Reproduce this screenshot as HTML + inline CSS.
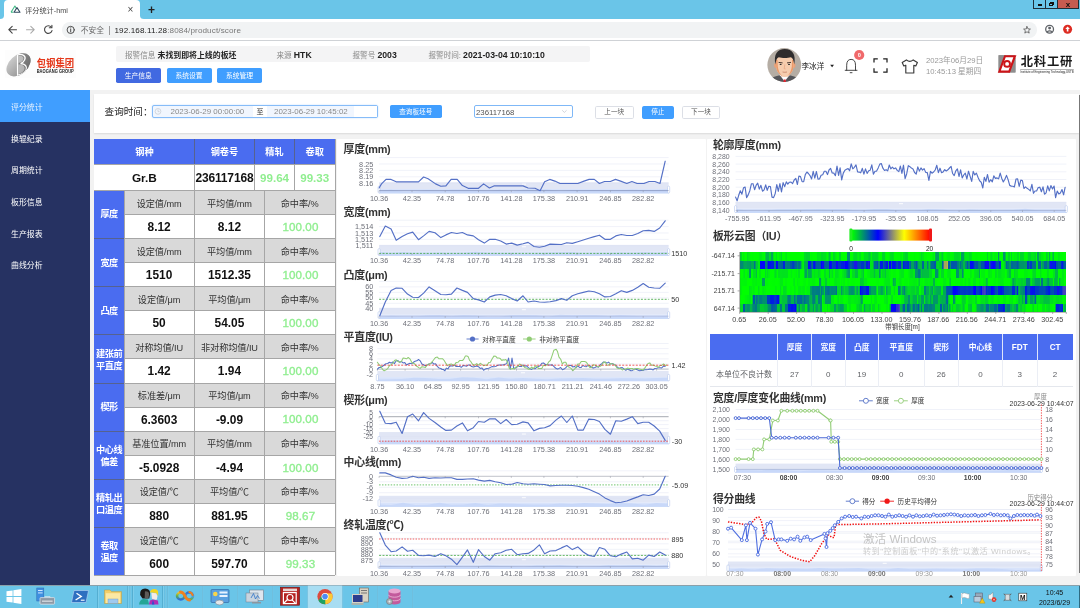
<!DOCTYPE html>
<html lang="zh-CN"><head><meta charset="utf-8"><title>评分统计-hmi</title><style>
*{box-sizing:border-box;margin:0;padding:0}
html,body{width:1080px;height:608px;overflow:hidden}
body{position:relative;background:#f2f2f2;font-family:"Liberation Sans","Noto Sans CJK SC",sans-serif;color:#333;font-size:9px;line-height:1}
.a{position:absolute}
.t{position:absolute;white-space:nowrap;line-height:1}
.c{text-align:center}
svg{position:absolute;left:0;top:0;overflow:visible}
svg text{font-family:"Liberation Sans","Noto Sans CJK SC",sans-serif}
.btn{position:absolute;color:#fff;font-size:7px;text-align:center;border-radius:1.7px;white-space:nowrap}
.cell{position:absolute;text-align:center;white-space:nowrap;overflow:hidden}
</style></head>
<body>
<div id="root" style="position:absolute;left:0;top:0;width:1080px;height:608px;will-change:transform">
<div class="a" style="left:0px;top:0px;width:1080px;height:19px;background:#6ac5e8"></div>
<div class="a" style="left:4px;top:0.4px;width:136px;height:19px;background:#fff;border-radius:4px 4px 0 0"></div>
<svg width="30" height="20" viewBox="0 0 30 20"><path d="M4 19 V19.5 H0 V19 Q4 19 4 15.5 Z M140 19 V19.5 H144 V19 Q140 19 140 15.5 Z" fill="#fff"/><path d="M11 12.2 L14.9 6 L16.6 8.7" fill="none" stroke="#3fb984" stroke-width="1.05" stroke-linejoin="round"/><path d="M11 12.2 H13.4" stroke="#3fb984" stroke-width="1.05"/><path d="M14 12.2 L17 7.6 L20 12.2 Z" fill="none" stroke="#2f495e" stroke-width="1.05" stroke-linejoin="round"/></svg>
<svg class="a" width="1" height="1"><text x="25.00" y="13" font-size="7.2" fill="#444">评分统计-hmi</text></svg>
<svg class="a" width="1" height="1"><text x="127.50" y="13" font-size="10" fill="#444">×</text></svg>
<svg class="a" width="1" height="1"><text x="148.00" y="14" font-size="12" fill="#222" font-weight="bold">+</text></svg>
<div class="a" style="left:1033.2px;top:0px;width:45.6px;height:8.7px;background:#1f2d36"></div>
<div class="a" style="left:1034px;top:0px;width:11.2px;height:8px;background:#6ac5e8"></div>
<div class="a" style="left:1037.6px;top:4.4px;width:4.6px;height:1.5px;background:#111"></div>
<div class="a" style="left:1046px;top:0px;width:11.4px;height:8px;background:#6ac5e8"></div>
<div class="a" style="left:1050.2px;top:2px;width:3.6px;height:3.4px;border:1.1px solid #111"></div>
<div class="a" style="left:1049.2px;top:3px;width:3.6px;height:3.4px;border:1.1px solid #111;background:#6ac5e8"></div>
<div class="a" style="left:1058px;top:0px;width:20.2px;height:8px;background:#c65b50"></div>
<svg class="a" width="1" height="1"><text x="1065.70" y="7" font-size="8" fill="#111" font-weight="bold">x</text></svg>
<div class="a" style="left:0px;top:19px;width:1080px;height:21.5px;background:#fff"></div>
<div class="a" style="left:0px;top:40.1px;width:1080px;height:0.8px;background:#cfd2d6"></div>
<div class="a" style="left:62px;top:22px;width:974.6px;height:15.6px;background:#f1f3f4;border-radius:7.8px"></div>
<svg width="1080" height="41" viewBox="0 0 1080 41">
<g fill="none" stroke="#444" stroke-width="1.1" stroke-linecap="round" stroke-linejoin="round">
<path d="M16.5 29.7 H9 M12.2 26.3 L8.8 29.7 L12.2 33.1"/>
<path d="M26.5 29.7 H34 M30.8 26.3 L34.2 29.7 L30.8 33.1" stroke="#aaa"/>
<path d="M51.3 27.2 A3.8 3.8 0 1 0 52 30.6"/>
<path d="M51.9 25.2 V27.8 H49.3" />
<circle cx="70.7" cy="29.9" r="3.6" stroke="#444" stroke-width="0.95"/>
<path d="M70.7 29.4 V32 M70.7 27.8 V28.1" stroke="#444" stroke-width="0.95"/>
<path d="M1027 26.6 L1028 28.9 L1030.4 29.1 L1028.6 30.7 L1029.2 33.1 L1027 31.8 L1024.8 33.1 L1025.4 30.7 L1023.6 29.1 L1026 28.9 Z" stroke="#555" stroke-width="0.8"/>
<circle cx="1049.6" cy="29.3" r="3.9" stroke="#5f6368" stroke-width="1.3"/>
<circle cx="1049.6" cy="28.1" r="1.45" fill="#5f6368" stroke="none"/>
<path d="M1046.9 31.9 Q1049.6 29.9 1052.3 31.9" stroke="#5f6368" stroke-width="1.1"/>
</g>
<circle cx="1067.6" cy="29.3" r="4.5" fill="#dd2c22"/>
<path d="M1067.6 26.6 L1069.9 29.1 H1068.4 V31.6 H1066.8 V29.1 H1065.3 Z" fill="#fff"/>
</svg>
<svg class="a" width="1" height="1"><text x="80.80" y="33" font-size="7.7" fill="#666">不安全</text></svg>
<div class="a" style="left:109.2px;top:25.5px;width:0.6px;height:9px;background:#999"></div>
<svg class="a" width="1" height="1"><text x="114.50" y="33" font-size="8.1" fill="#777" style="letter-spacing:0.12px"><tspan fill="#222">192.168.11.28</tspan>:8084/product/score</text></svg>
<div class="a" style="left:0px;top:40.8px;width:1080px;height:49.4px;background:#fff"></div>
<svg width="120" height="90" viewBox="0 0 120 90">
<defs>
<linearGradient id="lg1" x1="0" y1="0" x2="1" y2="1"><stop offset="0" stop-color="#e9e9e9"/><stop offset="0.45" stop-color="#b4b4b4"/><stop offset="1" stop-color="#707070"/></linearGradient>
<linearGradient id="lg2" x1="0" y1="0" x2="1" y2="1"><stop offset="0" stop-color="#9a9a9a"/><stop offset="1" stop-color="#555"/></linearGradient>
<clipPath id="lgc"><ellipse cx="18.5" cy="64.8" rx="13.9" ry="9.3" transform="rotate(-42 18.5 64.8)"/></clipPath>
</defs>
<rect x="5" y="50" width="71" height="28" fill="#fdfdfd"/>
<g clip-path="url(#lgc)">
<rect x="4" y="50" width="30" height="30" fill="url(#lg1)"/>
<rect x="17.6" y="50" width="16" height="30" fill="url(#lg2)"/>
<path d="M17.6 52 V78" stroke="#fff" stroke-width="1.3"/>
<path d="M17.6 54.6 C23 53.4 26.4 56.5 24.6 60 C23.6 62 22 63 20.6 63.6 C25 63.6 27.6 66.6 26 70 C24.4 73.2 21 74.6 17.6 75.2" fill="none" stroke="#fff" stroke-width="1.25"/>
<path d="M18.4 55.8 C22 55.2 24.4 57.2 23.2 59.8 C22.4 61.6 20.4 62.6 18.4 63 Z M18.4 64.6 C22.4 64.4 25.6 66.4 24.4 69.6 C23.4 72.2 20.8 73.6 18.4 74 Z" fill="#e8e8e8" fill-opacity="0.55"/>
</g>
<text x="36.7" y="67.3" font-size="10.3" font-weight="bold" fill="#e5391c" textLength="37.5" lengthAdjust="spacingAndGlyphs">包钢集团</text>
<text x="36.7" y="72.5" font-size="4.5" font-weight="bold" fill="#1a1a1a" textLength="37.1" lengthAdjust="spacingAndGlyphs">BAOGANG GROUP</text>
</svg>
<div class="a" style="left:116px;top:46px;width:474px;height:16.2px;background:#f4f4f5;border-radius:2px"></div>
<svg class="a" width="1" height="1"><text x="125.00" y="58" font-size="7.6" fill="#333"><tspan fill="#888">报警信息</tspan> <tspan fill="#222" font-weight="bold" font-size="8.7"><tspan font-size="7.9">未找到即将上线的板坯</tspan></tspan></text></svg>
<svg class="a" width="1" height="1"><text x="276.50" y="58" font-size="7.6" fill="#333"><tspan fill="#888">来源</tspan> <tspan fill="#222" font-weight="bold" font-size="8.7">HTK</tspan></text></svg>
<svg class="a" width="1" height="1"><text x="352.50" y="58" font-size="7.6" fill="#333"><tspan fill="#888">报警号</tspan> <tspan fill="#222" font-weight="bold" font-size="8.7">2003</tspan></text></svg>
<svg class="a" width="1" height="1"><text x="428.50" y="58" font-size="7.6" fill="#333"><tspan fill="#888">报警时间:</tspan> <tspan fill="#222" font-weight="bold" font-size="8.7">2021-03-04 10:10:10</tspan></text></svg>
<div class="a" style="left:116px;top:67.5px;width:44.5px;height:15.6px;background:#4169e1;border-radius:1.7px"></div>
<svg class="a" width="1" height="1"><text x="138.25" y="78" font-size="6.8" fill="#fff" text-anchor="middle">生产信息</text></svg>
<div class="a" style="left:166.5px;top:67.5px;width:45px;height:15.6px;background:#409eff;border-radius:1.7px"></div>
<svg class="a" width="1" height="1"><text x="189.00" y="78" font-size="6.8" fill="#fff" text-anchor="middle">系统设置</text></svg>
<div class="a" style="left:217px;top:67.5px;width:45px;height:15.6px;background:#409eff;border-radius:1.7px"></div>
<svg class="a" width="1" height="1"><text x="239.50" y="78" font-size="6.8" fill="#fff" text-anchor="middle">系统管理</text></svg>
<svg width="1080" height="92" viewBox="0 0 1080 92">
<defs><clipPath id="avc"><circle cx="784.3" cy="65" r="16.9"/></clipPath></defs>
<circle cx="784.3" cy="65" r="16.9" fill="#b5ada4"/>
<g clip-path="url(#avc)">
<path d="M765 86 Q768.5 77.2 778.6 75.4 L790.6 75.4 Q800.5 77.2 804 86 Z" fill="#55565a"/>
<path d="M779.4 74.6 L784.6 81.6 L790 74.6 Z" fill="#fff"/>
<path d="M783.8 79.4 L785.6 79.4 L786.1 83 L784.7 84 L783.3 83 Z" fill="#e8202c"/>
<rect x="781" y="70" width="7.4" height="6.4" fill="#e7a983"/>
<ellipse cx="775.6" cy="65.3" rx="1.5" ry="2.6" fill="#e9a27a"/>
<ellipse cx="794" cy="65.3" rx="1.5" ry="2.6" fill="#e9a27a"/>
<path d="M776 60 Q776 53.6 784.8 53.6 Q793.6 53.6 793.6 60 L793.4 67 Q793 72.8 787.4 76.2 Q784.8 77.6 782.2 76.2 Q776.6 72.8 776.2 67 Z" fill="#f6cdae"/>
<path d="M776 60 L776.2 67 Q776.6 72.8 782.2 76.2 Q778.4 72 777.8 66.5 L777.6 60 Z M793.6 60 L793.4 67 Q793 72.8 787.4 76.2 Q791.2 72 791.8 66.5 L792 60 Z" fill="#eb9a6a"/>
<path d="M775.4 64.6 C773.4 54 777.4 49.2 784.8 49 C792.4 49.2 796.2 54 794.2 64.6 C793.8 60.4 792.6 57.6 790.8 57.2 C787.6 58.2 782 58.2 778.8 57.2 C777 57.6 775.8 60.4 775.4 64.6 Z" fill="#2f2d2e"/>
<path d="M778.6 62.4 L782.6 62.9 M787 62.9 L791 62.4" stroke="#3a2c26" stroke-width="0.9"/>
<ellipse cx="780.6" cy="64.4" rx="1" ry="0.6" fill="#2b2b2b"/><ellipse cx="789" cy="64.4" rx="1" ry="0.6" fill="#2b2b2b"/>
<path d="M784.8 64.5 L784.2 68.8 L785.6 68.9" stroke="#e0926a" stroke-width="0.5" fill="none"/>
<path d="M782.6 72 Q784.8 72.6 787 72" stroke="#c07a5e" stroke-width="0.7" fill="none"/>
</g>
<path d="M830.2 64.8 L834 64.8 L832.1 67.2 Z" fill="#222"/>
<g fill="none" stroke="#333" stroke-width="0.9" stroke-linecap="round" stroke-linejoin="round">
<path d="M845.2 70.3 H857 M846.7 70.3 V65.2 Q846.7 59.4 851.1 59.4 Q855.5 59.4 855.5 65.2 V70.3 M850.2 72.7 H852"/>
</g>
<circle cx="859.2" cy="55" r="5.1" fill="#f0696b"/>
<g fill="none" stroke="#1f1f1f" stroke-width="1.25" stroke-linejoin="miter">
<path d="M874 62.6 V58.8 H877.8 M883.2 58.8 H887 V62.6 M887 68.2 V72 H883.2 M877.8 72 H874 V68.2"/>
</g>
<path d="M906.4 59.9 L902.2 62.6 L903.8 66 L905.8 65.2 V73 H913.8 V65.2 L915.8 66 L917.4 62.6 L913.2 59.9 Q909.8 62.8 906.4 59.9 Z" fill="none" stroke="#3a3a3a" stroke-width="1.15" stroke-linejoin="round"/>
<!-- USTB logo -->
<rect x="999.3" y="56" width="15" height="15.7" fill="#fff" stroke="#8e8e8e" stroke-width="1.5"/>
<path d="M998.6 55.3 H1006 L1000.6 70 L998.6 70 Z M1015.7 72.4 H1008.4 L1013.8 57.8 L1015.7 57.8 Z" fill="#8e8e8e"/>
<path d="M1005 56.2 H1014.9 L1009.2 71.6 H999.3 Z" fill="#fff" stroke="#cc1418" stroke-width="2.1" stroke-linejoin="miter"/>
<circle cx="1007.1" cy="63.9" r="2.9" fill="#fff" stroke="#cc1418" stroke-width="1.9"/>
<rect x="1020.2" y="69" width="53.6" height="0.45" fill="#555"/>
<text x="1020.4" y="72.6" font-size="3.4" fill="#222" textLength="53.2" lengthAdjust="spacingAndGlyphs">Institute of Engineering Technology,USTB</text>
</svg><svg class="a" width="1" height="1"><text x="801.50" y="69" font-size="7.6" fill="#222">李冰洋</text></svg><svg class="a" width="1" height="1"><text x="859.20" y="57" font-size="5.6" fill="#fff" font-weight="bold" text-anchor="middle">0</text></svg><svg class="a" width="1" height="1"><text x="926.00" y="63" font-size="7.7" fill="#999">2023年06月29日</text></svg><svg class="a" width="1" height="1"><text x="926.00" y="74" font-size="7.7" fill="#999">10:45:13 星期四</text></svg><svg class="a" width="1" height="1"><text x="1020.80" y="66" font-size="12.3" fill="#1a1a1a" font-weight="bold" style="letter-spacing:0.75px">北科工研</text></svg>
<div class="a" style="left:0px;top:90.2px;width:90px;height:495px;background:#263262"></div>
<div class="a" style="left:0px;top:90.2px;width:90px;height:31.6px;background:#409eff"></div>
<svg class="a" width="1" height="1"><text x="11.00" y="110" font-size="7.9" fill="#e8f3ff">评分统计</text></svg>
<svg class="a" width="1" height="1"><text x="11.00" y="142" font-size="7.9" fill="#fff">换辊纪录</text></svg>
<svg class="a" width="1" height="1"><text x="11.00" y="173" font-size="7.9" fill="#fff">周期统计</text></svg>
<svg class="a" width="1" height="1"><text x="11.00" y="205" font-size="7.9" fill="#fff">板形信息</text></svg>
<svg class="a" width="1" height="1"><text x="11.00" y="237" font-size="7.9" fill="#fff">生产报表</text></svg>
<svg class="a" width="1" height="1"><text x="11.00" y="268" font-size="7.9" fill="#fff">曲线分析</text></svg>
<div class="a" style="left:94px;top:94.3px;width:984.5px;height:38.8px;background:#fff;box-shadow:0 1px 1.5px rgba(0,0,0,.10)"></div>
<svg class="a" width="1" height="1"><text x="104.60" y="115" font-size="9.6" fill="#222">查询时间：</text></svg>
<div class="a" style="left:152px;top:104.6px;width:225.5px;height:13.6px;background:#f1f6fe;border:1px solid #86bcf8;border-radius:2px;box-shadow:0 0 1.5px #a9d1ff"></div>
<div class="a" style="left:252.7px;top:105.6px;width:14.6px;height:11.6px;background:#fff"></div>
<div class="a" style="left:354px;top:105.6px;width:22.5px;height:11.6px;background:#fff"></div>
<svg width="1080" height="130" viewBox="0 0 1080 130"><circle cx="158" cy="111.4" r="2.9" fill="none" stroke="#c3c7ce" stroke-width="0.65"/><path d="M158 109.6 V111.6 H159.6" fill="none" stroke="#c3c7ce" stroke-width="0.65"/></svg>
<svg class="a" width="1" height="1"><text x="170.50" y="114" font-size="7.95" fill="#8a8a8a">2023-06-29 00:00:00</text></svg>
<svg class="a" width="1" height="1"><text x="256.50" y="114" font-size="7" fill="#333">至</text></svg>
<svg class="a" width="1" height="1"><text x="274.00" y="114" font-size="7.95" fill="#8a8a8a">2023-06-29 10:45:02</text></svg>
<div class="a" style="left:390px;top:104.8px;width:51.5px;height:13.4px;background:#409eff;border-radius:1.7px"></div>
<svg class="a" width="1" height="1"><text x="415.75" y="114" font-size="6.6" fill="#fff" text-anchor="middle">查询板坯号</text></svg>
<div class="a" style="left:474px;top:104.6px;width:98.5px;height:13.6px;background:#fff;border:1px solid #7fb8f7;border-radius:2px"></div>
<svg class="a" width="1" height="1"><text x="476.00" y="115" font-size="7.8" fill="#555">236117168</text></svg>
<svg width="1080" height="130" viewBox="0 0 1080 130"><path d="M562.2 110.3 L564.4 112.4 L566.6 110.3" fill="none" stroke="#c0c4cc" stroke-width="0.7"/></svg>
<div class="a" style="left:595px;top:105.5px;width:38.5px;height:13px;background:#fff;border:0.8px solid #dcdfe6;border-radius:1.7px"></div>
<svg class="a" width="1" height="1"><text x="614.25" y="114" font-size="6.6" fill="#555" text-anchor="middle">上一块</text></svg>
<div class="a" style="left:642px;top:105.5px;width:31.5px;height:13px;background:#409eff;border:1px solid #409eff;border-radius:1.7px"></div>
<svg class="a" width="1" height="1"><text x="657.75" y="114" font-size="6.6" fill="#fff" text-anchor="middle">停止</text></svg>
<div class="a" style="left:682px;top:105.5px;width:38px;height:13px;background:#fff;border:0.8px solid #dcdfe6;border-radius:1.7px"></div>
<svg class="a" width="1" height="1"><text x="701.00" y="114" font-size="6.6" fill="#555" text-anchor="middle">下一块</text></svg>
<div class="a" style="left:94.4px;top:138.6px;width:240.4px;height:25.85px;background:#4a6cf0"></div>
<svg class="a" width="1" height="1"><text x="144.40" y="155" font-size="9.2" fill="#fff" font-weight="bold" text-anchor="middle">钢种</text></svg>
<svg class="a" width="1" height="1"><text x="224.45" y="155" font-size="9.2" fill="#fff" font-weight="bold" text-anchor="middle">钢卷号</text></svg>
<svg class="a" width="1" height="1"><text x="274.55" y="155" font-size="9.2" fill="#fff" font-weight="bold" text-anchor="middle">精轧</text></svg>
<svg class="a" width="1" height="1"><text x="314.70" y="155" font-size="9.2" fill="#fff" font-weight="bold" text-anchor="middle">卷取</text></svg>
<div class="a" style="left:94.4px;top:164.45px;width:240.4px;height:25.85px;background:#fff"></div>
<svg class="a" width="1" height="1"><text x="144.40" y="182" font-size="11.8" fill="#111" font-weight="bold" text-anchor="middle">Gr.B</text></svg>
<svg class="a" width="1" height="1"><text x="224.45" y="182" font-size="12.0" fill="#111" font-weight="bold" text-anchor="middle" style="letter-spacing:-0.15px">236117168</text></svg>
<svg class="a" width="1" height="1"><text x="274.55" y="182" font-size="11.6" fill="#90ee90" font-weight="bold" text-anchor="middle">99.64</text></svg>
<svg class="a" width="1" height="1"><text x="314.70" y="182" font-size="11.6" fill="#90ee90" font-weight="bold" text-anchor="middle">99.33</text></svg>
<div class="a" style="left:194.1px;top:138.6px;width:0.6px;height:25.85px;background:#56628f"></div>
<div class="a" style="left:194.1px;top:164.45px;width:0.6px;height:25.85px;background:#a6a6a6"></div>
<div class="a" style="left:254.2px;top:138.6px;width:0.6px;height:25.85px;background:#56628f"></div>
<div class="a" style="left:254.2px;top:164.45px;width:0.6px;height:25.85px;background:#a6a6a6"></div>
<div class="a" style="left:294.3px;top:138.6px;width:0.6px;height:25.85px;background:#56628f"></div>
<div class="a" style="left:294.3px;top:164.45px;width:0.6px;height:25.85px;background:#a6a6a6"></div>
<div class="a" style="left:94.4px;top:190.29999999999998px;width:29.39999999999999px;height:48.14px;background:#4a6cf0"></div>
<div class="a" style="left:123.8px;top:190.29999999999998px;width:211.0px;height:24.07px;background:#d9d9d9"></div>
<div class="a" style="left:123.8px;top:214.36999999999998px;width:211.0px;height:24.07px;background:#fff"></div>
<svg class="a" width="1" height="1"><text x="109.10" y="217" font-size="9.2" fill="#fff" font-weight="bold" text-anchor="middle" style="letter-spacing:-0.5px">厚度</text></svg>
<svg class="a" width="1" height="1"><text x="159.10" y="207" font-size="9.2" fill="#333" text-anchor="middle" style="letter-spacing:-0.1px">设定值/mm</text></svg>
<svg class="a" width="1" height="1"><text x="159.10" y="231" font-size="11.9" fill="#111" font-weight="bold" text-anchor="middle">8.12</text></svg>
<svg class="a" width="1" height="1"><text x="229.45" y="207" font-size="9.2" fill="#333" text-anchor="middle" style="letter-spacing:-0.1px">平均值/mm</text></svg>
<svg class="a" width="1" height="1"><text x="229.45" y="231" font-size="11.9" fill="#111" font-weight="bold" text-anchor="middle">8.12</text></svg>
<svg class="a" width="1" height="1"><text x="299.65" y="207" font-size="9.2" fill="#333" text-anchor="middle" style="letter-spacing:-0.1px">命中率/%</text></svg>
<svg class="a" width="1" height="1"><text x="300.45" y="231" font-size="11.6" fill="#90ee90" text-anchor="middle" style="letter-spacing:0.1px;stroke:#90ee90;stroke-width:0.35px">100.00</text></svg>
<div class="a" style="left:94.4px;top:189.99999999999997px;width:29.39999999999999px;height:0.6px;background:#a6a6a6"></div>
<div class="a" style="left:123.8px;top:189.99999999999997px;width:211.0px;height:0.6px;background:#a6a6a6"></div>
<div class="a" style="left:123.8px;top:214.06999999999996px;width:211.0px;height:0.6px;background:#a6a6a6"></div>
<div class="a" style="left:94.4px;top:238.44px;width:29.39999999999999px;height:48.14px;background:#4a6cf0"></div>
<div class="a" style="left:123.8px;top:238.44px;width:211.0px;height:24.07px;background:#d9d9d9"></div>
<div class="a" style="left:123.8px;top:262.51px;width:211.0px;height:24.07px;background:#fff"></div>
<svg class="a" width="1" height="1"><text x="109.10" y="266" font-size="9.2" fill="#fff" font-weight="bold" text-anchor="middle" style="letter-spacing:-0.5px">宽度</text></svg>
<svg class="a" width="1" height="1"><text x="159.10" y="255" font-size="9.2" fill="#333" text-anchor="middle" style="letter-spacing:-0.1px">设定值/mm</text></svg>
<svg class="a" width="1" height="1"><text x="159.10" y="279" font-size="11.9" fill="#111" font-weight="bold" text-anchor="middle">1510</text></svg>
<svg class="a" width="1" height="1"><text x="229.45" y="255" font-size="9.2" fill="#333" text-anchor="middle" style="letter-spacing:-0.1px">平均值/mm</text></svg>
<svg class="a" width="1" height="1"><text x="229.45" y="279" font-size="11.9" fill="#111" font-weight="bold" text-anchor="middle">1512.35</text></svg>
<svg class="a" width="1" height="1"><text x="299.65" y="255" font-size="9.2" fill="#333" text-anchor="middle" style="letter-spacing:-0.1px">命中率/%</text></svg>
<svg class="a" width="1" height="1"><text x="300.45" y="279" font-size="11.6" fill="#90ee90" text-anchor="middle" style="letter-spacing:0.1px;stroke:#90ee90;stroke-width:0.35px">100.00</text></svg>
<div class="a" style="left:94.4px;top:238.14px;width:29.39999999999999px;height:0.6px;background:#56628f"></div>
<div class="a" style="left:123.8px;top:238.14px;width:211.0px;height:0.6px;background:#a6a6a6"></div>
<div class="a" style="left:123.8px;top:262.21px;width:211.0px;height:0.6px;background:#a6a6a6"></div>
<div class="a" style="left:94.4px;top:286.58px;width:29.39999999999999px;height:48.14px;background:#4a6cf0"></div>
<div class="a" style="left:123.8px;top:286.58px;width:211.0px;height:24.07px;background:#d9d9d9"></div>
<div class="a" style="left:123.8px;top:310.65px;width:211.0px;height:24.07px;background:#fff"></div>
<svg class="a" width="1" height="1"><text x="109.10" y="314" font-size="9.2" fill="#fff" font-weight="bold" text-anchor="middle" style="letter-spacing:-0.5px">凸度</text></svg>
<svg class="a" width="1" height="1"><text x="159.10" y="303" font-size="9.2" fill="#333" text-anchor="middle" style="letter-spacing:-0.1px">设定值/μm</text></svg>
<svg class="a" width="1" height="1"><text x="159.10" y="327" font-size="11.9" fill="#111" font-weight="bold" text-anchor="middle">50</text></svg>
<svg class="a" width="1" height="1"><text x="229.45" y="303" font-size="9.2" fill="#333" text-anchor="middle" style="letter-spacing:-0.1px">平均值/μm</text></svg>
<svg class="a" width="1" height="1"><text x="229.45" y="327" font-size="11.9" fill="#111" font-weight="bold" text-anchor="middle">54.05</text></svg>
<svg class="a" width="1" height="1"><text x="299.65" y="303" font-size="9.2" fill="#333" text-anchor="middle" style="letter-spacing:-0.1px">命中率/%</text></svg>
<svg class="a" width="1" height="1"><text x="300.45" y="327" font-size="11.6" fill="#90ee90" text-anchor="middle" style="letter-spacing:0.1px;stroke:#90ee90;stroke-width:0.35px">100.00</text></svg>
<div class="a" style="left:94.4px;top:286.28px;width:29.39999999999999px;height:0.6px;background:#56628f"></div>
<div class="a" style="left:123.8px;top:286.28px;width:211.0px;height:0.6px;background:#a6a6a6"></div>
<div class="a" style="left:123.8px;top:310.34999999999997px;width:211.0px;height:0.6px;background:#a6a6a6"></div>
<div class="a" style="left:94.4px;top:334.72px;width:29.39999999999999px;height:48.14px;background:#4a6cf0"></div>
<div class="a" style="left:123.8px;top:334.72px;width:211.0px;height:24.07px;background:#d9d9d9"></div>
<div class="a" style="left:123.8px;top:358.79px;width:211.0px;height:24.07px;background:#fff"></div>
<svg class="a" width="1" height="1"><text x="109.10" y="357" font-size="9.2" fill="#fff" font-weight="bold" text-anchor="middle" style="letter-spacing:-0.5px">建张前</text></svg>
<svg class="a" width="1" height="1"><text x="109.10" y="369" font-size="9.2" fill="#fff" font-weight="bold" text-anchor="middle" style="letter-spacing:-0.5px">平直度</text></svg>
<svg class="a" width="1" height="1"><text x="159.10" y="351" font-size="9.2" fill="#333" text-anchor="middle" style="letter-spacing:-0.1px">对称均值/IU</text></svg>
<svg class="a" width="1" height="1"><text x="159.10" y="375" font-size="11.9" fill="#111" font-weight="bold" text-anchor="middle">1.42</text></svg>
<svg class="a" width="1" height="1"><text x="229.45" y="351" font-size="9.2" fill="#333" text-anchor="middle" style="letter-spacing:-0.1px">非对称均值/IU</text></svg>
<svg class="a" width="1" height="1"><text x="229.45" y="375" font-size="11.9" fill="#111" font-weight="bold" text-anchor="middle">1.94</text></svg>
<svg class="a" width="1" height="1"><text x="299.65" y="351" font-size="9.2" fill="#333" text-anchor="middle" style="letter-spacing:-0.1px">命中率/%</text></svg>
<svg class="a" width="1" height="1"><text x="300.45" y="375" font-size="11.6" fill="#90ee90" text-anchor="middle" style="letter-spacing:0.1px;stroke:#90ee90;stroke-width:0.35px">100.00</text></svg>
<div class="a" style="left:94.4px;top:334.42px;width:29.39999999999999px;height:0.6px;background:#56628f"></div>
<div class="a" style="left:123.8px;top:334.42px;width:211.0px;height:0.6px;background:#a6a6a6"></div>
<div class="a" style="left:123.8px;top:358.49px;width:211.0px;height:0.6px;background:#a6a6a6"></div>
<div class="a" style="left:94.4px;top:382.86px;width:29.39999999999999px;height:48.14px;background:#4a6cf0"></div>
<div class="a" style="left:123.8px;top:382.86px;width:211.0px;height:24.07px;background:#d9d9d9"></div>
<div class="a" style="left:123.8px;top:406.93px;width:211.0px;height:24.07px;background:#fff"></div>
<svg class="a" width="1" height="1"><text x="109.10" y="410" font-size="9.2" fill="#fff" font-weight="bold" text-anchor="middle" style="letter-spacing:-0.5px">楔形</text></svg>
<svg class="a" width="1" height="1"><text x="159.10" y="399" font-size="9.2" fill="#333" text-anchor="middle" style="letter-spacing:-0.1px">标准差/μm</text></svg>
<svg class="a" width="1" height="1"><text x="159.10" y="424" font-size="11.9" fill="#111" font-weight="bold" text-anchor="middle">6.3603</text></svg>
<svg class="a" width="1" height="1"><text x="229.45" y="399" font-size="9.2" fill="#333" text-anchor="middle" style="letter-spacing:-0.1px">平均值/μm</text></svg>
<svg class="a" width="1" height="1"><text x="229.45" y="424" font-size="11.9" fill="#111" font-weight="bold" text-anchor="middle">-9.09</text></svg>
<svg class="a" width="1" height="1"><text x="299.65" y="399" font-size="9.2" fill="#333" text-anchor="middle" style="letter-spacing:-0.1px">命中率/%</text></svg>
<svg class="a" width="1" height="1"><text x="300.45" y="423" font-size="11.6" fill="#90ee90" text-anchor="middle" style="letter-spacing:0.1px;stroke:#90ee90;stroke-width:0.35px">100.00</text></svg>
<div class="a" style="left:94.4px;top:382.56px;width:29.39999999999999px;height:0.6px;background:#56628f"></div>
<div class="a" style="left:123.8px;top:382.56px;width:211.0px;height:0.6px;background:#a6a6a6"></div>
<div class="a" style="left:123.8px;top:406.63px;width:211.0px;height:0.6px;background:#a6a6a6"></div>
<div class="a" style="left:94.4px;top:431.0px;width:29.39999999999999px;height:48.14px;background:#4a6cf0"></div>
<div class="a" style="left:123.8px;top:431.0px;width:211.0px;height:24.07px;background:#d9d9d9"></div>
<div class="a" style="left:123.8px;top:455.07px;width:211.0px;height:24.07px;background:#fff"></div>
<svg class="a" width="1" height="1"><text x="109.10" y="453" font-size="9.2" fill="#fff" font-weight="bold" text-anchor="middle" style="letter-spacing:-0.5px">中心线</text></svg>
<svg class="a" width="1" height="1"><text x="109.10" y="465" font-size="9.2" fill="#fff" font-weight="bold" text-anchor="middle" style="letter-spacing:-0.5px">偏差</text></svg>
<svg class="a" width="1" height="1"><text x="159.10" y="447" font-size="9.2" fill="#333" text-anchor="middle" style="letter-spacing:-0.1px">基准位置/mm</text></svg>
<svg class="a" width="1" height="1"><text x="159.10" y="472" font-size="11.9" fill="#111" font-weight="bold" text-anchor="middle">-5.0928</text></svg>
<svg class="a" width="1" height="1"><text x="229.45" y="447" font-size="9.2" fill="#333" text-anchor="middle" style="letter-spacing:-0.1px">平均值/mm</text></svg>
<svg class="a" width="1" height="1"><text x="229.45" y="472" font-size="11.9" fill="#111" font-weight="bold" text-anchor="middle">-4.94</text></svg>
<svg class="a" width="1" height="1"><text x="299.65" y="447" font-size="9.2" fill="#333" text-anchor="middle" style="letter-spacing:-0.1px">命中率/%</text></svg>
<svg class="a" width="1" height="1"><text x="300.45" y="472" font-size="11.6" fill="#90ee90" text-anchor="middle" style="letter-spacing:0.1px;stroke:#90ee90;stroke-width:0.35px">100.00</text></svg>
<div class="a" style="left:94.4px;top:430.7px;width:29.39999999999999px;height:0.6px;background:#56628f"></div>
<div class="a" style="left:123.8px;top:430.7px;width:211.0px;height:0.6px;background:#a6a6a6"></div>
<div class="a" style="left:123.8px;top:454.77px;width:211.0px;height:0.6px;background:#a6a6a6"></div>
<div class="a" style="left:94.4px;top:479.14px;width:29.39999999999999px;height:48.14px;background:#4a6cf0"></div>
<div class="a" style="left:123.8px;top:479.14px;width:211.0px;height:24.07px;background:#d9d9d9"></div>
<div class="a" style="left:123.8px;top:503.21px;width:211.0px;height:24.07px;background:#fff"></div>
<svg class="a" width="1" height="1"><text x="109.10" y="501" font-size="9.2" fill="#fff" font-weight="bold" text-anchor="middle" style="letter-spacing:-0.5px">精轧出</text></svg>
<svg class="a" width="1" height="1"><text x="109.10" y="513" font-size="9.2" fill="#fff" font-weight="bold" text-anchor="middle" style="letter-spacing:-0.5px">口温度</text></svg>
<svg class="a" width="1" height="1"><text x="159.10" y="495" font-size="9.2" fill="#333" text-anchor="middle" style="letter-spacing:-0.1px">设定值/℃</text></svg>
<svg class="a" width="1" height="1"><text x="159.10" y="520" font-size="11.9" fill="#111" font-weight="bold" text-anchor="middle">880</text></svg>
<svg class="a" width="1" height="1"><text x="229.45" y="495" font-size="9.2" fill="#333" text-anchor="middle" style="letter-spacing:-0.1px">平均值/℃</text></svg>
<svg class="a" width="1" height="1"><text x="229.45" y="520" font-size="11.9" fill="#111" font-weight="bold" text-anchor="middle">881.95</text></svg>
<svg class="a" width="1" height="1"><text x="299.65" y="495" font-size="9.2" fill="#333" text-anchor="middle" style="letter-spacing:-0.1px">命中率/%</text></svg>
<svg class="a" width="1" height="1"><text x="300.45" y="520" font-size="11.6" fill="#90ee90" text-anchor="middle" style="letter-spacing:0.1px;stroke:#90ee90;stroke-width:0.35px">98.67</text></svg>
<div class="a" style="left:94.4px;top:478.84px;width:29.39999999999999px;height:0.6px;background:#56628f"></div>
<div class="a" style="left:123.8px;top:478.84px;width:211.0px;height:0.6px;background:#a6a6a6"></div>
<div class="a" style="left:123.8px;top:502.90999999999997px;width:211.0px;height:0.6px;background:#a6a6a6"></div>
<div class="a" style="left:94.4px;top:527.28px;width:29.39999999999999px;height:48.14px;background:#4a6cf0"></div>
<div class="a" style="left:123.8px;top:527.28px;width:211.0px;height:24.07px;background:#d9d9d9"></div>
<div class="a" style="left:123.8px;top:551.35px;width:211.0px;height:24.07px;background:#fff"></div>
<svg class="a" width="1" height="1"><text x="109.10" y="549" font-size="9.2" fill="#fff" font-weight="bold" text-anchor="middle" style="letter-spacing:-0.5px">卷取</text></svg>
<svg class="a" width="1" height="1"><text x="109.10" y="561" font-size="9.2" fill="#fff" font-weight="bold" text-anchor="middle" style="letter-spacing:-0.5px">温度</text></svg>
<svg class="a" width="1" height="1"><text x="159.10" y="544" font-size="9.2" fill="#333" text-anchor="middle" style="letter-spacing:-0.1px">设定值/℃</text></svg>
<svg class="a" width="1" height="1"><text x="159.10" y="568" font-size="11.9" fill="#111" font-weight="bold" text-anchor="middle">600</text></svg>
<svg class="a" width="1" height="1"><text x="229.45" y="544" font-size="9.2" fill="#333" text-anchor="middle" style="letter-spacing:-0.1px">平均值/℃</text></svg>
<svg class="a" width="1" height="1"><text x="229.45" y="568" font-size="11.9" fill="#111" font-weight="bold" text-anchor="middle">597.70</text></svg>
<svg class="a" width="1" height="1"><text x="299.65" y="544" font-size="9.2" fill="#333" text-anchor="middle" style="letter-spacing:-0.1px">命中率/%</text></svg>
<svg class="a" width="1" height="1"><text x="300.45" y="568" font-size="11.6" fill="#90ee90" text-anchor="middle" style="letter-spacing:0.1px;stroke:#90ee90;stroke-width:0.35px">99.33</text></svg>
<div class="a" style="left:94.4px;top:526.98px;width:29.39999999999999px;height:0.6px;background:#56628f"></div>
<div class="a" style="left:123.8px;top:526.98px;width:211.0px;height:0.6px;background:#a6a6a6"></div>
<div class="a" style="left:123.8px;top:551.0500000000001px;width:211.0px;height:0.6px;background:#a6a6a6"></div>
<div class="a" style="left:123.5px;top:190.29999999999998px;width:0.6px;height:385.12px;background:#a6a6a6"></div>
<div class="a" style="left:194.1px;top:190.29999999999998px;width:0.6px;height:385.12px;background:#a6a6a6"></div>
<div class="a" style="left:264.2px;top:190.29999999999998px;width:0.6px;height:385.12px;background:#a6a6a6"></div>
<div class="a" style="left:334.5px;top:138.6px;width:0.6px;height:436.82px;background:#a6a6a6"></div>
<div class="a" style="left:94.4px;top:575.1200000000001px;width:240.4px;height:0.6px;background:#a6a6a6"></div>
<div class="a" style="left:94.4px;top:164.14999999999998px;width:240.4px;height:0.6px;background:#a6a6a6"></div>
<div class="a" style="left:337.2px;top:138.6px;width:368.5px;height:437.4px;background:#fff;border-radius:1px"></div>
<svg width="1080" height="608" viewBox="0 0 1080 608"><text x="343.6" y="153.40" font-size="10.9" font-weight="bold" fill="#333" letter-spacing="-0.25">厚度(mm)</text><path d="M379.1 157.6 H668.6" stroke="#e6eaf5" stroke-width="0.6"/><path d="M379.1 164.0 H668.6" stroke="#e6eaf5" stroke-width="0.6"/><path d="M379.1 170.4 H668.6" stroke="#e6eaf5" stroke-width="0.6"/><path d="M379.1 176.8 H668.6" stroke="#e6eaf5" stroke-width="0.6"/><path d="M379.1 183.2 H668.6" stroke="#e6eaf5" stroke-width="0.6"/><text x="373.30" y="167" font-size="7.3" fill="#6e7079" text-anchor="end" font-weight="normal" >8.25</text><text x="373.30" y="173" font-size="7.3" fill="#6e7079" text-anchor="end" font-weight="normal" >8.22</text><text x="373.30" y="179" font-size="7.3" fill="#6e7079" text-anchor="end" font-weight="normal" >8.19</text><text x="373.30" y="186" font-size="7.3" fill="#6e7079" text-anchor="end" font-weight="normal" >8.16</text><rect x="379.1" y="182.3" width="289.5" height="6.7" fill="#d9e0f3" fill-opacity="0.8"/><rect x="379.1" y="189.0" width="289.5" height="4.4" fill="#d4e0fb" fill-opacity="0.9"/><polygon points="379.1,193.4 379.1,190.6 391.2,189.7 403.2,191.5 415.3,191.4 427.4,190.3 439.4,190.8 451.5,189.7 463.5,189.7 475.6,189.9 487.7,190.9 499.7,189.7 511.8,191.6 523.9,189.4 535.9,189.7 548.0,189.4 560.0,191.1 572.1,190.1 584.2,190.3 596.2,190.0 608.3,190.7 620.4,190.2 632.4,189.7 644.5,190.2 656.5,189.9 668.6,189.5 668.6,193.4" fill="#bccff8" fill-opacity="0.55"/><rect x="378.0" y="186.1" width="2.2" height="6.9" rx="1.1" fill="#fff" stroke="#a9bce8" stroke-width="0.5"/><rect x="667.5" y="186.1" width="2.2" height="6.9" rx="1.1" fill="#fff" stroke="#a9bce8" stroke-width="0.5"/><rect x="521.9" y="183.6" width="4" height="1.1" fill="#fff" fill-opacity="0.8"/><path d="M379.1 190.6 H668.6" stroke="#7d8bb5" stroke-width="0.7"/><polyline points="379.1,188.0 381.5,183.9 386.0,179.4 391.1,179.4 396.2,181.8 418.5,181.8 423.6,177.0 428.1,178.7 435.6,183.9 440.8,186.2 445.9,185.9 451.1,179.4 457.2,179.4 462.4,185.6 468.2,188.3 478.5,188.3 483.6,183.9 489.4,188.0 493.9,185.9 523.0,185.9 528.1,188.0 535.0,188.3 540.1,190.7 544.6,181.8 549.7,179.4 554.9,181.1 560.0,183.5 577.8,183.5 584.0,181.1 589.1,179.4 594.3,179.4 599.4,183.5 604.5,181.5 610.4,181.5 615.5,179.4 620.6,181.1 626.8,183.5 631.9,181.5 637.1,183.5 643.9,183.5 649.1,181.5 654.9,181.5 660.0,183.5 665.2,161.2" fill="none" stroke="#5470c6" stroke-width="1.15" stroke-linejoin="round" stroke-linecap="round" /><text x="379.10" y="201" font-size="7.3" fill="#6e7079" text-anchor="middle" font-weight="normal" >10.36</text><path d="M379.1 190.6 v1.6" stroke="#8a8f9c" stroke-width="0.5"/><text x="412.00" y="201" font-size="7.3" fill="#6e7079" text-anchor="middle" font-weight="normal" >42.35</text><path d="M412.0 190.6 v1.6" stroke="#8a8f9c" stroke-width="0.5"/><text x="445.20" y="201" font-size="7.3" fill="#6e7079" text-anchor="middle" font-weight="normal" >74.78</text><path d="M445.2 190.6 v1.6" stroke="#8a8f9c" stroke-width="0.5"/><text x="478.50" y="201" font-size="7.3" fill="#6e7079" text-anchor="middle" font-weight="normal" >107.76</text><path d="M478.5 190.6 v1.6" stroke="#8a8f9c" stroke-width="0.5"/><text x="511.30" y="201" font-size="7.3" fill="#6e7079" text-anchor="middle" font-weight="normal" >141.28</text><path d="M511.3 190.6 v1.6" stroke="#8a8f9c" stroke-width="0.5"/><text x="543.90" y="201" font-size="7.3" fill="#6e7079" text-anchor="middle" font-weight="normal" >175.38</text><path d="M543.9 190.6 v1.6" stroke="#8a8f9c" stroke-width="0.5"/><text x="577.10" y="201" font-size="7.3" fill="#6e7079" text-anchor="middle" font-weight="normal" >210.91</text><path d="M577.1 190.6 v1.6" stroke="#8a8f9c" stroke-width="0.5"/><text x="610.40" y="201" font-size="7.3" fill="#6e7079" text-anchor="middle" font-weight="normal" >246.85</text><path d="M610.4 190.6 v1.6" stroke="#8a8f9c" stroke-width="0.5"/><text x="643.20" y="201" font-size="7.3" fill="#6e7079" text-anchor="middle" font-weight="normal" >282.82</text><path d="M643.2 190.6 v1.6" stroke="#8a8f9c" stroke-width="0.5"/><text x="343.6" y="215.95" font-size="10.9" font-weight="bold" fill="#333" letter-spacing="-0.25">宽度(mm)</text><path d="M379.1 220.2 H668.6" stroke="#e6eaf5" stroke-width="0.6"/><path d="M379.1 226.6 H668.6" stroke="#e6eaf5" stroke-width="0.6"/><path d="M379.1 233.0 H668.6" stroke="#e6eaf5" stroke-width="0.6"/><path d="M379.1 239.4 H668.6" stroke="#e6eaf5" stroke-width="0.6"/><path d="M379.1 245.8 H668.6" stroke="#e6eaf5" stroke-width="0.6"/><text x="373.30" y="229" font-size="7.3" fill="#6e7079" text-anchor="end" font-weight="normal" >1,514</text><text x="373.30" y="236" font-size="7.3" fill="#6e7079" text-anchor="end" font-weight="normal" >1,513</text><text x="373.30" y="242" font-size="7.3" fill="#6e7079" text-anchor="end" font-weight="normal" >1,512</text><text x="373.30" y="248" font-size="7.3" fill="#6e7079" text-anchor="end" font-weight="normal" >1,511</text><rect x="379.1" y="244.9" width="289.5" height="6.7" fill="#d9e0f3" fill-opacity="0.8"/><rect x="379.1" y="251.5" width="289.5" height="4.4" fill="#d4e0fb" fill-opacity="0.9"/><polygon points="379.1,256.0 379.1,252.1 391.2,253.2 403.2,252.1 415.3,253.5 427.4,253.2 439.4,252.7 451.5,253.2 463.5,253.1 475.6,251.8 487.7,253.0 499.7,253.2 511.8,253.0 523.9,253.9 535.9,253.5 548.0,252.7 560.0,252.3 572.1,252.0 584.2,253.7 596.2,253.4 608.3,253.2 620.4,252.8 632.4,253.0 644.5,252.3 656.5,253.0 668.6,252.1 668.6,256.0" fill="#bccff8" fill-opacity="0.55"/><rect x="378.0" y="248.6" width="2.2" height="6.9" rx="1.1" fill="#fff" stroke="#a9bce8" stroke-width="0.5"/><rect x="667.5" y="248.6" width="2.2" height="6.9" rx="1.1" fill="#fff" stroke="#a9bce8" stroke-width="0.5"/><rect x="521.9" y="246.2" width="4" height="1.1" fill="#fff" fill-opacity="0.8"/><polyline points="379.8,236.6 385.3,226.0 391.1,229.0 396.2,240.3 402.1,236.6 407.5,233.8 412.7,232.1 418.5,239.7 423.6,235.9 429.1,231.4 435.0,232.8 440.8,237.6 445.9,234.9 451.4,232.5 456.9,233.5 462.4,232.5 467.5,234.9 473.3,235.9 478.5,239.7 484.3,243.1 489.8,239.3 495.2,239.3 500.7,241.0 506.2,244.1 511.7,243.1 517.2,245.1 523.0,243.8 528.1,242.4 534.0,246.5 539.4,247.2 544.6,246.2 550.1,244.1 561.4,244.5 566.8,242.7 572.3,243.4 577.8,241.7 583.3,240.0 588.8,238.3 594.3,236.6 599.4,235.2 604.9,239.3 610.4,239.3 615.8,235.9 621.3,234.5 626.8,235.5 632.3,235.5 637.8,233.5 643.2,230.7 648.7,230.4 654.2,231.4 659.7,228.0 665.2,220.8" fill="none" stroke="#5470c6" stroke-width="1.15" stroke-linejoin="round" stroke-linecap="round" /><path d="M379.1 253.4 H668.6" stroke="#3aa53a" stroke-width="0.8" stroke-dasharray="2 1.4"/><text x="671.30" y="256" font-size="7.2" fill="#333" text-anchor="start" font-weight="normal" >1510</text><text x="379.10" y="263" font-size="7.3" fill="#6e7079" text-anchor="middle" font-weight="normal" >10.36</text><path d="M379.1 253.4 v1.6" stroke="#8a8f9c" stroke-width="0.5"/><text x="412.00" y="263" font-size="7.3" fill="#6e7079" text-anchor="middle" font-weight="normal" >42.35</text><path d="M412.0 253.4 v1.6" stroke="#8a8f9c" stroke-width="0.5"/><text x="445.20" y="263" font-size="7.3" fill="#6e7079" text-anchor="middle" font-weight="normal" >74.78</text><path d="M445.2 253.4 v1.6" stroke="#8a8f9c" stroke-width="0.5"/><text x="478.50" y="263" font-size="7.3" fill="#6e7079" text-anchor="middle" font-weight="normal" >107.76</text><path d="M478.5 253.4 v1.6" stroke="#8a8f9c" stroke-width="0.5"/><text x="511.30" y="263" font-size="7.3" fill="#6e7079" text-anchor="middle" font-weight="normal" >141.28</text><path d="M511.3 253.4 v1.6" stroke="#8a8f9c" stroke-width="0.5"/><text x="543.90" y="263" font-size="7.3" fill="#6e7079" text-anchor="middle" font-weight="normal" >175.38</text><path d="M543.9 253.4 v1.6" stroke="#8a8f9c" stroke-width="0.5"/><text x="577.10" y="263" font-size="7.3" fill="#6e7079" text-anchor="middle" font-weight="normal" >210.91</text><path d="M577.1 253.4 v1.6" stroke="#8a8f9c" stroke-width="0.5"/><text x="610.40" y="263" font-size="7.3" fill="#6e7079" text-anchor="middle" font-weight="normal" >246.85</text><path d="M610.4 253.4 v1.6" stroke="#8a8f9c" stroke-width="0.5"/><text x="643.20" y="263" font-size="7.3" fill="#6e7079" text-anchor="middle" font-weight="normal" >282.82</text><path d="M643.2 253.4 v1.6" stroke="#8a8f9c" stroke-width="0.5"/><text x="343.6" y="278.50" font-size="10.9" font-weight="bold" fill="#333" letter-spacing="-0.25">凸度(μm)</text><path d="M379.1 281.4 H668.6" stroke="#e6eaf5" stroke-width="0.6"/><path d="M379.1 286.9 H668.6" stroke="#e6eaf5" stroke-width="0.6"/><path d="M379.1 292.4 H668.6" stroke="#e6eaf5" stroke-width="0.6"/><path d="M379.1 297.8 H668.6" stroke="#e6eaf5" stroke-width="0.6"/><path d="M379.1 303.3 H668.6" stroke="#e6eaf5" stroke-width="0.6"/><path d="M379.1 308.8 H668.6" stroke="#e6eaf5" stroke-width="0.6"/><text x="373.30" y="289" font-size="7.3" fill="#6e7079" text-anchor="end" font-weight="normal" >60</text><text x="373.30" y="295" font-size="7.3" fill="#6e7079" text-anchor="end" font-weight="normal" >55</text><text x="373.30" y="300" font-size="7.3" fill="#6e7079" text-anchor="end" font-weight="normal" >50</text><text x="373.30" y="306" font-size="7.3" fill="#6e7079" text-anchor="end" font-weight="normal" >45</text><text x="373.30" y="311" font-size="7.3" fill="#6e7079" text-anchor="end" font-weight="normal" >40</text><rect x="379.1" y="307.8" width="289.5" height="6.7" fill="#d9e0f3" fill-opacity="0.8"/><rect x="379.1" y="314.5" width="289.5" height="4.4" fill="#d4e0fb" fill-opacity="0.9"/><polygon points="379.1,318.9 379.1,317.1 391.2,315.8 403.2,316.4 415.3,316.5 427.4,315.2 439.4,314.9 451.5,316.2 463.5,315.0 475.6,315.6 487.7,316.9 499.7,316.8 511.8,315.0 523.9,314.9 535.9,315.2 548.0,316.7 560.0,314.7 572.1,315.2 584.2,314.9 596.2,315.0 608.3,316.0 620.4,315.1 632.4,315.7 644.5,316.5 656.5,316.4 668.6,315.7 668.6,318.9" fill="#bccff8" fill-opacity="0.55"/><rect x="378.0" y="311.6" width="2.2" height="6.9" rx="1.1" fill="#fff" stroke="#a9bce8" stroke-width="0.5"/><rect x="667.5" y="311.6" width="2.2" height="6.9" rx="1.1" fill="#fff" stroke="#a9bce8" stroke-width="0.5"/><rect x="521.9" y="309.1" width="4" height="1.1" fill="#fff" fill-opacity="0.8"/><path d="M379.1 316.2 H668.6" stroke="#a8b3d6" stroke-width="0.6"/><path d="M379.1 299.3 H668.6" stroke="#3aa53a" stroke-width="0.8" stroke-dasharray="2 1.4"/><text x="671.30" y="302" font-size="7.2" fill="#333" text-anchor="start" font-weight="normal" >50</text><polyline points="379.8,315.7 385.3,302.0 391.1,290.4 396.2,288.0 402.1,288.3 407.5,294.1 412.7,297.2 418.5,297.5 423.6,293.1 429.1,286.9 435.0,290.7 440.8,294.5 445.9,294.8 451.4,294.1 456.9,288.0 462.4,290.4 467.5,292.4 473.3,298.6 478.5,299.9 484.3,302.0 489.8,296.9 495.2,295.1 500.7,294.5 506.2,295.8 511.7,298.6 517.2,301.0 523.0,295.8 528.1,302.0 534.0,301.0 539.4,302.0 544.6,302.3 550.1,301.7 555.9,300.6 561.4,298.6 566.8,300.3 572.3,295.8 577.8,293.8 583.3,292.4 588.8,291.0 594.3,291.7 599.4,293.8 604.9,296.9 610.4,296.5 615.8,293.8 621.3,290.7 626.8,292.4 632.3,290.4 637.8,287.3 643.2,283.5 648.7,287.3 654.2,288.0 659.7,288.3 665.2,283.2" fill="none" stroke="#5470c6" stroke-width="1.15" stroke-linejoin="round" stroke-linecap="round" /><text x="379.10" y="326" font-size="7.3" fill="#6e7079" text-anchor="middle" font-weight="normal" >10.36</text><path d="M379.1 316.2 v1.6" stroke="#8a8f9c" stroke-width="0.5"/><text x="412.00" y="326" font-size="7.3" fill="#6e7079" text-anchor="middle" font-weight="normal" >42.35</text><path d="M412.0 316.2 v1.6" stroke="#8a8f9c" stroke-width="0.5"/><text x="445.20" y="326" font-size="7.3" fill="#6e7079" text-anchor="middle" font-weight="normal" >74.78</text><path d="M445.2 316.2 v1.6" stroke="#8a8f9c" stroke-width="0.5"/><text x="478.50" y="326" font-size="7.3" fill="#6e7079" text-anchor="middle" font-weight="normal" >107.76</text><path d="M478.5 316.2 v1.6" stroke="#8a8f9c" stroke-width="0.5"/><text x="511.30" y="326" font-size="7.3" fill="#6e7079" text-anchor="middle" font-weight="normal" >141.28</text><path d="M511.3 316.2 v1.6" stroke="#8a8f9c" stroke-width="0.5"/><text x="543.90" y="326" font-size="7.3" fill="#6e7079" text-anchor="middle" font-weight="normal" >175.38</text><path d="M543.9 316.2 v1.6" stroke="#8a8f9c" stroke-width="0.5"/><text x="577.10" y="326" font-size="7.3" fill="#6e7079" text-anchor="middle" font-weight="normal" >210.91</text><path d="M577.1 316.2 v1.6" stroke="#8a8f9c" stroke-width="0.5"/><text x="610.40" y="326" font-size="7.3" fill="#6e7079" text-anchor="middle" font-weight="normal" >246.85</text><path d="M610.4 316.2 v1.6" stroke="#8a8f9c" stroke-width="0.5"/><text x="643.20" y="326" font-size="7.3" fill="#6e7079" text-anchor="middle" font-weight="normal" >282.82</text><path d="M643.2 316.2 v1.6" stroke="#8a8f9c" stroke-width="0.5"/><text x="343.6" y="341.05" font-size="10.9" font-weight="bold" fill="#333" letter-spacing="-0.25">平直度(IU)</text><path d="M377.4 343.5 H668.6" stroke="#e6eaf5" stroke-width="0.6"/><path d="M377.4 348.6 H668.6" stroke="#e6eaf5" stroke-width="0.6"/><path d="M377.4 353.8 H668.6" stroke="#e6eaf5" stroke-width="0.6"/><path d="M377.4 358.9 H668.6" stroke="#e6eaf5" stroke-width="0.6"/><path d="M377.4 364.0 H668.6" stroke="#e6eaf5" stroke-width="0.6"/><text x="373.00" y="351" font-size="7.3" fill="#6e7079" text-anchor="end" font-weight="normal" >8</text><text x="373.00" y="356" font-size="7.3" fill="#6e7079" text-anchor="end" font-weight="normal" >6</text><text x="373.00" y="361" font-size="7.3" fill="#6e7079" text-anchor="end" font-weight="normal" >4</text><text x="373.00" y="367" font-size="7.3" fill="#6e7079" text-anchor="end" font-weight="normal" >2</text><text x="373.00" y="372" font-size="7.3" fill="#6e7079" text-anchor="end" font-weight="normal" >0</text><text x="373.00" y="377" font-size="7.3" fill="#6e7079" text-anchor="end" font-weight="normal" >-2</text><path d="M377.4 369.1 H668.6" stroke="#9aa0ad" stroke-width="0.7"/><rect x="377.4" y="370.9" width="291.2" height="6.2" fill="#d9e0f3" fill-opacity="0.8"/><rect x="377.4" y="377.1" width="291.2" height="4.1" fill="#d4e0fb" fill-opacity="0.9"/><polygon points="377.4,381.2 377.4,379.5 389.5,379.3 401.7,378.9 413.8,377.8 425.9,378.0 438.1,378.9 450.2,379.1 462.3,377.3 474.5,377.7 486.6,379.3 498.7,377.6 510.9,378.8 523.0,378.0 535.1,378.7 547.3,379.2 559.4,378.6 571.5,378.2 583.7,378.0 595.8,378.7 607.9,378.7 620.1,378.2 632.2,378.3 644.3,378.5 656.5,377.9 668.6,377.7 668.6,381.2" fill="#bccff8" fill-opacity="0.55"/><rect x="376.3" y="374.4" width="2.2" height="6.4" rx="1.1" fill="#fff" stroke="#a9bce8" stroke-width="0.5"/><rect x="667.5" y="374.4" width="2.2" height="6.4" rx="1.1" fill="#fff" stroke="#a9bce8" stroke-width="0.5"/><rect x="521.0" y="372.2" width="4" height="1.1" fill="#fff" fill-opacity="0.8"/><polyline points="377.4,369.1 379.1,367.5 380.8,367.4 382.5,366.3 384.2,365.0 386.0,363.7 387.7,363.5 389.4,362.3 391.1,363.1 392.8,362.0 394.5,363.6 396.2,360.8 398.0,360.5 399.7,362.3 401.4,361.5 403.1,362.9 404.8,362.6 406.5,365.0 408.2,364.0 409.9,363.3 411.7,363.8 413.4,362.3 415.1,361.3 416.8,360.8 418.5,359.5 420.2,360.8 421.9,364.0 423.6,364.7 425.4,365.7 427.1,365.0 428.8,364.1 430.5,363.8 432.2,362.3 433.9,364.1 435.6,363.8 437.3,366.4 439.1,368.1 440.8,368.4 442.1,369.5 443.5,369.5 444.9,370.8 446.4,368.1 447.9,368.9 449.3,366.4 451.1,365.8 452.8,366.1 454.5,365.0 456.2,366.5 457.9,366.5 459.6,366.4 461.3,367.3 463.0,365.6 464.8,365.7 466.5,366.3 468.2,365.1 469.9,365.0 471.6,366.6 473.3,367.0 475.0,366.4 476.7,366.0 478.5,366.7 480.2,368.4 481.9,367.9 483.6,370.2 485.3,369.1 487.0,368.4 488.7,368.3 490.4,367.4 492.2,366.5 493.9,366.7 495.6,366.4 497.3,365.6 499.0,365.0 500.7,365.0 502.4,364.9 504.2,364.5 505.9,364.0 507.2,362.2 508.6,358.1 510.3,369.1 512.0,358.1 513.7,368.4 515.1,368.0 516.5,367.8 517.9,365.7 519.6,366.4 521.3,366.6 523.0,365.0 524.7,366.3 526.4,365.7 528.1,367.4 529.8,368.7 531.6,369.4 533.3,368.4 535.0,368.8 536.7,367.2 538.4,366.4 540.1,365.8 541.8,363.3 543.5,362.9 545.3,364.5 547.0,364.5 548.7,365.0 550.4,364.9 552.1,364.7 553.8,366.4 555.5,368.0 557.3,369.1 559.0,368.4 560.7,367.5 562.4,369.7 564.1,369.1 565.8,367.7 567.5,365.9 569.2,365.7 571.0,365.3 572.7,366.9 574.4,366.4 576.1,367.7 577.8,365.8 579.5,367.4 581.2,367.4 582.9,365.5 584.7,366.4 586.4,366.7 588.1,365.4 589.8,365.7 591.5,367.3 593.2,368.1 594.9,367.4 596.7,366.6 598.4,367.2 600.1,365.0 601.8,363.6 603.5,362.0 605.2,362.3 606.9,363.1 608.6,362.1 610.4,364.0 612.1,363.5 613.8,364.4 615.5,365.0 617.2,367.0 618.9,368.4 620.6,367.7 622.3,367.6 624.1,369.1 625.8,370.3 627.5,369.1 629.2,369.8 630.9,370.8 632.6,370.4 634.3,369.1 636.0,369.3 637.8,370.1 639.5,370.8 641.2,370.5 642.9,370.5 644.6,369.8 646.3,369.8 648.0,369.5 649.8,369.1 651.5,369.2 653.2,369.9 654.9,368.4 656.6,368.2 658.3,367.8 660.0,367.7 661.7,367.9 663.5,366.1 665.2,366.4" fill="none" stroke="#5470c6" stroke-width="1.05" stroke-linejoin="round" stroke-linecap="round" /><polyline points="377.4,362.3 379.1,364.7 380.8,366.4 382.5,369.3 384.2,370.8 386.0,369.9 387.7,368.6 389.4,365.7 391.1,364.6 392.8,363.4 394.5,360.5 396.2,359.8 398.0,361.6 399.7,362.3 401.4,361.4 403.1,358.1 404.8,358.3 406.5,358.8 408.2,357.5 409.9,358.8 411.7,362.3 413.1,363.3 414.6,363.8 416.1,365.7 417.5,366.7 418.8,367.7 420.2,368.4 421.9,366.7 423.6,367.0 425.4,367.4 427.1,365.1 428.8,364.0 430.5,363.6 432.2,361.7 433.9,359.5 435.6,357.4 437.3,357.1 439.1,358.8 440.8,358.8 442.5,358.7 444.2,360.5 445.9,363.4 447.6,365.7 449.3,364.4 451.1,363.9 452.8,365.0 454.5,365.1 456.2,362.4 457.9,362.3 459.6,360.6 461.3,360.5 462.7,360.4 464.1,358.6 465.4,356.1 466.8,355.9 468.2,356.8 469.6,360.4 470.9,361.7 472.3,364.0 473.7,365.0 475.0,365.0 476.7,363.6 478.5,365.1 480.2,363.3 481.9,364.4 483.6,365.7 485.3,365.0 487.0,365.2 488.7,362.6 490.4,362.3 492.2,358.8 493.9,356.1 495.6,356.2 497.3,358.1 498.8,358.0 500.3,358.6 501.8,360.5 503.1,359.7 504.5,360.1 505.9,359.5 507.6,362.6 509.3,368.4 511.0,369.1 512.7,368.4 514.4,369.1 516.1,366.9 517.9,366.6 519.6,364.0 521.3,365.1 523.0,365.8 524.7,367.4 526.4,367.9 528.1,369.1 529.8,369.1 531.6,367.0 533.3,368.6 535.0,366.4 536.7,365.7 538.4,368.4 540.1,368.4 541.8,368.5 543.5,365.3 545.3,365.7 547.0,364.8 548.7,361.9 550.4,360.5 552.1,355.6 553.8,350.3 556.2,349.2 557.6,351.8 559.0,357.1 560.7,359.3 562.4,364.0 564.1,362.2 565.8,362.3 567.5,366.1 569.2,367.4 571.0,368.3 572.7,370.8 574.4,369.2 576.1,367.4 577.8,364.0 579.5,364.0 581.2,361.6 582.9,361.4 584.7,361.6 586.4,362.3 588.1,364.9 589.8,367.4 591.5,367.4 593.2,364.7 594.9,365.0 596.7,366.1 598.4,366.7 600.1,366.4 601.8,365.3 603.5,362.3 605.2,361.9 606.9,365.3 608.6,365.0 610.4,363.5 612.1,363.9 613.8,364.0 615.5,365.8 617.2,368.1 618.9,368.4 620.6,368.2 622.3,370.0 624.1,369.1 625.8,369.0 627.5,368.1 629.2,368.4 630.9,368.4 632.6,368.5 634.3,369.8 636.0,368.4 637.8,368.4 639.5,369.1 641.2,369.4 642.9,370.0 644.6,368.4 646.3,365.7 648.0,363.5 649.8,362.9 651.5,365.3 653.2,365.0 654.9,365.9 656.6,366.3 658.3,367.4 660.0,365.5 661.7,365.4 663.5,364.0 665.2,365.4 666.9,365.0" fill="none" stroke="#91cc75" stroke-width="1.05" stroke-linejoin="round" stroke-linecap="round" /><path d="M377.4 365.2 H668.6" stroke="#e33" stroke-width="0.8" stroke-dasharray="2 1.4"/><text x="671.60" y="368" font-size="7.2" fill="#333" text-anchor="start" font-weight="normal" >1.42</text><text x="377.40" y="389" font-size="7.3" fill="#6e7079" text-anchor="middle" font-weight="normal" >8.75</text><path d="M377.4 369.1 v1.6" stroke="#8a8f9c" stroke-width="0.5"/><text x="405.10" y="389" font-size="7.3" fill="#6e7079" text-anchor="middle" font-weight="normal" >36.10</text><path d="M405.1 369.1 v1.6" stroke="#8a8f9c" stroke-width="0.5"/><text x="432.90" y="389" font-size="7.3" fill="#6e7079" text-anchor="middle" font-weight="normal" >64.85</text><path d="M432.9 369.1 v1.6" stroke="#8a8f9c" stroke-width="0.5"/><text x="460.60" y="389" font-size="7.3" fill="#6e7079" text-anchor="middle" font-weight="normal" >92.95</text><path d="M460.6 369.1 v1.6" stroke="#8a8f9c" stroke-width="0.5"/><text x="488.40" y="389" font-size="7.3" fill="#6e7079" text-anchor="middle" font-weight="normal" >121.95</text><path d="M488.4 369.1 v1.6" stroke="#8a8f9c" stroke-width="0.5"/><text x="516.50" y="389" font-size="7.3" fill="#6e7079" text-anchor="middle" font-weight="normal" >150.80</text><path d="M516.5 369.1 v1.6" stroke="#8a8f9c" stroke-width="0.5"/><text x="544.60" y="389" font-size="7.3" fill="#6e7079" text-anchor="middle" font-weight="normal" >180.71</text><path d="M544.6 369.1 v1.6" stroke="#8a8f9c" stroke-width="0.5"/><text x="572.70" y="389" font-size="7.3" fill="#6e7079" text-anchor="middle" font-weight="normal" >211.21</text><path d="M572.7 369.1 v1.6" stroke="#8a8f9c" stroke-width="0.5"/><text x="600.80" y="389" font-size="7.3" fill="#6e7079" text-anchor="middle" font-weight="normal" >241.46</text><path d="M600.8 369.1 v1.6" stroke="#8a8f9c" stroke-width="0.5"/><text x="628.90" y="389" font-size="7.3" fill="#6e7079" text-anchor="middle" font-weight="normal" >272.26</text><path d="M628.9 369.1 v1.6" stroke="#8a8f9c" stroke-width="0.5"/><text x="656.60" y="389" font-size="7.3" fill="#6e7079" text-anchor="middle" font-weight="normal" >303.05</text><path d="M656.6 369.1 v1.6" stroke="#8a8f9c" stroke-width="0.5"/><path d="M466.5 339 H478.6" stroke="#5470c6" stroke-width="0.9"/><circle cx="472.5" cy="339" r="2.6" fill="#5470c6"/><text x="482.30" y="342" font-size="6.7" fill="#333" text-anchor="start" font-weight="normal" >对称平直度</text><path d="M523 339 H535.6" stroke="#91cc75" stroke-width="0.9"/><circle cx="529.3" cy="339" r="2.6" fill="#91cc75"/><text x="539.20" y="342" font-size="6.7" fill="#333" text-anchor="start" font-weight="normal" >非对称平直度</text><text x="343.6" y="403.60" font-size="10.9" font-weight="bold" fill="#333" letter-spacing="-0.25">楔形(μm)</text><path d="M379.1 408.8 H668.6" stroke="#e6eaf5" stroke-width="0.6"/><path d="M379.1 412.7 H668.6" stroke="#e6eaf5" stroke-width="0.6"/><path d="M379.1 420.7 H668.6" stroke="#e6eaf5" stroke-width="0.6"/><path d="M379.1 424.6 H668.6" stroke="#e6eaf5" stroke-width="0.6"/><path d="M379.1 428.6 H668.6" stroke="#e6eaf5" stroke-width="0.6"/><path d="M379.1 432.6 H668.6" stroke="#e6eaf5" stroke-width="0.6"/><path d="M379.1 436.6 H668.6" stroke="#e6eaf5" stroke-width="0.6"/><text x="373.00" y="415" font-size="6.6" fill="#6e7079" text-anchor="end" font-weight="normal" >5</text><text x="373.00" y="419" font-size="6.6" fill="#6e7079" text-anchor="end" font-weight="normal" >0</text><text x="373.00" y="423" font-size="6.6" fill="#6e7079" text-anchor="end" font-weight="normal" >-5</text><text x="373.00" y="427" font-size="6.6" fill="#6e7079" text-anchor="end" font-weight="normal" >-10</text><text x="373.00" y="431" font-size="6.6" fill="#6e7079" text-anchor="end" font-weight="normal" >-15</text><text x="373.00" y="435" font-size="6.6" fill="#6e7079" text-anchor="end" font-weight="normal" >-20</text><text x="373.00" y="439" font-size="6.6" fill="#6e7079" text-anchor="end" font-weight="normal" >-25</text><path d="M379.1 416.7 H668.6" stroke="#80858f" stroke-width="0.7"/><rect x="379.1" y="432.2" width="289.5" height="7.3" fill="#d9e0f3" fill-opacity="0.8"/><rect x="379.1" y="439.5" width="289.5" height="4.8" fill="#d4e0fb" fill-opacity="0.9"/><polygon points="379.1,444.3 379.1,442.0 391.2,440.6 403.2,441.8 415.3,442.2 427.4,440.5 439.4,441.7 451.5,440.6 463.5,440.1 475.6,440.6 487.7,441.7 499.7,440.1 511.8,441.5 523.9,440.6 535.9,440.2 548.0,440.8 560.0,440.7 572.1,440.9 584.2,442.0 596.2,442.2 608.3,440.3 620.4,442.3 632.4,441.3 644.5,442.3 656.5,441.9 668.6,441.1 668.6,444.3" fill="#bccff8" fill-opacity="0.55"/><rect x="378.0" y="436.3" width="2.2" height="7.5" rx="1.1" fill="#fff" stroke="#a9bce8" stroke-width="0.5"/><rect x="667.5" y="436.3" width="2.2" height="7.5" rx="1.1" fill="#fff" stroke="#a9bce8" stroke-width="0.5"/><rect x="521.9" y="433.5" width="4" height="1.1" fill="#fff" fill-opacity="0.8"/><polyline points="379.8,411.2 385.3,423.2 391.1,423.6 396.2,422.2 402.1,433.5 407.5,416.7 412.7,414.0 418.5,420.8 423.6,412.6 429.1,418.4 435.0,422.5 440.8,427.0 445.9,430.4 451.4,430.1 456.9,426.0 462.4,422.9 467.5,430.8 473.3,427.7 478.5,421.5 484.3,422.2 489.8,418.8 495.2,418.8 500.7,423.6 506.2,419.5 511.7,424.6 517.2,424.3 523.0,421.9 528.1,422.9 534.0,430.8 539.4,428.4 544.6,427.7 550.1,425.6 555.9,420.1 561.4,416.0 566.8,422.5 572.3,416.0 577.8,430.1 583.3,430.1 588.8,419.1 594.3,419.5 599.4,421.5 604.9,429.4 610.4,434.2 615.8,420.8 621.3,421.2 626.8,419.1 632.3,416.7 637.8,423.6 643.2,422.2 648.7,422.2 654.2,426.0 659.7,431.1 665.2,440.4" fill="none" stroke="#5470c6" stroke-width="1.15" stroke-linejoin="round" stroke-linecap="round" /><path d="M379.1 441.2 H668.6" stroke="#ee4444" stroke-width="0.9" stroke-dasharray="1.6 1.3"/><text x="671.80" y="444" font-size="7.2" fill="#333" text-anchor="start" font-weight="normal" >-30</text><text x="379.10" y="452" font-size="7.3" fill="#6e7079" text-anchor="middle" font-weight="normal" >10.36</text><path d="M379.1 416.7 v1.6" stroke="#8a8f9c" stroke-width="0.5"/><text x="412.00" y="452" font-size="7.3" fill="#6e7079" text-anchor="middle" font-weight="normal" >42.35</text><path d="M412.0 416.7 v1.6" stroke="#8a8f9c" stroke-width="0.5"/><text x="445.20" y="452" font-size="7.3" fill="#6e7079" text-anchor="middle" font-weight="normal" >74.78</text><path d="M445.2 416.7 v1.6" stroke="#8a8f9c" stroke-width="0.5"/><text x="478.50" y="452" font-size="7.3" fill="#6e7079" text-anchor="middle" font-weight="normal" >107.76</text><path d="M478.5 416.7 v1.6" stroke="#8a8f9c" stroke-width="0.5"/><text x="511.30" y="452" font-size="7.3" fill="#6e7079" text-anchor="middle" font-weight="normal" >141.28</text><path d="M511.3 416.7 v1.6" stroke="#8a8f9c" stroke-width="0.5"/><text x="543.90" y="452" font-size="7.3" fill="#6e7079" text-anchor="middle" font-weight="normal" >175.38</text><path d="M543.9 416.7 v1.6" stroke="#8a8f9c" stroke-width="0.5"/><text x="577.10" y="452" font-size="7.3" fill="#6e7079" text-anchor="middle" font-weight="normal" >210.91</text><path d="M577.1 416.7 v1.6" stroke="#8a8f9c" stroke-width="0.5"/><text x="610.40" y="452" font-size="7.3" fill="#6e7079" text-anchor="middle" font-weight="normal" >246.85</text><path d="M610.4 416.7 v1.6" stroke="#8a8f9c" stroke-width="0.5"/><text x="643.20" y="452" font-size="7.3" fill="#6e7079" text-anchor="middle" font-weight="normal" >282.82</text><path d="M643.2 416.7 v1.6" stroke="#8a8f9c" stroke-width="0.5"/><text x="343.6" y="466.15" font-size="10.9" font-weight="bold" fill="#333" letter-spacing="-0.25">中心线(mm)</text><path d="M379.1 470.8 H668.6" stroke="#e6eaf5" stroke-width="0.6"/><path d="M379.1 481.8 H668.6" stroke="#e6eaf5" stroke-width="0.6"/><path d="M379.1 487.3 H668.6" stroke="#e6eaf5" stroke-width="0.6"/><path d="M379.1 492.7 H668.6" stroke="#e6eaf5" stroke-width="0.6"/><path d="M379.1 498.2 H668.6" stroke="#e6eaf5" stroke-width="0.6"/><text x="373.00" y="479" font-size="7.3" fill="#6e7079" text-anchor="end" font-weight="normal" >0</text><text x="373.00" y="484" font-size="7.3" fill="#6e7079" text-anchor="end" font-weight="normal" >-3</text><text x="373.00" y="490" font-size="7.3" fill="#6e7079" text-anchor="end" font-weight="normal" >-6</text><text x="373.00" y="495" font-size="7.3" fill="#6e7079" text-anchor="end" font-weight="normal" >-9</text><text x="373.00" y="501" font-size="7.3" fill="#6e7079" text-anchor="end" font-weight="normal" >-12</text><path d="M379.1 476.3 H668.6" stroke="#a5a9b3" stroke-width="0.7"/><rect x="379.1" y="495.8" width="289.5" height="6.7" fill="#d9e0f3" fill-opacity="0.8"/><rect x="379.1" y="502.5" width="289.5" height="4.4" fill="#d4e0fb" fill-opacity="0.9"/><polygon points="379.1,506.9 379.1,504.4 391.2,504.9 403.2,502.7 415.3,505.0 427.4,504.7 439.4,502.8 451.5,504.7 463.5,504.6 475.6,503.1 487.7,505.1 499.7,503.6 511.8,503.8 523.9,504.3 535.9,504.4 548.0,504.5 560.0,503.4 572.1,503.9 584.2,503.0 596.2,503.4 608.3,503.9 620.4,502.9 632.4,503.5 644.5,504.7 656.5,503.1 668.6,503.7 668.6,506.9" fill="#bccff8" fill-opacity="0.55"/><rect x="378.0" y="499.6" width="2.2" height="6.9" rx="1.1" fill="#fff" stroke="#a9bce8" stroke-width="0.5"/><rect x="667.5" y="499.6" width="2.2" height="6.9" rx="1.1" fill="#fff" stroke="#a9bce8" stroke-width="0.5"/><rect x="521.9" y="497.1" width="4" height="1.1" fill="#fff" fill-opacity="0.8"/><path d="M379.1 484.9 H668.6" stroke="#6fc46f" stroke-width="1" stroke-dasharray="1.5 1.4"/><text x="671.80" y="488" font-size="7.2" fill="#333" text-anchor="start" font-weight="normal" >-5.09</text><polyline points="379.8,472.9 385.3,472.9 391.1,474.9 396.2,477.3 402.1,478.4 407.5,478.0 412.7,476.3 418.5,477.7 423.6,477.3 429.1,478.4 435.0,477.7 440.8,478.0 445.9,477.7 451.4,477.7 456.9,479.4 462.4,479.4 467.5,479.0 473.3,478.7 478.5,480.1 484.3,481.1 489.8,480.4 495.2,481.8 500.7,482.8 506.2,484.5 511.7,484.2 517.2,482.5 523.0,483.8 528.1,484.2 534.0,483.8 539.4,484.2 544.6,484.5 550.1,485.9 555.9,485.5 561.4,485.2 566.8,485.2 572.3,485.5 577.8,486.2 583.3,487.6 588.8,489.3 594.3,491.7 599.4,494.1 604.9,497.9 610.4,500.6 615.8,502.7 621.3,502.3 626.8,501.0 632.3,498.9 637.8,496.9 643.2,494.8 648.7,495.5 654.2,494.1 659.7,489.0 665.2,476.3" fill="none" stroke="#5470c6" stroke-width="1.15" stroke-linejoin="round" stroke-linecap="round" /><text x="379.10" y="514" font-size="7.3" fill="#6e7079" text-anchor="middle" font-weight="normal" >10.36</text><path d="M379.1 476.3 v1.6" stroke="#8a8f9c" stroke-width="0.5"/><text x="412.00" y="514" font-size="7.3" fill="#6e7079" text-anchor="middle" font-weight="normal" >42.35</text><path d="M412.0 476.3 v1.6" stroke="#8a8f9c" stroke-width="0.5"/><text x="445.20" y="514" font-size="7.3" fill="#6e7079" text-anchor="middle" font-weight="normal" >74.78</text><path d="M445.2 476.3 v1.6" stroke="#8a8f9c" stroke-width="0.5"/><text x="478.50" y="514" font-size="7.3" fill="#6e7079" text-anchor="middle" font-weight="normal" >107.76</text><path d="M478.5 476.3 v1.6" stroke="#8a8f9c" stroke-width="0.5"/><text x="511.30" y="514" font-size="7.3" fill="#6e7079" text-anchor="middle" font-weight="normal" >141.28</text><path d="M511.3 476.3 v1.6" stroke="#8a8f9c" stroke-width="0.5"/><text x="543.90" y="514" font-size="7.3" fill="#6e7079" text-anchor="middle" font-weight="normal" >175.38</text><path d="M543.9 476.3 v1.6" stroke="#8a8f9c" stroke-width="0.5"/><text x="577.10" y="514" font-size="7.3" fill="#6e7079" text-anchor="middle" font-weight="normal" >210.91</text><path d="M577.1 476.3 v1.6" stroke="#8a8f9c" stroke-width="0.5"/><text x="610.40" y="514" font-size="7.3" fill="#6e7079" text-anchor="middle" font-weight="normal" >246.85</text><path d="M610.4 476.3 v1.6" stroke="#8a8f9c" stroke-width="0.5"/><text x="643.20" y="514" font-size="7.3" fill="#6e7079" text-anchor="middle" font-weight="normal" >282.82</text><path d="M643.2 476.3 v1.6" stroke="#8a8f9c" stroke-width="0.5"/><text x="343.6" y="528.70" font-size="10.9" font-weight="bold" fill="#333" letter-spacing="-0.25">终轧温度(℃)</text><path d="M379.1 532.8 H668.6" stroke="#e6eaf5" stroke-width="0.6"/><path d="M379.1 538.3 H668.6" stroke="#e6eaf5" stroke-width="0.6"/><path d="M379.1 543.8 H668.6" stroke="#e6eaf5" stroke-width="0.6"/><path d="M379.1 549.3 H668.6" stroke="#e6eaf5" stroke-width="0.6"/><path d="M379.1 554.7 H668.6" stroke="#e6eaf5" stroke-width="0.6"/><path d="M379.1 560.2 H668.6" stroke="#e6eaf5" stroke-width="0.6"/><text x="373.00" y="541" font-size="7.3" fill="#6e7079" text-anchor="end" font-weight="normal" >895</text><text x="373.00" y="546" font-size="7.3" fill="#6e7079" text-anchor="end" font-weight="normal" >890</text><text x="373.00" y="552" font-size="7.3" fill="#6e7079" text-anchor="end" font-weight="normal" >885</text><text x="373.00" y="557" font-size="7.3" fill="#6e7079" text-anchor="end" font-weight="normal" >880</text><text x="373.00" y="563" font-size="7.3" fill="#6e7079" text-anchor="end" font-weight="normal" >875</text><rect x="379.1" y="557.8" width="289.5" height="6.7" fill="#d9e0f3" fill-opacity="0.8"/><rect x="379.1" y="564.5" width="289.5" height="4.4" fill="#d4e0fb" fill-opacity="0.9"/><polygon points="379.1,568.9 379.1,565.3 391.2,566.1 403.2,567.1 415.3,566.3 427.4,565.9 439.4,565.4 451.5,565.0 463.5,567.1 475.6,566.5 487.7,565.3 499.7,566.1 511.8,566.4 523.9,566.9 535.9,565.4 548.0,565.4 560.0,565.1 572.1,566.1 584.2,566.9 596.2,566.5 608.3,565.0 620.4,565.6 632.4,564.9 644.5,565.1 656.5,565.9 668.6,565.1 668.6,568.9" fill="#bccff8" fill-opacity="0.55"/><rect x="378.0" y="561.6" width="2.2" height="6.9" rx="1.1" fill="#fff" stroke="#a9bce8" stroke-width="0.5"/><rect x="667.5" y="561.6" width="2.2" height="6.9" rx="1.1" fill="#fff" stroke="#a9bce8" stroke-width="0.5"/><rect x="521.9" y="559.1" width="4" height="1.1" fill="#fff" fill-opacity="0.8"/><path d="M379.1 566.4 H668.6" stroke="#8f9cc4" stroke-width="0.6"/><path d="M379.1 539 H668.6" stroke="#f06060" stroke-width="1" stroke-dasharray="1.5 1.3"/><text x="671.60" y="542" font-size="7.2" fill="#333" text-anchor="start" font-weight="normal" >895</text><path d="M379.1 555.4 H668.6" stroke="#3aa53a" stroke-width="0.8" stroke-dasharray="2 1.4"/><text x="671.30" y="558" font-size="7.2" fill="#333" text-anchor="start" font-weight="normal" >880</text><polyline points="379.8,532.8 385.3,545.1 391.1,551.7 396.2,551.0 402.1,546.9 407.5,551.3 412.7,550.3 418.5,555.4 423.6,555.8 429.1,555.1 435.0,556.5 440.8,553.7 445.9,555.8 451.4,559.2 456.9,564.7 462.4,557.1 467.5,549.9 473.3,562.3 478.5,549.6 484.3,556.5 489.8,560.2 495.2,553.7 500.7,552.7 506.2,550.3 511.7,549.3 517.2,554.7 523.0,553.7 528.1,553.4 534.0,549.9 539.4,544.8 544.6,553.7 550.1,551.0 555.9,550.6 561.4,547.9 566.8,545.5 572.3,549.6 577.8,546.9 583.3,552.0 588.8,555.4 594.3,556.5 599.4,547.5 604.9,549.3 610.4,555.8 615.8,556.8 621.3,554.1 626.8,552.0 632.3,558.9 637.8,558.2 643.2,560.2 648.7,555.1 654.2,556.5 659.7,552.0 665.2,555.1" fill="none" stroke="#5470c6" stroke-width="1.15" stroke-linejoin="round" stroke-linecap="round" /><text x="379.10" y="576" font-size="7.3" fill="#6e7079" text-anchor="middle" font-weight="normal" >10.36</text><path d="M379.1 566.4 v1.6" stroke="#8a8f9c" stroke-width="0.5"/><text x="412.00" y="576" font-size="7.3" fill="#6e7079" text-anchor="middle" font-weight="normal" >42.35</text><path d="M412.0 566.4 v1.6" stroke="#8a8f9c" stroke-width="0.5"/><text x="445.20" y="576" font-size="7.3" fill="#6e7079" text-anchor="middle" font-weight="normal" >74.78</text><path d="M445.2 566.4 v1.6" stroke="#8a8f9c" stroke-width="0.5"/><text x="478.50" y="576" font-size="7.3" fill="#6e7079" text-anchor="middle" font-weight="normal" >107.76</text><path d="M478.5 566.4 v1.6" stroke="#8a8f9c" stroke-width="0.5"/><text x="511.30" y="576" font-size="7.3" fill="#6e7079" text-anchor="middle" font-weight="normal" >141.28</text><path d="M511.3 566.4 v1.6" stroke="#8a8f9c" stroke-width="0.5"/><text x="543.90" y="576" font-size="7.3" fill="#6e7079" text-anchor="middle" font-weight="normal" >175.38</text><path d="M543.9 566.4 v1.6" stroke="#8a8f9c" stroke-width="0.5"/><text x="577.10" y="576" font-size="7.3" fill="#6e7079" text-anchor="middle" font-weight="normal" >210.91</text><path d="M577.1 566.4 v1.6" stroke="#8a8f9c" stroke-width="0.5"/><text x="610.40" y="576" font-size="7.3" fill="#6e7079" text-anchor="middle" font-weight="normal" >246.85</text><path d="M610.4 566.4 v1.6" stroke="#8a8f9c" stroke-width="0.5"/><text x="643.20" y="576" font-size="7.3" fill="#6e7079" text-anchor="middle" font-weight="normal" >282.82</text><path d="M643.2 566.4 v1.6" stroke="#8a8f9c" stroke-width="0.5"/></svg>
<div class="a" style="left:707.2px;top:138.6px;width:369px;height:437.4px;background:#fff;border-radius:1px"></div>
<div class="a" style="left:739.7px;top:252.00px;width:326.6px;height:8.66px;background:linear-gradient(90deg,#00d728 0.2px 1.5px,#00ff00 2.0px 2.5px,#00f00f 3.0px 4.2px,#00ff00 4.7px 5.6px,#00ff00 6.1px 6.6px,#00df20 7.1px 7.7px,#00ec13 8.2px 9.1px,#00f00f 9.6px 10.1px,#00ff00 10.6px 11.5px,#00fb04 12.0px 13.2px,#00ff00 13.7px 15.9px,#00ff00 16.4px 17.3px,#00fe01 17.8px 18.7px,#00f10e 19.2px 19.7px,#00e916 20.2px 21.8px,#00f807 22.3px 23.5px,#00ff00 24.0px 25.2px,#00b54a 25.7px 28.7px,#00dc23 29.2px 30.8px,#00a857 31.3px 32.5px,#00e41b 33.0px 33.9px,#00fb04 34.4px 35.9px,#00e31c 36.4px 37.0px,#00ff00 37.5px 38.7px,#00f00f 39.2px 40.7px,#00d728 41.2px 41.8px,#00ff00 42.3px 45.2px,#00eb14 45.7px 46.9px,#00ff00 47.4px 49.0px,#00ff00 49.5px 52.5px,#00ff00 53.0px 54.2px,#00ff00 54.7px 55.2px,#00ff00 55.7px 58.7px,#00ff00 59.2px 60.7px,#00ff00 61.2px 63.5px,#00dc23 64.0px 65.5px,#00d42b 66.0px 67.6px,#00d629 68.1px 69.7px,#00ff00 70.2px 71.1px,#00f609 71.6px 72.1px,#00ff00 72.6px 73.8px,#00fe01 74.3px 76.6px,#00e817 77.1px 77.9px,#00eb14 78.4px 80.7px,#00da25 81.2px 82.8px,#00e11e 83.3px 86.2px,#00fd02 86.7px 88.3px,#00bb44 88.8px 90.3px,#00ff00 90.8px 91.7px,#00ff00 92.2px 92.8px,#00d728 93.3px 93.8px,#00dc23 94.3px 94.8px,#00ec13 95.3px 96.2px,#00ff00 96.7px 99.0px,#00d32c 99.5px 101.0px,#00ff00 101.5px 103.1px,#00ff00 103.6px 106.5px,#008d72 107.0px 110.0px,#00ff00 110.5px 112.7px,#00e41b 113.2px 113.8px,#00dc23 114.3px 117.2px,#00f40b 117.7px 118.9px,#00e31c 119.4px 120.7px,#00ff00 121.2px 123.4px,#00e01f 123.9px 124.8px,#00e11e 125.3px 128.2px,#00c639 128.7px 130.3px,#00f708 130.8px 132.0px,#00d629 132.5px 134.8px,#00d42b 135.3px 138.2px,#00ff00 138.7px 139.9px,#00ff00 140.4px 142.0px,#00d42b 142.5px 144.8px,#00f708 145.3px 145.8px,#00ff00 146.3px 149.3px,#00e21d 149.8px 151.3px,#00db24 151.8px 153.4px,#00ff00 153.9px 156.8px,#00fd02 157.3px 160.3px,#00e619 160.8px 161.3px,#00ff00 161.8px 162.7px,#00e01f 163.2px 164.8px,#00d42b 165.3px 167.5px,#00ff00 168.0px 169.2px,#00ff00 169.7px 170.3px,#00ff00 170.8px 173.7px,#00fa05 174.2px 175.1px,#00ff00 175.6px 176.5px,#00ff00 177.0px 179.2px,#00f20d 179.7px 180.9px,#00d926 181.4px 182.0px,#00ea15 182.5px 184.0px,#00fb04 184.5px 186.8px,#00ff00 187.3px 189.6px,#00ff00 190.1px 192.3px,#00ee11 192.8px 193.7px,#00ff00 194.2px 195.1px,#009e61 195.6px 198.5px,#00f20d 199.0px 201.3px,#00bc43 201.8px 202.3px,#00e31c 202.8px 203.3px,#00ff00 203.8px 206.1px,#00f906 206.6px 207.1px,#00ee11 207.6px 209.9px,#00f906 210.4px 211.6px,#00f50a 212.1px 213.7px,#00dc23 214.2px 216.4px,#00d827 216.9px 218.1px,#00de21 218.6px 219.5px,#00fd02 220.0px 220.6px,#009f60 221.1px 224.0px,#00da25 224.5px 225.0px,#00ec13 225.5px 228.5px,#00db24 229.0px 230.2px,#00e41b 230.7px 231.6px,#00ff00 232.1px 233.6px,#00ff00 234.1px 235.0px,#00fc03 235.5px 237.8px,#00ff00 238.3px 239.5px,#00ff00 240.0px 240.5px,#00ff00 241.0px 244.0px,#00ff00 244.5px 246.7px,#00d42b 247.2px 247.8px,#00ff00 248.3px 248.8px,#00ff00 249.3px 250.2px,#00dd22 250.7px 252.2px,#00fc03 252.7px 254.0px,#00f10e 254.5px 256.7px,#00ff00 257.2px 257.8px,#008e71 258.3px 259.1px,#00ff00 259.6px 262.6px,#00936c 263.1px 265.3px,#00ff00 265.8px 267.4px,#00d827 267.9px 269.5px,#00ff00 270.0px 270.8px,#00d52a 271.3px 271.9px,#00ff00 272.4px 273.3px,#00f30c 273.8px 275.0px,#00f50a 275.5px 277.0px,#00e11e 277.5px 278.8px,#00ff00 279.3px 279.8px,#00d52a 280.3px 282.6px,#00d827 283.1px 283.9px,#00fa05 284.4px 287.4px,#00d52a 287.9px 289.5px,#00d42b 290.0px 290.8px,#00e619 291.3px 294.3px,#00d42b 294.8px 296.0px,#00ff00 296.5px 297.0px,#009f60 297.5px 298.8px,#00dc23 299.3px 300.8px,#00ef10 301.3px 302.5px,#00f807 303.0px 303.6px,#00ff00 304.1px 305.6px,#00d52a 306.1px 307.4px,#00ff00 307.9px 308.7px,#00b04f 309.2px 310.1px,#00ff00 310.6px 312.2px,#00b748 312.7px 313.6px,#00ff00 314.1px 314.6px,#00ff00 315.1px 316.7px,#00ff00 317.2px 318.0px,#00eb14 318.5px 319.4px,#00fd02 319.9px 322.2px,#00ff00 322.7px 324.2px,#00ff00 324.7px 326.3px)"></div><div class="a" style="left:739.7px;top:260.61px;width:326.6px;height:8.66px;background:linear-gradient(90deg,#008a75 0.2px 3.2px,#00a758 3.7px 6.6px,#009f60 7.1px 9.4px,#00946b 9.9px 10.4px,#00aa55 10.9px 13.9px,#00718e 14.4px 15.3px,#00d926 15.8px 16.3px,#00b24d 16.8px 17.3px,#00ed12 17.8px 19.7px,#000bf4 20.2px 21.8px,#0505fa 22.3px 24.6px,#007a85 25.1px 27.3px,#0009f6 27.8px 29.0px,#0015ea 29.5px 30.4px,#0021de 30.9px 33.9px,#007986 34.4px 35.9px,#000ff0 36.4px 37.6px,#006699 38.1px 41.1px,#005ea1 41.6px 42.8px,#0026d9 43.3px 44.5px,#007b84 45.0px 46.6px,#00758a 47.1px 50.0px,#0058a7 50.5px 52.1px,#003dc2 52.6px 54.2px,#006699 54.7px 56.9px,#00827d 57.4px 57.6px,#006b94 58.1px 60.4px,#00c43b 60.9px 62.1px,#00f40b 62.6px 63.5px,#00af50 64.0px 66.9px,#00a35c 67.4px 68.0px,#0c0cf3 68.5px 69.7px,#0029d6 70.2px 71.1px,#006a95 71.6px 73.1px,#0010ef 73.6px 75.2px,#005aa5 75.7px 78.6px,#005da2 79.1px 80.4px,#0006f9 80.9px 82.1px,#1414eb 82.6px 83.1px,#0e0ef1 83.6px 84.1px,#00659a 84.6px 85.9px,#00639c 86.4px 88.6px,#0808f7 89.1px 90.3px,#0505fa 90.8px 91.4px,#004bb4 91.9px 92.8px,#0042bd 93.3px 95.5px,#0c0cf3 96.0px 97.6px,#0037c8 98.1px 101.0px,#0022dd 101.5px 103.8px,#1313ec 104.3px 104.8px,#0006f9 105.3px 107.6px,#002bd4 108.1px 109.3px,#005ca3 109.8px 112.0px,#0047b8 112.5px 113.8px,#1919e6 114.3px 117.2px,#004db2 117.7px 120.7px,#0037c8 121.2px 124.1px,#00639c 124.6px 125.5px,#0022dd 126.0px 127.5px,#1c1ce3 128.0px 129.3px,#0022dd 129.8px 130.0px,#00e51a 130.5px 131.3px,#00e31c 131.8px 132.7px,#00bb44 133.2px 133.4px,#00639c 133.9px 135.5px,#00649b 136.0px 136.8px,#004fb0 137.3px 137.9px,#008e71 138.4px 139.6px,#001ee1 140.1px 143.1px,#007689 143.6px 144.1px,#0037c8 144.6px 146.2px,#0014eb 146.7px 147.9px,#008e71 148.4px 148.9px,#0000ff 149.4px 151.0px,#00619e 151.5px 152.0px,#0013ec 152.5px 154.8px,#001fe0 155.3px 156.1px,#004bb4 156.6px 157.5px,#002dd2 158.0px 161.0px,#00956a 161.5px 163.0px,#0020df 163.5px 164.1px,#0037c8 164.6px 165.1px,#003ac5 165.6px 166.5px,#002ed1 167.0px 168.5px,#00718e 169.0px 169.6px,#00629d 170.1px 171.0px,#00a35c 171.5px 173.7px,#00748b 174.2px 175.8px,#0053ac 176.3px 177.2px,#009e61 177.7px 178.2px,#00bd42 178.7px 181.6px,#00649b 182.1px 183.7px,#00c53a 184.2px 184.7px,#00c936 185.2px 186.5px,#007e81 187.0px 188.2px,#00ce31 188.7px 190.2px,#006b94 190.7px 193.7px,#0057a8 194.2px 195.8px,#00c936 196.3px 197.1px,#00db24 197.6px 198.9px,#00cf30 199.4px 201.6px,#00619e 202.1px 202.3px,#005ba4 202.8px 203.3px,#a7a758 203.8px 204.7px,#a8a857 205.2px 206.8px,#baba45 207.3px 207.8px,#0056a9 208.3px 209.5px,#00936c 210.0px 210.9px,#0053ac 211.4px 213.7px,#0057a8 214.2px 217.1px,#00827d 217.6px 218.8px,#009b64 219.3px 219.9px,#00708f 220.4px 220.9px,#008f70 221.4px 223.0px,#00b847 223.5px 225.0px,#008d72 225.5px 226.4px,#0053ac 226.9px 227.8px,#00807f 228.3px 229.9px,#000ff0 230.4px 233.3px,#003ec1 233.8px 234.3px,#005da2 234.8px 235.4px,#0051ae 235.9px 238.1px,#007e81 238.6px 240.9px,#0054ab 241.4px 244.3px,#0016e9 244.8px 245.4px,#0c0cf3 245.9px 248.8px,#00748b 249.3px 250.2px,#0d0df2 250.7px 252.2px,#0707f8 252.7px 254.0px,#0909f6 254.5px 255.3px,#0056a9 255.8px 258.8px,#0028d7 259.3px 260.2px,#003ec1 260.7px 260.9px,#00f30c 261.4px 263.6px,#00d926 264.1px 265.0px,#00b54a 265.5px 266.0px,#006996 266.5px 267.4px,#00d629 267.9px 267.7px,#007f80 268.2px 268.8px,#009d62 269.3px 270.8px,#006798 271.3px 272.9px,#00718e 273.4px 276.4px,#0053ac 276.9px 277.4px,#006d92 277.9px 279.1px,#00936c 279.6px 282.6px,#00946b 283.1px 283.9px,#009b64 284.4px 286.7px,#0039c6 287.2px 288.4px,#00639c 288.9px 289.8px,#0039c6 290.3px 291.9px,#00708f 292.4px 293.9px,#006b94 294.4px 296.0px,#00d42b 296.5px 297.7px,#00629d 298.2px 300.5px,#00be41 301.0px 301.5px,#009b64 302.0px 303.6px,#006798 304.1px 307.0px,#008b74 307.5px 309.1px,#0041be 309.6px 310.1px,#0d0df2 310.6px 311.5px,#001ee1 312.0px 314.9px,#0009f6 315.4px 316.0px,#0057a8 316.5px 317.7px,#006a95 318.2px 319.1px,#006699 319.6px 321.1px,#001ce3 321.6px 323.2px,#00629d 323.7px 326.0px,#004cb3 326.5px 326.3px)"></div><div class="a" style="left:739.7px;top:269.22px;width:326.6px;height:8.66px;background:linear-gradient(90deg,#00ff00 0.2px 3.2px,#00e817 3.7px 4.9px,#00fc03 5.4px 7.0px,#00ef10 7.5px 8.7px,#00926d 9.2px 10.8px,#00ff00 11.3px 12.8px,#00e01f 13.3px 15.6px,#00c13e 16.1px 17.0px,#00ff00 17.5px 19.0px,#00e916 19.5px 20.8px,#00ff00 21.3px 22.5px,#00ff00 23.0px 23.5px,#00ff00 24.0px 24.9px,#00da25 25.4px 25.9px,#00f10e 26.4px 27.0px,#00df20 27.5px 28.0px,#00ef10 28.5px 29.4px,#00fd02 29.9px 32.1px,#00ff00 32.6px 34.2px,#00dd22 34.7px 36.3px,#00ff00 36.8px 38.0px,#00e41b 38.5px 41.4px,#00e21d 41.9px 44.2px,#00e31c 44.7px 47.6px,#00fa05 48.1px 50.4px,#00ee11 50.9px 52.1px,#00fc03 52.6px 53.5px,#00f708 54.0px 55.6px,#00f00f 56.1px 56.6px,#00fb04 57.1px 58.0px,#00e31c 58.5px 60.0px,#00ff00 60.5px 62.1px,#00ff00 62.6px 64.2px,#00a35c 64.7px 66.9px,#00de21 67.4px 68.0px,#00ab54 68.5px 71.4px,#00ee11 71.9px 73.5px,#00e11e 74.0px 74.5px,#00ec13 75.0px 77.9px,#00da25 78.4px 79.3px,#00ec13 79.8px 80.7px,#00ff00 81.2px 82.1px,#00ff00 82.6px 83.8px,#00df20 84.3px 85.5px,#00f708 86.0px 87.2px,#00f20d 87.7px 88.6px,#00be41 89.1px 90.0px,#00ef10 90.5px 91.4px,#00df20 91.9px 93.1px,#00ff00 93.6px 94.8px,#00e11e 95.3px 98.3px,#00f40b 98.8px 100.3px,#00ff00 100.8px 101.4px,#00e916 101.9px 103.4px,#00d926 103.9px 105.5px,#00bb44 106.0px 107.2px,#009768 107.7px 110.0px,#00ff00 110.5px 111.7px,#00dd22 112.2px 114.5px,#00c03f 115.0px 117.9px,#00f00f 118.4px 120.7px,#00df20 121.2px 122.4px,#00c639 122.9px 123.8px,#00ff00 124.3px 126.5px,#00f50a 127.0px 128.2px,#00f20d 128.7px 130.0px,#00e31c 130.5px 132.7px,#00dd22 133.2px 133.7px,#00c13e 134.2px 135.1px,#00e619 135.6px 138.6px,#009768 139.1px 140.3px,#00f20d 140.8px 142.0px,#00dd22 142.5px 144.8px,#00c639 145.3px 146.2px,#00fd02 146.7px 147.2px,#00de21 147.7px 148.2px,#00f40b 148.7px 151.0px,#00fd02 151.5px 152.4px,#00f708 152.9px 155.8px,#00ff00 156.3px 158.6px,#00f00f 159.1px 160.3px,#00e619 160.8px 163.7px,#00ff00 164.2px 164.8px,#00ff00 165.3px 166.8px,#00ff00 167.3px 168.2px,#00ef10 168.7px 169.6px,#00dd22 170.1px 173.0px,#00ea15 173.5px 174.7px,#00936c 175.2px 177.5px,#007887 178.0px 180.3px,#00c936 180.8px 181.6px,#00b946 182.1px 183.0px,#00be41 183.5px 186.5px,#00bf40 187.0px 188.2px,#00bb44 188.7px 188.5px,#00d827 189.0px 192.0px,#00f807 192.5px 194.7px,#008d72 195.2px 198.2px,#00f10e 198.7px 199.5px,#00fd02 200.0px 200.9px,#00d926 201.4px 203.7px,#00ff00 204.2px 204.7px,#00ff00 205.2px 206.1px,#00ff00 206.6px 207.1px,#00ec13 207.6px 210.6px,#00ff00 211.1px 214.0px,#00ff00 214.5px 215.7px,#00926d 216.2px 218.5px,#00d728 219.0px 221.9px,#008d72 222.4px 223.3px,#00ff00 223.8px 226.8px,#00ff00 227.3px 230.2px,#00e11e 230.7px 231.2px,#00ff00 231.7px 233.0px,#00ff00 233.5px 234.0px,#00e718 234.5px 235.0px,#00e31c 235.5px 236.7px,#00dd22 237.2px 238.8px,#00a857 239.3px 239.8px,#00ff00 240.3px 240.9px,#00f10e 241.4px 243.6px,#00f00f 244.1px 244.7px,#00ff00 245.2px 246.7px,#00ff00 247.2px 247.8px,#00e817 248.3px 249.8px,#00ef10 250.3px 251.9px,#00ff00 252.4px 254.7px,#00e01f 255.2px 256.4px,#00f609 256.9px 257.8px,#00e31c 258.3px 261.2px,#00f10e 261.7px 264.6px,#00ff00 265.1px 266.4px,#00da25 266.9px 268.4px,#00bb44 268.9px 270.5px,#00fa05 271.0px 272.2px,#00fe01 272.7px 273.6px,#00d728 274.1px 275.0px,#00e41b 275.5px 277.7px,#00ff00 278.2px 281.2px,#00ff00 281.7px 283.9px,#00f20d 284.4px 287.4px,#00fa05 287.9px 289.5px,#00ff00 290.0px 292.2px,#00db24 292.7px 295.7px,#00ff00 296.2px 297.0px,#00ff00 297.5px 299.8px,#00e619 300.3px 301.2px,#00ff00 301.7px 302.9px,#00ff00 303.4px 304.3px,#00ff00 304.8px 305.3px,#00fd02 305.8px 306.7px,#00e51a 307.2px 308.4px,#00ff00 308.9px 309.8px,#00ff00 310.3px 311.5px,#00ff00 312.0px 312.5px,#00e817 313.0px 314.6px,#00b847 315.1px 318.0px,#00fc03 318.5px 321.5px,#00e817 322.0px 323.6px,#00fb04 324.1px 326.3px)"></div><div class="a" style="left:739.7px;top:277.83px;width:326.6px;height:8.66px;background:linear-gradient(90deg,#00f708 0.2px 3.2px,#00f50a 3.7px 6.6px,#00ff00 7.1px 10.1px,#00ff00 10.6px 12.2px,#00ee11 12.7px 13.2px,#00f50a 13.7px 15.3px,#00f00f 15.8px 17.0px,#00f807 17.5px 18.0px,#00f708 18.5px 21.5px,#009c63 22.0px 24.9px,#00ff00 25.4px 25.9px,#00f50a 26.4px 27.3px,#00fc03 27.8px 28.7px,#00ff00 29.2px 31.4px,#00fd02 31.9px 33.5px,#00fc03 34.0px 35.2px,#00ff00 35.7px 37.3px,#00fd02 37.8px 39.4px,#00eb14 39.9px 42.8px,#00ff00 43.3px 43.8px,#00ff00 44.3px 44.9px,#00f807 45.4px 46.9px,#00ff00 47.4px 49.7px,#00ff00 50.2px 53.1px,#00ea15 53.6px 54.5px,#00ff00 55.0px 56.6px,#00f10e 57.1px 57.6px,#00f807 58.1px 59.7px,#00ff00 60.2px 61.1px,#00fe01 61.6px 63.1px,#00f708 63.6px 65.9px,#00ff00 66.4px 68.0px,#00f50a 68.5px 69.7px,#00f609 70.2px 71.7px,#00f20d 72.2px 75.2px,#00ff00 75.7px 78.6px,#009867 79.1px 80.7px,#00ed12 81.2px 82.1px,#00ff00 82.6px 83.1px,#00f20d 83.6px 84.8px,#00ce31 85.3px 86.6px,#00f708 87.1px 87.6px,#00fa05 88.1px 88.6px,#00f30c 89.1px 90.0px,#00ff00 90.5px 91.4px,#00ff00 91.9px 94.1px,#00eb14 94.6px 96.9px,#00f20d 97.4px 99.6px,#00fd02 100.1px 101.0px,#00f40b 101.5px 102.1px,#00fb04 102.6px 103.1px,#00f10e 103.6px 104.5px,#00ff00 105.0px 107.2px,#00f50a 107.7px 108.6px,#00fc03 109.1px 110.0px,#00ff00 110.5px 111.0px,#00fb04 111.5px 114.5px,#00ff00 115.0px 116.5px,#00ff00 117.0px 120.0px,#00cc33 120.5px 123.4px,#00ed12 123.9px 126.9px,#00fd02 127.4px 127.9px,#00ff00 128.4px 129.3px,#00ff00 129.8px 132.7px,#00ff00 133.2px 136.2px,#00fb04 136.7px 138.9px,#00ff00 139.4px 140.6px,#00ff00 141.1px 143.4px,#00f10e 143.9px 145.1px,#00eb14 145.6px 147.9px,#00eb14 148.4px 149.6px,#00ff00 150.1px 150.6px,#00ff00 151.1px 152.4px,#00a35c 152.9px 153.4px,#00bd42 153.9px 155.5px,#00ff00 156.0px 156.5px,#00f906 157.0px 158.6px,#00ed12 159.1px 161.3px,#00ff00 161.8px 164.1px,#00f906 164.6px 167.5px,#00ff00 168.0px 168.9px,#00f30c 169.4px 172.3px,#00ef10 172.8px 173.7px,#00ed12 174.2px 174.7px,#00ef10 175.2px 176.5px,#00fb04 177.0px 178.2px,#00ce31 178.7px 179.9px,#00f807 180.4px 182.7px,#00fd02 183.2px 183.7px,#00f30c 184.2px 184.7px,#00ed12 185.2px 188.2px,#00f609 188.7px 189.2px,#00eb14 189.7px 192.7px,#00b24d 193.2px 194.7px,#00f807 195.2px 196.1px,#00f609 196.6px 197.1px,#00ff00 197.6px 198.2px,#00ff00 198.7px 200.2px,#00ff00 200.7px 201.6px,#00ff00 202.1px 202.6px,#00ef10 203.1px 206.1px,#00ff00 206.6px 207.1px,#00ff00 207.6px 209.2px,#00cd32 209.7px 210.9px,#00ff00 211.4px 211.9px,#00ff00 212.4px 214.7px,#00f906 215.2px 218.1px,#00f906 218.6px 220.2px,#00f40b 220.7px 223.0px,#00ff00 223.5px 224.3px,#00ec13 224.8px 226.1px,#00fe01 226.6px 228.1px,#00ec13 228.6px 230.2px,#00ff00 230.7px 233.0px,#00eb14 233.5px 235.7px,#00ff00 236.2px 238.5px,#00f00f 239.0px 239.5px,#00fa05 240.0px 241.2px,#00ff00 241.7px 242.6px,#00f30c 243.1px 245.4px,#00bf40 245.9px 247.4px,#00ff00 247.9px 249.5px,#00ff00 250.0px 250.5px,#00ff00 251.0px 253.3px,#00f609 253.8px 256.0px,#00fc03 256.5px 257.8px,#00f20d 258.3px 259.8px,#00ed12 260.3px 263.3px,#00ff00 263.8px 266.0px,#00ff00 266.5px 269.5px,#00f20d 270.0px 270.5px,#00fc03 271.0px 271.2px,#00de21 271.7px 272.2px,#00a25d 272.7px 273.9px,#00c53a 274.4px 276.0px,#00e21d 276.5px 277.4px,#00d926 277.9px 280.8px,#00cf30 281.3px 282.6px,#00dd22 283.1px 283.9px,#00d12e 284.4px 286.0px,#00847b 286.5px 289.5px,#00d42b 290.0px 290.5px,#00eb14 291.0px 291.5px,#00c738 292.0px 294.3px,#009f60 294.8px 296.0px,#009d62 296.5px 297.0px,#009b64 297.5px 299.8px,#00d42b 300.3px 300.8px,#007689 301.3px 302.9px,#00c936 303.4px 306.3px,#00a45b 306.8px 307.4px,#00847b 307.9px 308.4px,#00b946 308.9px 309.8px,#00c53a 310.3px 312.5px,#00fd02 313.0px 313.9px,#00ba45 314.4px 317.4px,#00ff00 317.9px 319.1px,#009966 319.6px 320.1px,#00ec13 320.6px 323.6px,#00ff00 324.1px 325.6px,#00e31c 326.1px 326.3px)"></div><div class="a" style="left:739.7px;top:286.44px;width:326.6px;height:8.66px;background:linear-gradient(90deg,#00f40b 0.2px 1.5px,#00ff00 2.0px 4.9px,#00ff00 5.4px 6.6px,#00ff00 7.1px 8.7px,#00e31c 9.2px 10.1px,#00ee11 10.6px 12.2px,#00ff00 12.7px 13.2px,#00e21d 13.7px 14.2px,#00ff00 14.7px 17.7px,#00e21d 18.2px 18.7px,#00f20d 19.2px 19.7px,#00ff00 20.2px 21.5px,#00f20d 22.0px 22.5px,#00ed12 23.0px 23.9px,#00f609 24.4px 25.9px,#00ff00 26.4px 27.3px,#00ff00 27.8px 28.7px,#00ff00 29.2px 30.4px,#00ff00 30.9px 32.5px,#00ff00 33.0px 34.5px,#00f20d 35.0px 35.6px,#00f609 36.1px 37.0px,#00ff00 37.5px 38.0px,#00fd02 38.5px 39.7px,#00e21d 40.2px 41.1px,#00fe01 41.6px 42.8px,#00e01f 43.3px 46.3px,#00ff00 46.8px 49.7px,#00f906 50.2px 51.4px,#00ff00 51.9px 54.2px,#00e31c 54.7px 55.2px,#00ff00 55.7px 58.0px,#00eb14 58.5px 60.7px,#00f40b 61.2px 62.1px,#00ed12 62.6px 64.9px,#00ff00 65.4px 66.2px,#00f20d 66.7px 69.7px,#009f60 70.2px 71.4px,#007c83 71.9px 73.5px,#00807f 74.0px 76.2px,#007986 76.7px 79.7px,#00ae51 80.2px 80.7px,#007986 81.2px 82.1px,#009c63 82.6px 83.5px,#00ca35 84.0px 84.5px,#007a85 85.0px 87.2px,#006d92 87.7px 89.3px,#008b74 89.8px 91.0px,#00837c 91.5px 92.8px,#008679 93.3px 95.5px,#006f90 96.0px 96.5px,#00da25 97.0px 99.3px,#00da25 99.8px 100.7px,#009669 101.2px 102.1px,#00c03f 102.6px 103.8px,#00da25 104.3px 104.8px,#00c639 105.3px 108.3px,#00936c 108.8px 111.0px,#008c73 111.5px 112.4px,#008a75 112.9px 113.4px,#00a758 113.9px 114.5px,#00d02f 115.0px 116.2px,#009e61 116.7px 117.6px,#00cc33 118.1px 118.9px,#00af50 119.4px 119.6px,#0007f8 120.1px 120.7px,#0021de 121.2px 122.7px,#0031ce 123.2px 123.8px,#0035ca 124.3px 125.5px,#0018e7 126.0px 127.2px,#0012ed 127.7px 128.6px,#00847b 129.1px 130.6px,#00a35c 131.1px 134.1px,#009d62 134.6px 136.2px,#00ff00 136.7px 137.5px,#00bf40 138.0px 140.3px,#009f60 140.8px 142.4px,#00c33c 142.9px 144.4px,#00ff00 144.9px 145.5px,#00a45b 146.0px 147.2px,#00cd32 147.7px 150.6px,#00fc03 151.1px 153.4px,#00d827 153.9px 154.4px,#00fb04 154.9px 156.1px,#00fa05 156.6px 157.5px,#007f80 158.0px 160.3px,#00d827 160.8px 161.7px,#00a55a 162.2px 163.4px,#00827d 163.9px 165.1px,#00c53a 165.6px 167.2px,#00dd22 167.7px 170.6px,#00d52a 171.1px 172.3px,#00d32c 172.8px 175.1px,#00ed12 175.6px 176.1px,#00cc33 176.6px 178.9px,#00ff00 179.4px 180.9px,#00e41b 181.4px 182.3px,#00e817 182.8px 184.0px,#00817e 184.5px 185.8px,#00a956 186.3px 188.5px,#00cf30 189.0px 189.6px,#00b847 190.1px 191.3px,#009d62 191.8px 192.7px,#00da25 193.2px 194.0px,#00be41 194.5px 195.4px,#00af50 195.9px 197.1px,#00ab54 197.6px 200.6px,#00ea15 201.1px 202.6px,#00a55a 203.1px 205.7px,#005ea1 206.2px 206.8px,#0052ad 207.3px 209.5px,#004eb1 210.0px 212.3px,#0001fe 212.8px 214.0px,#0003fc 214.5px 216.1px,#0011ee 216.6px 217.8px,#0026d9 218.3px 219.9px,#003cc3 220.4px 223.3px,#0036c9 223.8px 225.4px,#003ec1 225.9px 228.1px,#0036c9 228.6px 230.9px,#003cc3 231.4px 232.6px,#0808f7 233.1px 234.0px,#0101fe 234.5px 236.1px,#0059a6 236.6px 237.1px,#003ec1 237.6px 239.2px,#0025da 239.7px 240.9px,#0006f9 241.4px 241.9px,#3636c9 242.4px 244.0px,#4343bc 244.5px 245.4px,#0022dd 245.9px 246.4px,#0043bc 246.9px 247.4px,#0031ce 247.9px 250.9px,#0101fe 251.4px 252.2px,#0017e8 252.7px 254.3px,#004bb4 254.8px 257.1px,#00609f 257.6px 258.1px,#0010ef 258.6px 259.1px,#0025da 259.6px 260.2px,#0011ee 260.7px 261.9px,#0028d7 262.4px 264.0px,#005ca3 264.5px 266.7px,#005fa0 267.2px 268.8px,#006897 269.3px 271.5px,#0027d8 272.0px 275.0px,#00748b 275.5px 277.0px,#0021de 277.5px 278.1px,#00be41 278.6px 279.8px,#009f60 280.3px 280.8px,#00946b 281.3px 282.9px,#00857a 283.4px 285.0px,#001ae5 285.5px 286.4px,#0044bb 286.9px 287.4px,#0048b7 287.9px 290.1px,#0b0bf4 290.6px 291.5px,#0016e9 292.0px 293.6px,#0012ed 294.1px 294.6px,#0033cc 295.1px 297.4px,#0037c8 297.9px 299.1px,#0049b6 299.6px 302.5px,#004db2 303.0px 305.3px,#002dd2 305.8px 308.1px,#0019e6 308.6px 310.1px,#004db2 310.6px 312.2px,#004fb0 312.7px 313.6px,#0034cb 314.1px 314.9px,#0035ca 315.4px 317.0px,#0f0ff0 317.5px 319.1px,#002cd3 319.6px 322.2px,#4242bd 322.7px 323.6px,#4545ba 324.1px 326.3px)"></div><div class="a" style="left:739.7px;top:295.05px;width:326.6px;height:8.66px;background:linear-gradient(90deg,#00ff00 0.2px 1.1px,#00ff00 1.6px 3.2px,#00fc03 3.7px 4.9px,#00f609 5.4px 6.6px,#00f00f 7.1px 8.7px,#00e817 9.2px 10.8px,#00fd02 11.3px 12.2px,#00a15e 12.7px 12.8px,#0059a6 13.3px 14.6px,#009b64 15.1px 15.9px,#00708f 16.4px 17.3px,#00956a 17.8px 18.7px,#007e81 19.2px 22.1px,#00906f 22.6px 24.9px,#00906f 25.4px 26.6px,#003dc2 27.1px 30.1px,#001ae5 30.6px 31.8px,#001ee1 32.3px 33.5px,#0037c8 34.0px 36.3px,#0014eb 36.8px 37.3px,#000ff0 37.8px 38.7px,#008877 39.2px 39.7px,#00d728 40.2px 41.4px,#00c33c 41.9px 44.9px,#00c23d 45.4px 46.6px,#00946b 47.1px 47.6px,#007c83 48.1px 50.4px,#00b34c 50.9px 53.8px,#00758a 54.3px 55.2px,#00a758 55.7px 56.9px,#006d92 57.4px 60.4px,#006699 60.9px 61.8px,#008679 62.3px 63.5px,#006b94 64.0px 65.2px,#00837c 65.7px 68.6px,#00ae51 69.1px 70.7px,#00b54a 71.2px 72.1px,#007f80 72.6px 74.8px,#00a758 75.3px 75.9px,#00c13e 76.4px 77.9px,#007e81 78.4px 80.0px,#008b74 80.5px 81.7px,#00f30c 82.2px 83.1px,#00dd22 83.6px 84.8px,#009669 85.3px 87.6px,#00956a 88.1px 91.0px,#00eb14 91.5px 93.8px,#00ff00 94.3px 97.2px,#00e619 97.7px 98.6px,#00fc03 99.1px 99.6px,#00f00f 100.1px 103.1px,#00ff00 103.6px 105.8px,#00fb04 106.3px 107.9px,#00e916 108.4px 110.7px,#00f00f 111.2px 114.1px,#00eb14 114.6px 117.6px,#00e21d 118.1px 120.3px,#009e61 120.8px 122.4px,#00ff00 122.9px 125.1px,#00ff00 125.6px 128.6px,#00ff00 129.1px 129.6px,#00ff00 130.1px 130.6px,#00ec13 131.1px 132.0px,#00ff00 132.5px 134.1px,#00ec13 134.6px 136.8px,#00ff00 137.3px 140.3px,#00ff00 140.8px 143.7px,#00ef10 144.2px 145.5px,#00e718 146.0px 147.5px,#00ff00 148.0px 151.0px,#00e31c 151.5px 153.0px,#00ff00 153.5px 154.8px,#00ff00 155.3px 155.8px,#00ff00 156.3px 157.2px,#00ff00 157.7px 158.2px,#00ff00 158.7px 161.0px,#00f20d 161.5px 162.0px,#00ee11 162.5px 164.1px,#00bb44 164.6px 167.5px,#00916e 168.0px 169.6px,#00d52a 170.1px 172.3px,#00b24d 172.8px 173.4px,#00b14e 173.9px 176.8px,#00ef10 177.3px 178.2px,#00a45b 178.7px 179.2px,#00d02f 179.7px 180.9px,#009d62 181.4px 183.7px,#00ec13 184.2px 185.1px,#00a857 185.6px 186.8px,#00b24d 187.3px 188.2px,#00d02f 188.7px 189.6px,#009e61 190.1px 191.3px,#00f30c 191.8px 192.3px,#00956a 192.8px 195.8px,#009669 196.3px 197.8px,#00ca35 198.3px 199.9px,#00b748 200.4px 201.6px,#00ae51 202.1px 203.0px,#00b34c 203.5px 205.1px,#009c63 205.6px 206.1px,#00609f 206.6px 207.5px,#00ca35 208.0px 209.2px,#00ff00 209.7px 212.6px,#008b74 213.1px 214.4px,#00d827 214.9px 215.7px,#00ff00 216.2px 217.5px,#00fe01 218.0px 220.9px,#00f10e 221.4px 221.9px,#00d32c 222.4px 224.0px,#00d32c 224.5px 225.4px,#00ff00 225.9px 228.1px,#00e718 228.6px 231.6px,#00ef10 232.1px 233.3px,#00f50a 233.8px 235.0px,#00da25 235.5px 236.7px,#00ff00 237.2px 240.2px,#00e31c 240.7px 243.6px,#00e817 244.1px 245.0px,#00d52a 245.5px 247.8px,#00ef10 248.3px 249.1px,#00ff00 249.6px 250.2px,#00f00f 250.7px 251.6px,#00e916 252.1px 253.3px,#00ff00 253.8px 256.7px,#00f609 257.2px 259.5px,#00ff00 260.0px 262.9px,#00ef10 263.4px 265.7px,#00ff00 266.2px 269.1px,#00f00f 269.6px 271.9px,#00eb14 272.4px 272.9px,#00ff00 273.4px 275.7px,#00f00f 276.2px 277.7px,#00ef10 278.2px 278.1px,#00c738 278.6px 279.5px,#00d42b 280.0px 281.5px,#00a659 282.0px 282.6px,#00ce31 283.1px 284.6px,#0050af 285.1px 286.7px,#00b44b 287.2px 288.1px,#00db24 288.6px 289.8px,#009c63 290.3px 291.5px,#009a65 292.0px 292.6px,#00b946 293.1px 294.3px,#006798 294.8px 296.0px,#00c837 296.5px 297.0px,#00e11e 297.5px 299.8px,#00d42b 300.3px 303.2px,#00bf40 303.7px 306.7px,#00c03f 307.2px 309.4px,#00e11e 309.9px 311.5px,#00dd22 312.0px 312.5px,#00e916 313.0px 316.0px,#00dd22 316.5px 318.7px,#00e41b 319.2px 322.2px,#00ff00 322.7px 324.2px,#00f40b 324.7px 325.6px,#00ba45 326.1px 326.3px)"></div><div class="a" style="left:739.7px;top:303.66px;width:326.6px;height:8.66px;background:linear-gradient(90deg,#00de21 0.2px 2.5px,#005ba4 3.0px 4.6px,#00a15e 5.1px 6.6px,#00926d 7.1px 9.4px,#00b748 9.9px 12.2px,#00857a 12.7px 14.9px,#007887 15.4px 16.6px,#00a25d 17.1px 18.7px,#00a857 19.2px 19.7px,#00cf30 20.2px 21.1px,#00cc33 21.6px 23.9px,#00c03f 24.4px 27.3px,#00946b 27.8px 28.3px,#008b74 28.8px 31.1px,#0058a7 31.6px 32.5px,#00639c 33.0px 35.2px,#00728d 35.7px 36.6px,#00c53a 37.1px 40.1px,#006699 40.6px 41.4px,#00c837 41.9px 44.9px,#007788 45.4px 46.6px,#00b34c 47.1px 47.3px,#001fe0 47.8px 50.7px,#000ff0 51.2px 52.5px,#0019e6 53.0px 54.5px,#0505fa 55.0px 55.9px,#0038c7 56.4px 56.2px,#00c53a 56.7px 58.3px,#008976 58.8px 60.0px,#00d12e 60.5px 61.4px,#00b24d 61.9px 64.9px,#00eb14 65.4px 66.6px,#00b04f 67.1px 67.6px,#00827d 68.1px 69.3px,#00c23d 69.8px 72.8px,#00936c 73.3px 73.8px,#00d42b 74.3px 75.2px,#009c63 75.7px 76.2px,#00a35c 76.7px 77.6px,#00c03f 78.1px 79.7px,#00906f 80.2px 81.4px,#00847b 81.9px 81.7px,#00ff00 82.2px 82.8px,#00fc03 83.3px 85.5px,#00ff00 86.0px 86.9px,#00e51a 87.4px 87.9px,#00fd02 88.4px 89.3px,#00e41b 89.8px 90.3px,#00d926 90.8px 93.8px,#009c63 94.3px 95.9px,#00ca35 96.4px 97.9px,#00ae51 98.4px 100.0px,#009c63 100.5px 103.4px,#00d629 103.9px 106.9px,#00ff00 107.4px 107.9px,#00fb04 108.4px 108.9px,#00ed12 109.4px 110.7px,#00ff00 111.2px 113.4px,#00fd02 113.9px 116.2px,#00d827 116.7px 117.9px,#00db24 118.4px 118.9px,#00cb34 119.4px 121.7px,#00fa05 122.2px 123.4px,#00a55a 123.9px 125.1px,#00d827 125.6px 128.6px,#00ca35 129.1px 130.0px,#00ce31 130.5px 131.0px,#00ff00 131.5px 132.0px,#00da25 132.5px 134.8px,#00fa05 135.3px 137.5px,#00d32c 138.0px 138.9px,#00ee11 139.4px 140.3px,#00ff00 140.8px 143.7px,#00ff00 144.2px 145.8px,#00f30c 146.3px 147.9px,#00ff00 148.4px 148.9px,#00d827 149.4px 149.9px,#009f60 150.4px 150.6px,#0707f8 151.1px 152.7px,#000af5 153.2px 155.8px,#2c2cd3 156.3px 157.5px,#3636c9 158.0px 158.9px,#4949b6 159.4px 159.6px,#00b748 160.1px 161.7px,#009768 162.2px 163.0px,#005ca3 163.5px 164.8px,#00af50 165.3px 166.5px,#006699 167.0px 168.5px,#007e81 169.0px 170.3px,#00b748 170.8px 172.3px,#006996 172.8px 173.7px,#00728d 174.2px 174.7px,#009c63 175.2px 176.1px,#007d82 176.6px 177.8px,#005aa5 178.3px 179.2px,#00bf40 179.7px 180.9px,#00758a 181.4px 182.0px,#00c639 182.5px 184.0px,#007986 184.5px 187.5px,#008976 188.0px 188.5px,#007d82 189.0px 192.0px,#008877 192.5px 194.7px,#00c43b 195.2px 198.2px,#00c936 198.7px 199.9px,#005aa5 200.4px 202.0px,#00bb44 202.5px 203.0px,#00847b 203.5px 204.4px,#00906f 204.9px 205.4px,#00a659 205.9px 206.4px,#007887 206.9px 207.8px,#00cf30 208.3px 209.2px,#00827d 209.7px 210.2px,#00f609 210.7px 211.9px,#00d22d 212.4px 213.0px,#00f00f 213.5px 215.7px,#00cc33 216.2px 219.2px,#00dd22 219.7px 220.9px,#00eb14 221.4px 222.3px,#00c53a 222.8px 224.3px,#00ff00 224.8px 227.8px,#00cf30 228.3px 229.5px,#00c33c 230.0px 230.9px,#00c13e 231.4px 231.9px,#00ff00 232.4px 235.4px,#00cf30 235.9px 236.7px,#00a857 237.2px 240.2px,#009768 240.7px 241.2px,#00936c 241.7px 243.3px,#00b04f 243.8px 245.4px,#006c93 245.9px 248.8px,#009f60 249.3px 249.8px,#00837c 250.3px 252.6px,#008679 253.1px 253.6px,#006699 254.1px 255.0px,#006897 255.5px 256.7px,#00a45b 257.2px 257.4px,#003ac5 257.9px 260.2px,#0031ce 260.7px 262.9px,#0016e9 263.4px 264.3px,#003ec1 264.8px 265.0px,#00956a 265.5px 266.4px,#007f80 266.9px 269.8px,#00b14e 270.3px 271.9px,#00c936 272.4px 273.9px,#00b04f 274.4px 275.7px,#00857a 276.2px 278.1px,#00e31c 278.6px 280.1px,#00ca35 280.6px 281.9px,#00e51a 282.4px 283.9px,#00dc23 284.4px 285.3px,#00ff00 285.8px 288.8px,#00ff00 289.3px 292.2px,#00d926 292.7px 293.9px,#00ff00 294.4px 296.7px,#00e916 297.2px 297.7px,#00ff00 298.2px 300.5px,#00ff00 301.0px 301.9px,#00e51a 302.4px 304.6px,#00ff00 305.1px 306.0px,#00e718 306.5px 307.7px,#00df20 308.2px 308.7px,#00df20 309.2px 309.8px,#00f50a 310.3px 311.8px,#00fb04 312.3px 313.6px,#00ff00 314.1px 315.3px,#0024db 315.8px 318.7px,#0033cc 319.2px 320.1px,#0030cf 320.6px 322.2px,#000ef1 322.7px 322.9px,#00e41b 323.4px 323.9px,#00b649 324.4px 326.0px,#007f80 326.5px 326.3px)"></div><svg width="1080" height="608" viewBox="0 0 1080 608"><text x="713" y="149.4" font-size="10.8" font-weight="bold" fill="#333" letter-spacing="-0.2">轮廓厚度(mm)</text><text x="712.30" y="159" font-size="6.9" fill="#6e7079" text-anchor="start" font-weight="normal" >8,280</text><path d="M735.6 156.4 H1066.3" stroke="#e6eaf5" stroke-width="0.6"/><text x="712.30" y="167" font-size="6.9" fill="#6e7079" text-anchor="start" font-weight="normal" >8,260</text><path d="M735.6 164.1 H1066.3" stroke="#e6eaf5" stroke-width="0.6"/><text x="712.30" y="174" font-size="6.9" fill="#6e7079" text-anchor="start" font-weight="normal" >8,240</text><path d="M735.6 171.8 H1066.3" stroke="#e6eaf5" stroke-width="0.6"/><text x="712.30" y="182" font-size="6.9" fill="#6e7079" text-anchor="start" font-weight="normal" >8,220</text><path d="M735.6 179.5 H1066.3" stroke="#e6eaf5" stroke-width="0.6"/><text x="712.30" y="190" font-size="6.9" fill="#6e7079" text-anchor="start" font-weight="normal" >8,200</text><path d="M735.6 187.2 H1066.3" stroke="#e6eaf5" stroke-width="0.6"/><text x="712.30" y="197" font-size="6.9" fill="#6e7079" text-anchor="start" font-weight="normal" >8,180</text><path d="M735.6 194.9 H1066.3" stroke="#e6eaf5" stroke-width="0.6"/><text x="712.30" y="205" font-size="6.9" fill="#6e7079" text-anchor="start" font-weight="normal" >8,160</text><path d="M735.6 202.7 H1066.3" stroke="#e6eaf5" stroke-width="0.6"/><text x="712.30" y="213" font-size="6.9" fill="#6e7079" text-anchor="start" font-weight="normal" >8,140</text><path d="M735.6 210.4 H1066.3" stroke="#e6eaf5" stroke-width="0.6"/><rect x="735.6" y="201.8" width="330.7" height="6.7" fill="#d9e0f3" fill-opacity="0.8"/><rect x="735.6" y="208.5" width="330.7" height="4.4" fill="#d4e0fb" fill-opacity="0.9"/><polygon points="735.6,212.9 735.6,209.0 749.4,210.7 763.2,210.8 776.9,209.6 790.7,209.4 804.5,209.2 818.3,208.9 832.1,209.2 845.8,209.2 859.6,210.8 873.4,209.1 887.2,209.1 901.0,210.9 914.7,210.9 928.5,208.9 942.3,209.5 956.1,211.1 969.8,209.6 983.6,210.2 997.4,210.4 1011.2,210.3 1025.0,208.8 1038.7,210.4 1052.5,210.7 1066.3,209.8 1066.3,212.9" fill="#bccff8" fill-opacity="0.55"/><rect x="734.5" y="205.6" width="2.2" height="6.9" rx="1.1" fill="#fff" stroke="#a9bce8" stroke-width="0.5"/><rect x="1065.2" y="205.6" width="2.2" height="6.9" rx="1.1" fill="#fff" stroke="#a9bce8" stroke-width="0.5"/><rect x="899.0" y="203.1" width="4" height="1.1" fill="#fff" fill-opacity="0.8"/><path d="M735.6 210.4 H1066.3" stroke="#8f9cc4" stroke-width="0.6"/><polyline points="735.6,197.1 737.1,200.8 738.7,195.3 740.3,190.8 741.9,194.2 743.5,187.8 745.1,187.1 746.6,197.6 748.2,194.9 749.8,190.7 751.4,183.8 753.0,183.7 754.6,189.7 756.2,185.1 757.7,183.2 759.3,189.1 760.9,185.3 762.5,191.2 764.1,189.9 765.7,184.8 767.2,190.4 768.8,186.3 770.4,186.5 772.0,197.1 773.6,197.6 775.2,193.6 776.8,184.5 778.3,191.3 779.9,183.5 781.5,191.9 783.1,182.6 784.7,186.6 786.3,181.9 787.8,184.1 789.4,182.2 791.0,182.1 792.6,183.6 794.2,180.0 795.8,178.4 797.4,184.5 798.9,176.0 800.5,176.6 802.1,181.7 803.7,181.7 805.3,174.6 806.9,172.0 808.4,173.5 810.0,175.6 811.6,179.0 813.2,171.4 814.8,178.1 816.4,171.5 818.0,179.1 819.5,179.0 821.1,175.3 822.7,174.8 824.3,171.2 825.9,171.2 827.5,174.6 829.0,170.0 830.6,168.4 832.2,173.0 833.8,173.1 835.4,175.7 837.0,166.0 838.6,175.4 840.1,167.8 841.7,179.9 843.3,173.1 844.9,170.2 846.5,169.3 848.1,168.6 849.6,170.8 851.2,163.9 852.8,168.8 854.4,167.3 856.0,164.9 857.6,171.9 859.2,172.1 860.7,172.8 862.3,168.4 863.9,174.1 865.5,168.9 867.1,173.4 868.7,170.8 870.2,170.2 871.8,164.8 873.4,174.1 875.0,171.2 876.6,171.1 878.2,167.9 879.8,164.1 881.3,163.5 882.9,168.2 884.5,170.5 886.1,169.7 887.7,170.9 889.3,165.0 890.8,168.9 892.4,167.2 894.0,168.8 895.6,167.9 897.2,170.4 898.8,171.6 900.4,166.0 901.9,173.4 903.5,165.2 905.1,178.6 906.7,173.7 908.3,165.6 909.9,166.7 911.4,168.1 913.0,168.9 914.6,172.5 916.2,174.1 917.8,166.9 919.4,171.1 921.0,167.9 922.5,170.1 924.1,168.6 925.7,172.4 927.3,172.6 928.9,180.4 930.5,171.3 932.0,173.2 933.6,172.0 935.2,170.0 936.8,165.3 938.4,172.6 940.0,168.2 941.6,172.7 943.1,171.9 944.7,169.7 946.3,171.0 947.9,169.8 949.5,168.0 951.1,166.4 952.6,173.5 954.2,175.6 955.8,170.9 957.4,168.9 959.0,176.5 960.6,169.9 962.2,177.9 963.7,175.0 965.3,173.1 966.9,179.0 968.5,171.2 970.1,176.3 971.7,181.4 973.2,171.4 974.8,174.9 976.4,173.1 978.0,177.2 979.6,180.8 981.2,182.2 982.8,188.0 984.3,177.3 985.9,181.4 987.5,174.5 989.1,182.2 990.7,179.7 992.3,181.8 993.8,175.9 995.4,178.4 997.0,177.9 998.6,178.8 1000.2,173.1 1001.8,178.5 1003.3,181.9 1004.9,179.3 1006.5,175.4 1008.1,179.6 1009.7,185.4 1011.3,186.1 1012.9,186.2 1014.4,186.9 1016.0,179.1 1017.6,178.8 1019.2,186.4 1020.8,180.1 1022.4,180.5 1023.9,188.5 1025.5,186.8 1027.1,188.3 1028.7,189.4 1030.3,190.8 1031.9,184.4 1033.5,193.3 1035.0,191.0 1036.6,191.0 1038.2,187.6 1039.8,187.2 1041.4,191.7 1043.0,186.9 1044.5,194.2 1046.1,192.9 1047.7,185.8 1049.3,190.9 1050.9,185.6 1052.5,188.9 1054.1,186.0 1055.6,197.6 1057.2,191.1 1058.8,193.9 1060.4,193.0 1062.0,189.5 1063.6,194.8 1065.1,187.3" fill="none" stroke="#5470c6" stroke-width="1.15" stroke-linejoin="round" stroke-linecap="round" /><text x="737.30" y="221" font-size="7.2" fill="#6e7079" text-anchor="middle" font-weight="normal" >-755.95</text><path d="M737.3 210.4 v1.6" stroke="#8a8f9c" stroke-width="0.5"/><text x="768.99" y="221" font-size="7.2" fill="#6e7079" text-anchor="middle" font-weight="normal" >-611.95</text><path d="M769.0 210.4 v1.6" stroke="#8a8f9c" stroke-width="0.5"/><text x="800.68" y="221" font-size="7.2" fill="#6e7079" text-anchor="middle" font-weight="normal" >-467.95</text><path d="M800.7 210.4 v1.6" stroke="#8a8f9c" stroke-width="0.5"/><text x="832.37" y="221" font-size="7.2" fill="#6e7079" text-anchor="middle" font-weight="normal" >-323.95</text><path d="M832.4 210.4 v1.6" stroke="#8a8f9c" stroke-width="0.5"/><text x="864.06" y="221" font-size="7.2" fill="#6e7079" text-anchor="middle" font-weight="normal" >-179.95</text><path d="M864.1 210.4 v1.6" stroke="#8a8f9c" stroke-width="0.5"/><text x="895.75" y="221" font-size="7.2" fill="#6e7079" text-anchor="middle" font-weight="normal" >-35.95</text><path d="M895.8 210.4 v1.6" stroke="#8a8f9c" stroke-width="0.5"/><text x="927.44" y="221" font-size="7.2" fill="#6e7079" text-anchor="middle" font-weight="normal" >108.05</text><path d="M927.4 210.4 v1.6" stroke="#8a8f9c" stroke-width="0.5"/><text x="959.13" y="221" font-size="7.2" fill="#6e7079" text-anchor="middle" font-weight="normal" >252.05</text><path d="M959.1 210.4 v1.6" stroke="#8a8f9c" stroke-width="0.5"/><text x="990.82" y="221" font-size="7.2" fill="#6e7079" text-anchor="middle" font-weight="normal" >396.05</text><path d="M990.8 210.4 v1.6" stroke="#8a8f9c" stroke-width="0.5"/><text x="1022.51" y="221" font-size="7.2" fill="#6e7079" text-anchor="middle" font-weight="normal" >540.05</text><path d="M1022.5 210.4 v1.6" stroke="#8a8f9c" stroke-width="0.5"/><text x="1054.20" y="221" font-size="7.2" fill="#6e7079" text-anchor="middle" font-weight="normal" >684.05</text><path d="M1054.2 210.4 v1.6" stroke="#8a8f9c" stroke-width="0.5"/><text x="713" y="240.4" font-size="10.8" font-weight="bold" fill="#333" letter-spacing="-0.2">板形云图（IU）</text><defs><linearGradient id="vm" x1="0" x2="1" y1="0" y2="0"><stop offset="0" stop-color="#00ff00"/><stop offset="0.333" stop-color="#0000ff"/><stop offset="0.667" stop-color="#ffff00"/><stop offset="1" stop-color="#ff0000"/></linearGradient></defs><rect x="852" y="229.6" width="78.2" height="11" fill="url(#vm)"/><rect x="849.4" y="228.6" width="3" height="13" rx="1" fill="#22ee22"/><rect x="929" y="228.6" width="3" height="13" rx="1" fill="#f01818"/><text x="851.00" y="251" font-size="6.6" fill="#222" text-anchor="middle" font-weight="normal" >0</text><text x="929.60" y="251" font-size="6.6" fill="#222" text-anchor="middle" font-weight="normal" >20</text><text x="734.80" y="258" font-size="6.9" fill="#444" text-anchor="end" font-weight="normal" >-647.14</text><path d="M737.6 255.8 h2" stroke="#555" stroke-width="0.5"/><text x="734.80" y="276" font-size="6.9" fill="#444" text-anchor="end" font-weight="normal" >-215.71</text><path d="M737.6 273.6 h2" stroke="#555" stroke-width="0.5"/><text x="734.80" y="293" font-size="6.9" fill="#444" text-anchor="end" font-weight="normal" >215.71</text><path d="M737.6 290.9 h2" stroke="#555" stroke-width="0.5"/><text x="734.80" y="311" font-size="6.9" fill="#444" text-anchor="end" font-weight="normal" >647.14</text><path d="M737.6 308.1 h2" stroke="#555" stroke-width="0.5"/><path d="M739.7 252.0 V312.3 H1066.3 v1.6" stroke="#555" stroke-width="0.5" fill="none"/><text x="739.20" y="322" font-size="7.2" fill="#444" text-anchor="middle" font-weight="normal" >0.65</text><path d="M739.7 312.3 v1.6" stroke="#555" stroke-width="0.5"/><text x="767.65" y="322" font-size="7.2" fill="#444" text-anchor="middle" font-weight="normal" >26.05</text><path d="M768.2 312.3 v1.6" stroke="#555" stroke-width="0.5"/><text x="796.10" y="322" font-size="7.2" fill="#444" text-anchor="middle" font-weight="normal" >52.00</text><path d="M796.6 312.3 v1.6" stroke="#555" stroke-width="0.5"/><text x="824.55" y="322" font-size="7.2" fill="#444" text-anchor="middle" font-weight="normal" >78.30</text><path d="M825.1 312.3 v1.6" stroke="#555" stroke-width="0.5"/><text x="853.00" y="322" font-size="7.2" fill="#444" text-anchor="middle" font-weight="normal" >106.05</text><path d="M853.5 312.3 v1.6" stroke="#555" stroke-width="0.5"/><text x="881.45" y="322" font-size="7.2" fill="#444" text-anchor="middle" font-weight="normal" >133.00</text><path d="M882.0 312.3 v1.6" stroke="#555" stroke-width="0.5"/><text x="909.90" y="322" font-size="7.2" fill="#444" text-anchor="middle" font-weight="normal" >159.76</text><path d="M910.4 312.3 v1.6" stroke="#555" stroke-width="0.5"/><text x="938.35" y="322" font-size="7.2" fill="#444" text-anchor="middle" font-weight="normal" >187.66</text><path d="M938.9 312.3 v1.6" stroke="#555" stroke-width="0.5"/><text x="966.80" y="322" font-size="7.2" fill="#444" text-anchor="middle" font-weight="normal" >216.56</text><path d="M967.3 312.3 v1.6" stroke="#555" stroke-width="0.5"/><text x="995.25" y="322" font-size="7.2" fill="#444" text-anchor="middle" font-weight="normal" >244.71</text><path d="M995.8 312.3 v1.6" stroke="#555" stroke-width="0.5"/><text x="1023.70" y="322" font-size="7.2" fill="#444" text-anchor="middle" font-weight="normal" >273.46</text><path d="M1024.2 312.3 v1.6" stroke="#555" stroke-width="0.5"/><text x="1052.15" y="322" font-size="7.2" fill="#444" text-anchor="middle" font-weight="normal" >302.45</text><path d="M1052.7 312.3 v1.6" stroke="#555" stroke-width="0.5"/><text x="902.50" y="329" font-size="6.4" fill="#333" text-anchor="middle" font-weight="normal" >带钢长度[m]</text></svg><div class="a" style="left:710.4px;top:334.3px;width:362.8px;height:25.8px;background:#4a6cf0"></div><div class="a" style="left:710.4px;top:360.1px;width:362.8px;height:26.7px;background:#fff;border-bottom:0.6px solid #e4e7ed"></div><svg class="a" width="1" height="1"><text x="744.00" y="377" font-size="8" fill="#606266" text-anchor="middle">本单位不良计数</text></svg><svg class="a" width="1" height="1"><text x="794.45" y="350" font-size="7.8" fill="#fff" font-weight="bold" text-anchor="middle">厚度</text></svg><svg class="a" width="1" height="1"><text x="794.45" y="377" font-size="8" fill="#606266" text-anchor="middle">27</text></svg><div class="a" style="left:777.3px;top:334.3px;width:0.6px;height:25.8px;background:#dfe5fb"></div><div class="a" style="left:777.3px;top:360.1px;width:0.6px;height:26.7px;background:#ebeef5"></div><svg class="a" width="1" height="1"><text x="828.20" y="350" font-size="7.8" fill="#fff" font-weight="bold" text-anchor="middle">宽度</text></svg><svg class="a" width="1" height="1"><text x="828.20" y="377" font-size="8" fill="#606266" text-anchor="middle">0</text></svg><div class="a" style="left:811.0px;top:334.3px;width:0.6px;height:25.8px;background:#dfe5fb"></div><div class="a" style="left:811.0px;top:360.1px;width:0.6px;height:26.7px;background:#ebeef5"></div><svg class="a" width="1" height="1"><text x="861.80" y="350" font-size="7.8" fill="#fff" font-weight="bold" text-anchor="middle">凸度</text></svg><svg class="a" width="1" height="1"><text x="861.80" y="377" font-size="8" fill="#606266" text-anchor="middle">19</text></svg><div class="a" style="left:844.8px;top:334.3px;width:0.6px;height:25.8px;background:#dfe5fb"></div><div class="a" style="left:844.8px;top:360.1px;width:0.6px;height:26.7px;background:#ebeef5"></div><svg class="a" width="1" height="1"><text x="901.25" y="350" font-size="7.8" fill="#fff" font-weight="bold" text-anchor="middle">平直度</text></svg><svg class="a" width="1" height="1"><text x="901.25" y="377" font-size="8" fill="#606266" text-anchor="middle">0</text></svg><div class="a" style="left:878.2px;top:334.3px;width:0.6px;height:25.8px;background:#dfe5fb"></div><div class="a" style="left:878.2px;top:360.1px;width:0.6px;height:26.7px;background:#ebeef5"></div><svg class="a" width="1" height="1"><text x="941.20" y="350" font-size="7.8" fill="#fff" font-weight="bold" text-anchor="middle">楔形</text></svg><svg class="a" width="1" height="1"><text x="941.20" y="377" font-size="8" fill="#606266" text-anchor="middle">26</text></svg><div class="a" style="left:923.7px;top:334.3px;width:0.6px;height:25.8px;background:#dfe5fb"></div><div class="a" style="left:923.7px;top:360.1px;width:0.6px;height:26.7px;background:#ebeef5"></div><svg class="a" width="1" height="1"><text x="980.45" y="350" font-size="7.8" fill="#fff" font-weight="bold" text-anchor="middle">中心线</text></svg><svg class="a" width="1" height="1"><text x="980.45" y="377" font-size="8" fill="#606266" text-anchor="middle">0</text></svg><div class="a" style="left:958.1px;top:334.3px;width:0.6px;height:25.8px;background:#dfe5fb"></div><div class="a" style="left:958.1px;top:360.1px;width:0.6px;height:26.7px;background:#ebeef5"></div><svg class="a" width="1" height="1"><text x="1019.75" y="350" font-size="8.2" fill="#fff" font-weight="bold" text-anchor="middle">FDT</text></svg><svg class="a" width="1" height="1"><text x="1019.75" y="377" font-size="8" fill="#606266" text-anchor="middle">3</text></svg><div class="a" style="left:1002.2px;top:334.3px;width:0.6px;height:25.8px;background:#dfe5fb"></div><div class="a" style="left:1002.2px;top:360.1px;width:0.6px;height:26.7px;background:#ebeef5"></div><svg class="a" width="1" height="1"><text x="1055.10" y="350" font-size="8.2" fill="#fff" font-weight="bold" text-anchor="middle">CT</text></svg><svg class="a" width="1" height="1"><text x="1055.10" y="377" font-size="8" fill="#606266" text-anchor="middle">2</text></svg><div class="a" style="left:1036.7px;top:334.3px;width:0.6px;height:25.8px;background:#dfe5fb"></div><div class="a" style="left:1036.7px;top:360.1px;width:0.6px;height:26.7px;background:#ebeef5"></div><svg width="1080" height="608" viewBox="0 0 1080 608"><text x="713" y="402" font-size="10.8" font-weight="bold" fill="#333" letter-spacing="-0.2">宽度/厚度变化曲线(mm)</text><text x="712.60" y="412" font-size="6.9" fill="#6e7079" text-anchor="start" font-weight="normal" >2,100</text><text x="1045.20" y="412" font-size="6.9" fill="#6e7079" text-anchor="start" font-weight="normal" >18</text><path d="M735.6 409.5 H1041.4" stroke="#e6eaf5" stroke-width="0.6"/><text x="712.60" y="422" font-size="6.9" fill="#6e7079" text-anchor="start" font-weight="normal" >2,000</text><text x="1045.20" y="422" font-size="6.9" fill="#6e7079" text-anchor="start" font-weight="normal" >16</text><path d="M735.6 419.5 H1041.4" stroke="#e6eaf5" stroke-width="0.6"/><text x="712.60" y="432" font-size="6.9" fill="#6e7079" text-anchor="start" font-weight="normal" >1,900</text><text x="1045.20" y="432" font-size="6.9" fill="#6e7079" text-anchor="start" font-weight="normal" >14</text><path d="M735.6 429.5 H1041.4" stroke="#e6eaf5" stroke-width="0.6"/><text x="712.60" y="442" font-size="6.9" fill="#6e7079" text-anchor="start" font-weight="normal" >1,800</text><text x="1045.20" y="442" font-size="6.9" fill="#6e7079" text-anchor="start" font-weight="normal" >12</text><path d="M735.6 439.4 H1041.4" stroke="#e6eaf5" stroke-width="0.6"/><text x="712.60" y="452" font-size="6.9" fill="#6e7079" text-anchor="start" font-weight="normal" >1,700</text><text x="1045.20" y="452" font-size="6.9" fill="#6e7079" text-anchor="start" font-weight="normal" >10</text><path d="M735.6 449.4 H1041.4" stroke="#e6eaf5" stroke-width="0.6"/><text x="712.60" y="462" font-size="6.9" fill="#6e7079" text-anchor="start" font-weight="normal" >1,600</text><text x="1045.20" y="462" font-size="6.9" fill="#6e7079" text-anchor="start" font-weight="normal" >8</text><path d="M735.6 459.4 H1041.4" stroke="#e6eaf5" stroke-width="0.6"/><text x="712.60" y="472" font-size="6.9" fill="#6e7079" text-anchor="start" font-weight="normal" >1,500</text><text x="1045.20" y="472" font-size="6.9" fill="#6e7079" text-anchor="start" font-weight="normal" >6</text><path d="M735.6 469.4 H1041.4" stroke="#e6eaf5" stroke-width="0.6"/><rect x="735.6" y="463.6" width="305.8" height="5.5" fill="#d9e0f3" fill-opacity="0.8"/><rect x="735.6" y="469.1" width="305.8" height="3.7" fill="#d4e0fb" fill-opacity="0.9"/><polygon points="735.6,472.8 735.6,469.9 748.3,470.2 761.1,470.4 773.8,469.5 786.6,470.3 799.3,471.2 812.1,470.4 824.8,470.4 837.5,470.9 850.3,470.2 863.0,469.9 875.8,471.0 888.5,469.6 901.2,471.1 914.0,471.1 926.7,470.4 939.5,470.3 952.2,469.4 965.0,469.7 977.7,470.9 990.4,470.8 1003.2,470.6 1015.9,469.6 1028.7,470.8 1041.4,471.3 1041.4,472.8" fill="#bccff8" fill-opacity="0.55"/><rect x="734.5" y="466.7" width="2.2" height="5.7" rx="1.1" fill="#fff" stroke="#a9bce8" stroke-width="0.5"/><rect x="1040.3" y="466.7" width="2.2" height="5.7" rx="1.1" fill="#fff" stroke="#a9bce8" stroke-width="0.5"/><rect x="886.5" y="464.9" width="4" height="1.1" fill="#fff" fill-opacity="0.8"/><path d="M735.6 469.4 H1041.4" stroke="#8f9cc4" stroke-width="0.5"/><text x="742.40" y="480" font-size="6.9" fill="#6e7079" text-anchor="middle" font-weight="normal" >07:30</text><text x="788.45" y="480" font-size="6.9" fill="#444" text-anchor="middle" font-weight="bold" >08:00</text><text x="834.50" y="480" font-size="6.9" fill="#6e7079" text-anchor="middle" font-weight="normal" >08:30</text><text x="880.55" y="480" font-size="6.9" fill="#444" text-anchor="middle" font-weight="bold" >09:00</text><text x="926.60" y="480" font-size="6.9" fill="#6e7079" text-anchor="middle" font-weight="normal" >09:30</text><text x="972.65" y="480" font-size="6.9" fill="#444" text-anchor="middle" font-weight="bold" >10:00</text><text x="1018.70" y="480" font-size="6.9" fill="#6e7079" text-anchor="middle" font-weight="normal" >10:30</text><text x="1040.40" y="399" font-size="6.4" fill="#888" text-anchor="middle" font-weight="normal" >厚度</text><text x="1073.60" y="406" font-size="6.9" fill="#333" text-anchor="end" font-weight="normal" >2023-06-29 10:44:07</text><path d="M1041.4 404.5 V469.4" stroke="#f03030" stroke-width="0.8" stroke-dasharray="1.4 1.2"/><polyline points="735.6,459.1 739.0,459.1 748.6,459.1 752.8,459.1 753.8,449.4 758.1,449.4 762.4,449.4 764.1,439.4 769.3,439.4 772.8,420.5 777.9,420.5 781.4,410.8 787.2,410.8 792.4,410.8 796.6,410.8 800.8,410.8 805.0,410.8 809.2,410.8 813.4,410.8 817.5,410.8 830.3,420.5 830.6,420.5 831.3,441.8 834.8,441.8 838.2,441.8 839.9,459.1 843.9,459.1 847.8,459.1 851.7,459.1 855.6,459.1 859.6,459.1 866.5,459.1 870.7,459.1 875.0,459.1 879.3,459.1 883.5,459.1 887.8,459.1 892.1,459.1 896.3,459.1 900.6,459.1 904.9,459.1 909.1,459.1 913.4,459.1 917.7,459.1 921.9,459.1 926.2,459.1 930.5,459.1 934.7,459.1 939.0,459.1 943.3,459.1 947.6,459.1 951.8,459.1 956.1,459.1 960.4,459.1 964.6,459.1 968.9,459.1 973.2,459.1 977.4,459.1 981.7,459.1 986.0,459.1 990.2,459.1 994.5,459.1 998.8,459.1 1003.0,459.1 1007.3,459.1 1011.6,459.1 1015.8,459.1 1020.1,459.1 1024.4,459.1 1028.6,459.1 1032.9,459.1 1037.2,459.1 1041.4,459.1" fill="none" stroke="#91cc75" stroke-width="1.1" stroke-linejoin="round" stroke-linecap="round" /><circle cx="735.6" cy="459.1" r="1.45" fill="#fff" stroke="#91cc75" stroke-width="0.95"/><circle cx="739.0" cy="459.1" r="1.45" fill="#fff" stroke="#91cc75" stroke-width="0.95"/><circle cx="748.6" cy="459.1" r="1.45" fill="#fff" stroke="#91cc75" stroke-width="0.95"/><circle cx="752.8" cy="459.1" r="1.45" fill="#fff" stroke="#91cc75" stroke-width="0.95"/><circle cx="753.8" cy="449.4" r="1.45" fill="#fff" stroke="#91cc75" stroke-width="0.95"/><circle cx="758.1" cy="449.4" r="1.45" fill="#fff" stroke="#91cc75" stroke-width="0.95"/><circle cx="762.4" cy="449.4" r="1.45" fill="#fff" stroke="#91cc75" stroke-width="0.95"/><circle cx="764.1" cy="439.4" r="1.45" fill="#fff" stroke="#91cc75" stroke-width="0.95"/><circle cx="769.3" cy="439.4" r="1.45" fill="#fff" stroke="#91cc75" stroke-width="0.95"/><circle cx="772.8" cy="420.5" r="1.45" fill="#fff" stroke="#91cc75" stroke-width="0.95"/><circle cx="777.9" cy="420.5" r="1.45" fill="#fff" stroke="#91cc75" stroke-width="0.95"/><circle cx="781.4" cy="410.8" r="1.45" fill="#fff" stroke="#91cc75" stroke-width="0.95"/><circle cx="787.2" cy="410.8" r="1.45" fill="#fff" stroke="#91cc75" stroke-width="0.95"/><circle cx="792.4" cy="410.8" r="1.45" fill="#fff" stroke="#91cc75" stroke-width="0.95"/><circle cx="796.6" cy="410.8" r="1.45" fill="#fff" stroke="#91cc75" stroke-width="0.95"/><circle cx="800.8" cy="410.8" r="1.45" fill="#fff" stroke="#91cc75" stroke-width="0.95"/><circle cx="805.0" cy="410.8" r="1.45" fill="#fff" stroke="#91cc75" stroke-width="0.95"/><circle cx="809.2" cy="410.8" r="1.45" fill="#fff" stroke="#91cc75" stroke-width="0.95"/><circle cx="813.4" cy="410.8" r="1.45" fill="#fff" stroke="#91cc75" stroke-width="0.95"/><circle cx="817.5" cy="410.8" r="1.45" fill="#fff" stroke="#91cc75" stroke-width="0.95"/><circle cx="830.3" cy="420.5" r="1.45" fill="#fff" stroke="#91cc75" stroke-width="0.95"/><circle cx="830.6" cy="420.5" r="1.45" fill="#fff" stroke="#91cc75" stroke-width="0.95"/><circle cx="831.3" cy="441.8" r="1.45" fill="#fff" stroke="#91cc75" stroke-width="0.95"/><circle cx="834.8" cy="441.8" r="1.45" fill="#fff" stroke="#91cc75" stroke-width="0.95"/><circle cx="838.2" cy="441.8" r="1.45" fill="#fff" stroke="#91cc75" stroke-width="0.95"/><circle cx="839.9" cy="459.1" r="1.45" fill="#fff" stroke="#91cc75" stroke-width="0.95"/><circle cx="843.9" cy="459.1" r="1.45" fill="#fff" stroke="#91cc75" stroke-width="0.95"/><circle cx="847.8" cy="459.1" r="1.45" fill="#fff" stroke="#91cc75" stroke-width="0.95"/><circle cx="851.7" cy="459.1" r="1.45" fill="#fff" stroke="#91cc75" stroke-width="0.95"/><circle cx="855.6" cy="459.1" r="1.45" fill="#fff" stroke="#91cc75" stroke-width="0.95"/><circle cx="859.6" cy="459.1" r="1.45" fill="#fff" stroke="#91cc75" stroke-width="0.95"/><circle cx="866.5" cy="459.1" r="1.45" fill="#fff" stroke="#91cc75" stroke-width="0.95"/><circle cx="870.7" cy="459.1" r="1.45" fill="#fff" stroke="#91cc75" stroke-width="0.95"/><circle cx="875.0" cy="459.1" r="1.45" fill="#fff" stroke="#91cc75" stroke-width="0.95"/><circle cx="879.3" cy="459.1" r="1.45" fill="#fff" stroke="#91cc75" stroke-width="0.95"/><circle cx="883.5" cy="459.1" r="1.45" fill="#fff" stroke="#91cc75" stroke-width="0.95"/><circle cx="887.8" cy="459.1" r="1.45" fill="#fff" stroke="#91cc75" stroke-width="0.95"/><circle cx="892.1" cy="459.1" r="1.45" fill="#fff" stroke="#91cc75" stroke-width="0.95"/><circle cx="896.3" cy="459.1" r="1.45" fill="#fff" stroke="#91cc75" stroke-width="0.95"/><circle cx="900.6" cy="459.1" r="1.45" fill="#fff" stroke="#91cc75" stroke-width="0.95"/><circle cx="904.9" cy="459.1" r="1.45" fill="#fff" stroke="#91cc75" stroke-width="0.95"/><circle cx="909.1" cy="459.1" r="1.45" fill="#fff" stroke="#91cc75" stroke-width="0.95"/><circle cx="913.4" cy="459.1" r="1.45" fill="#fff" stroke="#91cc75" stroke-width="0.95"/><circle cx="917.7" cy="459.1" r="1.45" fill="#fff" stroke="#91cc75" stroke-width="0.95"/><circle cx="921.9" cy="459.1" r="1.45" fill="#fff" stroke="#91cc75" stroke-width="0.95"/><circle cx="926.2" cy="459.1" r="1.45" fill="#fff" stroke="#91cc75" stroke-width="0.95"/><circle cx="930.5" cy="459.1" r="1.45" fill="#fff" stroke="#91cc75" stroke-width="0.95"/><circle cx="934.7" cy="459.1" r="1.45" fill="#fff" stroke="#91cc75" stroke-width="0.95"/><circle cx="939.0" cy="459.1" r="1.45" fill="#fff" stroke="#91cc75" stroke-width="0.95"/><circle cx="943.3" cy="459.1" r="1.45" fill="#fff" stroke="#91cc75" stroke-width="0.95"/><circle cx="947.6" cy="459.1" r="1.45" fill="#fff" stroke="#91cc75" stroke-width="0.95"/><circle cx="951.8" cy="459.1" r="1.45" fill="#fff" stroke="#91cc75" stroke-width="0.95"/><circle cx="956.1" cy="459.1" r="1.45" fill="#fff" stroke="#91cc75" stroke-width="0.95"/><circle cx="960.4" cy="459.1" r="1.45" fill="#fff" stroke="#91cc75" stroke-width="0.95"/><circle cx="964.6" cy="459.1" r="1.45" fill="#fff" stroke="#91cc75" stroke-width="0.95"/><circle cx="968.9" cy="459.1" r="1.45" fill="#fff" stroke="#91cc75" stroke-width="0.95"/><circle cx="973.2" cy="459.1" r="1.45" fill="#fff" stroke="#91cc75" stroke-width="0.95"/><circle cx="977.4" cy="459.1" r="1.45" fill="#fff" stroke="#91cc75" stroke-width="0.95"/><circle cx="981.7" cy="459.1" r="1.45" fill="#fff" stroke="#91cc75" stroke-width="0.95"/><circle cx="986.0" cy="459.1" r="1.45" fill="#fff" stroke="#91cc75" stroke-width="0.95"/><circle cx="990.2" cy="459.1" r="1.45" fill="#fff" stroke="#91cc75" stroke-width="0.95"/><circle cx="994.5" cy="459.1" r="1.45" fill="#fff" stroke="#91cc75" stroke-width="0.95"/><circle cx="998.8" cy="459.1" r="1.45" fill="#fff" stroke="#91cc75" stroke-width="0.95"/><circle cx="1003.0" cy="459.1" r="1.45" fill="#fff" stroke="#91cc75" stroke-width="0.95"/><circle cx="1007.3" cy="459.1" r="1.45" fill="#fff" stroke="#91cc75" stroke-width="0.95"/><circle cx="1011.6" cy="459.1" r="1.45" fill="#fff" stroke="#91cc75" stroke-width="0.95"/><circle cx="1015.8" cy="459.1" r="1.45" fill="#fff" stroke="#91cc75" stroke-width="0.95"/><circle cx="1020.1" cy="459.1" r="1.45" fill="#fff" stroke="#91cc75" stroke-width="0.95"/><circle cx="1024.4" cy="459.1" r="1.45" fill="#fff" stroke="#91cc75" stroke-width="0.95"/><circle cx="1028.6" cy="459.1" r="1.45" fill="#fff" stroke="#91cc75" stroke-width="0.95"/><circle cx="1032.9" cy="459.1" r="1.45" fill="#fff" stroke="#91cc75" stroke-width="0.95"/><circle cx="1037.2" cy="459.1" r="1.45" fill="#fff" stroke="#91cc75" stroke-width="0.95"/><circle cx="1041.4" cy="459.1" r="1.45" fill="#fff" stroke="#91cc75" stroke-width="0.95"/><polyline points="735.6,418.1 739.0,418.1 748.6,418.1 752.8,418.1 756.9,418.1 761.0,418.1 765.2,418.1 769.3,418.1 771.7,437.7 776.0,437.7 780.3,437.7 784.6,437.7 789.0,437.7 795.8,437.7 800.2,437.7 804.5,437.7 808.9,437.7 813.2,437.7 817.5,437.7 828.6,437.7 833.4,437.7 838.2,437.7 839.9,468.0 844.6,468.0 849.2,468.0 852.7,468.0 857.0,468.0 861.3,468.0 865.5,468.0 869.8,468.0 874.1,468.0 878.4,468.0 882.7,468.0 887.0,468.0 891.3,468.0 895.6,468.0 899.9,468.0 904.2,468.0 908.5,468.0 912.7,468.0 917.0,468.0 921.3,468.0 925.6,468.0 929.9,468.0 934.2,468.0 938.5,468.0 942.8,468.0 947.1,468.0 951.4,468.0 955.6,468.0 959.9,468.0 964.2,468.0 968.5,468.0 972.8,468.0 977.1,468.0 981.4,468.0 985.7,468.0 990.0,468.0 994.3,468.0 998.5,468.0 1002.8,468.0 1007.1,468.0 1011.4,468.0 1015.7,468.0 1020.0,468.0 1024.3,468.0 1028.6,468.0 1032.9,468.0 1037.2,468.0 1041.4,468.0" fill="none" stroke="#4c6ad6" stroke-width="1.1" stroke-linejoin="round" stroke-linecap="round" /><circle cx="735.6" cy="418.1" r="1.45" fill="#fff" stroke="#4c6ad6" stroke-width="0.95"/><circle cx="739.0" cy="418.1" r="1.45" fill="#fff" stroke="#4c6ad6" stroke-width="0.95"/><circle cx="748.6" cy="418.1" r="1.45" fill="#fff" stroke="#4c6ad6" stroke-width="0.95"/><circle cx="752.8" cy="418.1" r="1.45" fill="#fff" stroke="#4c6ad6" stroke-width="0.95"/><circle cx="756.9" cy="418.1" r="1.45" fill="#fff" stroke="#4c6ad6" stroke-width="0.95"/><circle cx="761.0" cy="418.1" r="1.45" fill="#fff" stroke="#4c6ad6" stroke-width="0.95"/><circle cx="765.2" cy="418.1" r="1.45" fill="#fff" stroke="#4c6ad6" stroke-width="0.95"/><circle cx="769.3" cy="418.1" r="1.45" fill="#fff" stroke="#4c6ad6" stroke-width="0.95"/><circle cx="771.7" cy="437.7" r="1.45" fill="#fff" stroke="#4c6ad6" stroke-width="0.95"/><circle cx="776.0" cy="437.7" r="1.45" fill="#fff" stroke="#4c6ad6" stroke-width="0.95"/><circle cx="780.3" cy="437.7" r="1.45" fill="#fff" stroke="#4c6ad6" stroke-width="0.95"/><circle cx="784.6" cy="437.7" r="1.45" fill="#fff" stroke="#4c6ad6" stroke-width="0.95"/><circle cx="789.0" cy="437.7" r="1.45" fill="#fff" stroke="#4c6ad6" stroke-width="0.95"/><circle cx="795.8" cy="437.7" r="1.45" fill="#fff" stroke="#4c6ad6" stroke-width="0.95"/><circle cx="800.2" cy="437.7" r="1.45" fill="#fff" stroke="#4c6ad6" stroke-width="0.95"/><circle cx="804.5" cy="437.7" r="1.45" fill="#fff" stroke="#4c6ad6" stroke-width="0.95"/><circle cx="808.9" cy="437.7" r="1.45" fill="#fff" stroke="#4c6ad6" stroke-width="0.95"/><circle cx="813.2" cy="437.7" r="1.45" fill="#fff" stroke="#4c6ad6" stroke-width="0.95"/><circle cx="817.5" cy="437.7" r="1.45" fill="#fff" stroke="#4c6ad6" stroke-width="0.95"/><circle cx="828.6" cy="437.7" r="1.45" fill="#fff" stroke="#4c6ad6" stroke-width="0.95"/><circle cx="833.4" cy="437.7" r="1.45" fill="#fff" stroke="#4c6ad6" stroke-width="0.95"/><circle cx="838.2" cy="437.7" r="1.45" fill="#fff" stroke="#4c6ad6" stroke-width="0.95"/><circle cx="839.9" cy="468.0" r="1.45" fill="#fff" stroke="#4c6ad6" stroke-width="0.95"/><circle cx="844.6" cy="468.0" r="1.45" fill="#fff" stroke="#4c6ad6" stroke-width="0.95"/><circle cx="849.2" cy="468.0" r="1.45" fill="#fff" stroke="#4c6ad6" stroke-width="0.95"/><circle cx="852.7" cy="468.0" r="1.45" fill="#fff" stroke="#4c6ad6" stroke-width="0.95"/><circle cx="857.0" cy="468.0" r="1.45" fill="#fff" stroke="#4c6ad6" stroke-width="0.95"/><circle cx="861.3" cy="468.0" r="1.45" fill="#fff" stroke="#4c6ad6" stroke-width="0.95"/><circle cx="865.5" cy="468.0" r="1.45" fill="#fff" stroke="#4c6ad6" stroke-width="0.95"/><circle cx="869.8" cy="468.0" r="1.45" fill="#fff" stroke="#4c6ad6" stroke-width="0.95"/><circle cx="874.1" cy="468.0" r="1.45" fill="#fff" stroke="#4c6ad6" stroke-width="0.95"/><circle cx="878.4" cy="468.0" r="1.45" fill="#fff" stroke="#4c6ad6" stroke-width="0.95"/><circle cx="882.7" cy="468.0" r="1.45" fill="#fff" stroke="#4c6ad6" stroke-width="0.95"/><circle cx="887.0" cy="468.0" r="1.45" fill="#fff" stroke="#4c6ad6" stroke-width="0.95"/><circle cx="891.3" cy="468.0" r="1.45" fill="#fff" stroke="#4c6ad6" stroke-width="0.95"/><circle cx="895.6" cy="468.0" r="1.45" fill="#fff" stroke="#4c6ad6" stroke-width="0.95"/><circle cx="899.9" cy="468.0" r="1.45" fill="#fff" stroke="#4c6ad6" stroke-width="0.95"/><circle cx="904.2" cy="468.0" r="1.45" fill="#fff" stroke="#4c6ad6" stroke-width="0.95"/><circle cx="908.5" cy="468.0" r="1.45" fill="#fff" stroke="#4c6ad6" stroke-width="0.95"/><circle cx="912.7" cy="468.0" r="1.45" fill="#fff" stroke="#4c6ad6" stroke-width="0.95"/><circle cx="917.0" cy="468.0" r="1.45" fill="#fff" stroke="#4c6ad6" stroke-width="0.95"/><circle cx="921.3" cy="468.0" r="1.45" fill="#fff" stroke="#4c6ad6" stroke-width="0.95"/><circle cx="925.6" cy="468.0" r="1.45" fill="#fff" stroke="#4c6ad6" stroke-width="0.95"/><circle cx="929.9" cy="468.0" r="1.45" fill="#fff" stroke="#4c6ad6" stroke-width="0.95"/><circle cx="934.2" cy="468.0" r="1.45" fill="#fff" stroke="#4c6ad6" stroke-width="0.95"/><circle cx="938.5" cy="468.0" r="1.45" fill="#fff" stroke="#4c6ad6" stroke-width="0.95"/><circle cx="942.8" cy="468.0" r="1.45" fill="#fff" stroke="#4c6ad6" stroke-width="0.95"/><circle cx="947.1" cy="468.0" r="1.45" fill="#fff" stroke="#4c6ad6" stroke-width="0.95"/><circle cx="951.4" cy="468.0" r="1.45" fill="#fff" stroke="#4c6ad6" stroke-width="0.95"/><circle cx="955.6" cy="468.0" r="1.45" fill="#fff" stroke="#4c6ad6" stroke-width="0.95"/><circle cx="959.9" cy="468.0" r="1.45" fill="#fff" stroke="#4c6ad6" stroke-width="0.95"/><circle cx="964.2" cy="468.0" r="1.45" fill="#fff" stroke="#4c6ad6" stroke-width="0.95"/><circle cx="968.5" cy="468.0" r="1.45" fill="#fff" stroke="#4c6ad6" stroke-width="0.95"/><circle cx="972.8" cy="468.0" r="1.45" fill="#fff" stroke="#4c6ad6" stroke-width="0.95"/><circle cx="977.1" cy="468.0" r="1.45" fill="#fff" stroke="#4c6ad6" stroke-width="0.95"/><circle cx="981.4" cy="468.0" r="1.45" fill="#fff" stroke="#4c6ad6" stroke-width="0.95"/><circle cx="985.7" cy="468.0" r="1.45" fill="#fff" stroke="#4c6ad6" stroke-width="0.95"/><circle cx="990.0" cy="468.0" r="1.45" fill="#fff" stroke="#4c6ad6" stroke-width="0.95"/><circle cx="994.3" cy="468.0" r="1.45" fill="#fff" stroke="#4c6ad6" stroke-width="0.95"/><circle cx="998.5" cy="468.0" r="1.45" fill="#fff" stroke="#4c6ad6" stroke-width="0.95"/><circle cx="1002.8" cy="468.0" r="1.45" fill="#fff" stroke="#4c6ad6" stroke-width="0.95"/><circle cx="1007.1" cy="468.0" r="1.45" fill="#fff" stroke="#4c6ad6" stroke-width="0.95"/><circle cx="1011.4" cy="468.0" r="1.45" fill="#fff" stroke="#4c6ad6" stroke-width="0.95"/><circle cx="1015.7" cy="468.0" r="1.45" fill="#fff" stroke="#4c6ad6" stroke-width="0.95"/><circle cx="1020.0" cy="468.0" r="1.45" fill="#fff" stroke="#4c6ad6" stroke-width="0.95"/><circle cx="1024.3" cy="468.0" r="1.45" fill="#fff" stroke="#4c6ad6" stroke-width="0.95"/><circle cx="1028.6" cy="468.0" r="1.45" fill="#fff" stroke="#4c6ad6" stroke-width="0.95"/><circle cx="1032.9" cy="468.0" r="1.45" fill="#fff" stroke="#4c6ad6" stroke-width="0.95"/><circle cx="1037.2" cy="468.0" r="1.45" fill="#fff" stroke="#4c6ad6" stroke-width="0.95"/><circle cx="1041.4" cy="468.0" r="1.45" fill="#fff" stroke="#4c6ad6" stroke-width="0.95"/><path d="M859 400.8 H872.8" stroke="#5470c6" stroke-width="0.9"/><circle cx="865.9" cy="400.8" r="2.5" fill="#fff" stroke="#5470c6" stroke-width="0.9"/><text x="875.90" y="403" font-size="6.6" fill="#333" text-anchor="start" font-weight="normal" >宽度</text><path d="M894 400.8 H907.8" stroke="#91cc75" stroke-width="0.9"/><circle cx="900.9" cy="400.8" r="2.5" fill="#fff" stroke="#91cc75" stroke-width="0.9"/><text x="911.20" y="403" font-size="6.6" fill="#333" text-anchor="start" font-weight="normal" >厚度</text><text x="713" y="502.8" font-size="10.8" font-weight="bold" fill="#333" letter-spacing="-0.2">得分曲线</text><text x="712.20" y="512" font-size="6.9" fill="#6e7079" text-anchor="start" font-weight="normal" >100</text><text x="712.20" y="523" font-size="6.9" fill="#6e7079" text-anchor="start" font-weight="normal" >90</text><text x="712.20" y="534" font-size="6.9" fill="#6e7079" text-anchor="start" font-weight="normal" >80</text><text x="712.20" y="545" font-size="6.9" fill="#6e7079" text-anchor="start" font-weight="normal" >70</text><text x="712.20" y="556" font-size="6.9" fill="#6e7079" text-anchor="start" font-weight="normal" >60</text><text x="712.20" y="567" font-size="6.9" fill="#6e7079" text-anchor="start" font-weight="normal" >50</text><text x="1045.20" y="512" font-size="6.9" fill="#6e7079" text-anchor="start" font-weight="normal" >96</text><path d="M728.0 509.5 H1041.4" stroke="#e6eaf5" stroke-width="0.6"/><text x="1045.20" y="520" font-size="6.9" fill="#6e7079" text-anchor="start" font-weight="normal" >93</text><path d="M728.0 517.4 H1041.4" stroke="#e6eaf5" stroke-width="0.6"/><text x="1045.20" y="528" font-size="6.9" fill="#6e7079" text-anchor="start" font-weight="normal" >90</text><path d="M728.0 525.3 H1041.4" stroke="#e6eaf5" stroke-width="0.6"/><text x="1045.20" y="536" font-size="6.9" fill="#6e7079" text-anchor="start" font-weight="normal" >87</text><path d="M728.0 533.2 H1041.4" stroke="#e6eaf5" stroke-width="0.6"/><text x="1045.20" y="544" font-size="6.9" fill="#6e7079" text-anchor="start" font-weight="normal" >84</text><path d="M728.0 541.2 H1041.4" stroke="#e6eaf5" stroke-width="0.6"/><text x="1045.20" y="551" font-size="6.9" fill="#6e7079" text-anchor="start" font-weight="normal" >81</text><path d="M728.0 549.1 H1041.4" stroke="#e6eaf5" stroke-width="0.6"/><text x="1045.20" y="559" font-size="6.9" fill="#6e7079" text-anchor="start" font-weight="normal" >78</text><path d="M728.0 557.0 H1041.4" stroke="#e6eaf5" stroke-width="0.6"/><text x="1045.20" y="567" font-size="6.9" fill="#6e7079" text-anchor="start" font-weight="normal" >75</text><path d="M728.0 564.9 H1041.4" stroke="#e6eaf5" stroke-width="0.6"/><path d="M728.0 509.5 H1041.4" stroke="#e6eaf5" stroke-width="0.6"/><path d="M728.0 520.6 H1041.4" stroke="#e6eaf5" stroke-width="0.6"/><path d="M728.0 531.7 H1041.4" stroke="#e6eaf5" stroke-width="0.6"/><path d="M728.0 542.7 H1041.4" stroke="#e6eaf5" stroke-width="0.6"/><path d="M728.0 553.8 H1041.4" stroke="#e6eaf5" stroke-width="0.6"/><path d="M728.0 564.9 H1041.4" stroke="#e6eaf5" stroke-width="0.6"/><text x="863.00" y="543" font-size="11.6" fill="#c4c4c4" text-anchor="start" font-weight="normal" >激活 Windows</text><text x="863.00" y="554" font-size="8.1" fill="#cccccc" text-anchor="start" font-weight="normal" letter-spacing="0.5">转到"控制面板"中的"系统"以激活 Windows。</text><rect x="728.0" y="561.5" width="313.4" height="6.1" fill="#d9e0f3" fill-opacity="0.8"/><rect x="728.0" y="567.6" width="313.4" height="4.0" fill="#d4e0fb" fill-opacity="0.9"/><polygon points="728.0,571.6 728.0,569.8 741.1,568.6 754.1,569.6 767.2,568.3 780.2,568.8 793.3,568.4 806.4,569.0 819.4,567.9 832.5,568.7 845.5,568.5 858.6,567.9 871.6,569.6 884.7,569.8 897.8,568.1 910.8,569.2 923.9,568.9 936.9,568.7 950.0,569.1 963.1,569.2 976.1,568.4 989.2,568.6 1002.2,568.9 1015.3,570.0 1028.3,569.8 1041.4,569.5 1041.4,571.6" fill="#bccff8" fill-opacity="0.55"/><rect x="726.9" y="564.9" width="2.2" height="6.3" rx="1.1" fill="#fff" stroke="#a9bce8" stroke-width="0.5"/><rect x="1040.3" y="564.9" width="2.2" height="6.3" rx="1.1" fill="#fff" stroke="#a9bce8" stroke-width="0.5"/><rect x="882.7" y="562.8" width="4" height="1.1" fill="#fff" fill-opacity="0.8"/><text x="734.90" y="576" font-size="6.9" fill="#999" text-anchor="middle" font-weight="normal" >07:30</text><text x="782.20" y="576" font-size="6.9" fill="#777" text-anchor="middle" font-weight="bold" >08:00</text><text x="829.50" y="576" font-size="6.9" fill="#999" text-anchor="middle" font-weight="normal" >08:30</text><text x="876.80" y="576" font-size="6.9" fill="#777" text-anchor="middle" font-weight="bold" >09:00</text><text x="924.10" y="576" font-size="6.9" fill="#999" text-anchor="middle" font-weight="normal" >09:30</text><text x="971.40" y="576" font-size="6.9" fill="#777" text-anchor="middle" font-weight="bold" >10:00</text><text x="1018.70" y="576" font-size="6.9" fill="#999" text-anchor="middle" font-weight="normal" >10:30</text><text x="1040.20" y="500" font-size="6.4" fill="#888" text-anchor="middle" font-weight="normal" >历史得分</text><text x="1073.60" y="506" font-size="6.9" fill="#333" text-anchor="end" font-weight="normal" >2023-06-29 10:44:07</text><polyline points="728.0,521.9 745.9,524.6 751.1,523.6 756.2,517.7 759.0,517.0 761.4,521.2 763.8,533.2 766.6,539.1 770.0,539.4 774.1,538.4 776.9,543.6 780.3,550.4 790.7,556.7 801.0,560.1 809.6,561.8 814.8,555.6 821.7,543.6 828.6,534.9 832.0,537.4 834.1,537.4 835.5,525.3 838.9,524.6 880.2,523.9 949.1,522.2 1018.0,520.5 1040.4,519.8" fill="none" stroke="#f01010" stroke-width="1.5" stroke-linejoin="round" stroke-linecap="butt" stroke-dasharray="1.4 1.4"/><path d="M1041.4 504.5 V571" stroke="#f03030" stroke-width="0.8" stroke-dasharray="1.4 1.2"/><polyline points="728.0,528.7 731.1,527.7 741.8,540.1 745.9,525.3 746.9,540.1 750.0,522.9 755.5,528.7 757.9,554.6 762.1,539.4 765.5,531.5 767.2,523.9 771.0,522.2 775.2,540.1 778.6,539.4 781.4,539.4 787.2,540.8 790.7,538.7 794.1,539.4 797.6,536.7 800.3,540.8 804.5,537.4 807.2,536.7 810.7,540.1 824.4,533.9 825.5,538.4 826.5,547.0 827.5,533.2 830.3,530.8 832.7,528.1 834.8,525.3 838.2,521.9 841.7,518.4 845.1,516.7 849.2,516.0 852.7,517.0 856.1,516.7 861.3,518.4 864.7,516.7 868.2,517.0 871.6,516.0 875.1,515.3 878.5,515.3 882.0,516.0 885.4,516.7 888.8,514.6 892.3,516.7 895.7,516.0 899.2,515.3 902.6,516.0 906.1,516.7 909.5,515.3 913.0,516.7 916.4,515.3 919.8,516.3 923.3,516.0 926.7,515.3 930.2,516.0 933.6,514.6 937.1,515.7 940.5,515.3 944.0,515.0 947.4,514.6 950.9,514.3 954.3,514.6 957.7,515.0 961.2,516.0 964.6,515.3 968.1,515.7 971.5,515.3 975.0,515.0 978.4,516.0 981.9,515.3 985.3,515.0 990.5,513.9 993.9,515.0 997.4,514.6 1000.8,515.3 1004.2,515.0 1007.7,515.3 1010.4,518.4 1013.9,516.0 1017.3,515.0 1020.8,515.3 1024.2,515.0 1027.7,515.3 1031.1,515.0 1034.6,515.7 1037.0,514.6 1040.4,516.0" fill="none" stroke="#4f6fe0" stroke-width="1.1" stroke-linejoin="round" stroke-linecap="round" /><circle cx="728.0" cy="528.7" r="1.5" fill="#fff" stroke="#4f6fe0" stroke-width="0.95"/><circle cx="731.1" cy="527.7" r="1.5" fill="#fff" stroke="#4f6fe0" stroke-width="0.95"/><circle cx="741.8" cy="540.1" r="1.5" fill="#fff" stroke="#4f6fe0" stroke-width="0.95"/><circle cx="745.9" cy="525.3" r="1.5" fill="#fff" stroke="#4f6fe0" stroke-width="0.95"/><circle cx="746.9" cy="540.1" r="1.5" fill="#fff" stroke="#4f6fe0" stroke-width="0.95"/><circle cx="750.0" cy="522.9" r="1.5" fill="#fff" stroke="#4f6fe0" stroke-width="0.95"/><circle cx="755.5" cy="528.7" r="1.5" fill="#fff" stroke="#4f6fe0" stroke-width="0.95"/><circle cx="757.9" cy="554.6" r="1.5" fill="#fff" stroke="#4f6fe0" stroke-width="0.95"/><circle cx="762.1" cy="539.4" r="1.5" fill="#fff" stroke="#4f6fe0" stroke-width="0.95"/><circle cx="765.5" cy="531.5" r="1.5" fill="#fff" stroke="#4f6fe0" stroke-width="0.95"/><circle cx="767.2" cy="523.9" r="1.5" fill="#fff" stroke="#4f6fe0" stroke-width="0.95"/><circle cx="771.0" cy="522.2" r="1.5" fill="#fff" stroke="#4f6fe0" stroke-width="0.95"/><circle cx="775.2" cy="540.1" r="1.5" fill="#fff" stroke="#4f6fe0" stroke-width="0.95"/><circle cx="778.6" cy="539.4" r="1.5" fill="#fff" stroke="#4f6fe0" stroke-width="0.95"/><circle cx="781.4" cy="539.4" r="1.5" fill="#fff" stroke="#4f6fe0" stroke-width="0.95"/><circle cx="787.2" cy="540.8" r="1.5" fill="#fff" stroke="#4f6fe0" stroke-width="0.95"/><circle cx="790.7" cy="538.7" r="1.5" fill="#fff" stroke="#4f6fe0" stroke-width="0.95"/><circle cx="794.1" cy="539.4" r="1.5" fill="#fff" stroke="#4f6fe0" stroke-width="0.95"/><circle cx="797.6" cy="536.7" r="1.5" fill="#fff" stroke="#4f6fe0" stroke-width="0.95"/><circle cx="800.3" cy="540.8" r="1.5" fill="#fff" stroke="#4f6fe0" stroke-width="0.95"/><circle cx="804.5" cy="537.4" r="1.5" fill="#fff" stroke="#4f6fe0" stroke-width="0.95"/><circle cx="807.2" cy="536.7" r="1.5" fill="#fff" stroke="#4f6fe0" stroke-width="0.95"/><circle cx="810.7" cy="540.1" r="1.5" fill="#fff" stroke="#4f6fe0" stroke-width="0.95"/><circle cx="824.4" cy="533.9" r="1.5" fill="#fff" stroke="#4f6fe0" stroke-width="0.95"/><circle cx="825.5" cy="538.4" r="1.5" fill="#fff" stroke="#4f6fe0" stroke-width="0.95"/><circle cx="826.5" cy="547.0" r="1.5" fill="#fff" stroke="#4f6fe0" stroke-width="0.95"/><circle cx="827.5" cy="533.2" r="1.5" fill="#fff" stroke="#4f6fe0" stroke-width="0.95"/><circle cx="830.3" cy="530.8" r="1.5" fill="#fff" stroke="#4f6fe0" stroke-width="0.95"/><circle cx="832.7" cy="528.1" r="1.5" fill="#fff" stroke="#4f6fe0" stroke-width="0.95"/><circle cx="834.8" cy="525.3" r="1.5" fill="#fff" stroke="#4f6fe0" stroke-width="0.95"/><circle cx="838.2" cy="521.9" r="1.5" fill="#fff" stroke="#4f6fe0" stroke-width="0.95"/><circle cx="841.7" cy="518.4" r="1.5" fill="#fff" stroke="#4f6fe0" stroke-width="0.95"/><circle cx="845.1" cy="516.7" r="1.5" fill="#fff" stroke="#4f6fe0" stroke-width="0.95"/><circle cx="849.2" cy="516.0" r="1.5" fill="#fff" stroke="#4f6fe0" stroke-width="0.95"/><circle cx="852.7" cy="517.0" r="1.5" fill="#fff" stroke="#4f6fe0" stroke-width="0.95"/><circle cx="856.1" cy="516.7" r="1.5" fill="#fff" stroke="#4f6fe0" stroke-width="0.95"/><circle cx="861.3" cy="518.4" r="1.5" fill="#fff" stroke="#4f6fe0" stroke-width="0.95"/><circle cx="864.7" cy="516.7" r="1.5" fill="#fff" stroke="#4f6fe0" stroke-width="0.95"/><circle cx="868.2" cy="517.0" r="1.5" fill="#fff" stroke="#4f6fe0" stroke-width="0.95"/><circle cx="871.6" cy="516.0" r="1.5" fill="#fff" stroke="#4f6fe0" stroke-width="0.95"/><circle cx="875.1" cy="515.3" r="1.5" fill="#fff" stroke="#4f6fe0" stroke-width="0.95"/><circle cx="878.5" cy="515.3" r="1.5" fill="#fff" stroke="#4f6fe0" stroke-width="0.95"/><circle cx="882.0" cy="516.0" r="1.5" fill="#fff" stroke="#4f6fe0" stroke-width="0.95"/><circle cx="885.4" cy="516.7" r="1.5" fill="#fff" stroke="#4f6fe0" stroke-width="0.95"/><circle cx="888.8" cy="514.6" r="1.5" fill="#fff" stroke="#4f6fe0" stroke-width="0.95"/><circle cx="892.3" cy="516.7" r="1.5" fill="#fff" stroke="#4f6fe0" stroke-width="0.95"/><circle cx="895.7" cy="516.0" r="1.5" fill="#fff" stroke="#4f6fe0" stroke-width="0.95"/><circle cx="899.2" cy="515.3" r="1.5" fill="#fff" stroke="#4f6fe0" stroke-width="0.95"/><circle cx="902.6" cy="516.0" r="1.5" fill="#fff" stroke="#4f6fe0" stroke-width="0.95"/><circle cx="906.1" cy="516.7" r="1.5" fill="#fff" stroke="#4f6fe0" stroke-width="0.95"/><circle cx="909.5" cy="515.3" r="1.5" fill="#fff" stroke="#4f6fe0" stroke-width="0.95"/><circle cx="913.0" cy="516.7" r="1.5" fill="#fff" stroke="#4f6fe0" stroke-width="0.95"/><circle cx="916.4" cy="515.3" r="1.5" fill="#fff" stroke="#4f6fe0" stroke-width="0.95"/><circle cx="919.8" cy="516.3" r="1.5" fill="#fff" stroke="#4f6fe0" stroke-width="0.95"/><circle cx="923.3" cy="516.0" r="1.5" fill="#fff" stroke="#4f6fe0" stroke-width="0.95"/><circle cx="926.7" cy="515.3" r="1.5" fill="#fff" stroke="#4f6fe0" stroke-width="0.95"/><circle cx="930.2" cy="516.0" r="1.5" fill="#fff" stroke="#4f6fe0" stroke-width="0.95"/><circle cx="933.6" cy="514.6" r="1.5" fill="#fff" stroke="#4f6fe0" stroke-width="0.95"/><circle cx="937.1" cy="515.7" r="1.5" fill="#fff" stroke="#4f6fe0" stroke-width="0.95"/><circle cx="940.5" cy="515.3" r="1.5" fill="#fff" stroke="#4f6fe0" stroke-width="0.95"/><circle cx="944.0" cy="515.0" r="1.5" fill="#fff" stroke="#4f6fe0" stroke-width="0.95"/><circle cx="947.4" cy="514.6" r="1.5" fill="#fff" stroke="#4f6fe0" stroke-width="0.95"/><circle cx="950.9" cy="514.3" r="1.5" fill="#fff" stroke="#4f6fe0" stroke-width="0.95"/><circle cx="954.3" cy="514.6" r="1.5" fill="#fff" stroke="#4f6fe0" stroke-width="0.95"/><circle cx="957.7" cy="515.0" r="1.5" fill="#fff" stroke="#4f6fe0" stroke-width="0.95"/><circle cx="961.2" cy="516.0" r="1.5" fill="#fff" stroke="#4f6fe0" stroke-width="0.95"/><circle cx="964.6" cy="515.3" r="1.5" fill="#fff" stroke="#4f6fe0" stroke-width="0.95"/><circle cx="968.1" cy="515.7" r="1.5" fill="#fff" stroke="#4f6fe0" stroke-width="0.95"/><circle cx="971.5" cy="515.3" r="1.5" fill="#fff" stroke="#4f6fe0" stroke-width="0.95"/><circle cx="975.0" cy="515.0" r="1.5" fill="#fff" stroke="#4f6fe0" stroke-width="0.95"/><circle cx="978.4" cy="516.0" r="1.5" fill="#fff" stroke="#4f6fe0" stroke-width="0.95"/><circle cx="981.9" cy="515.3" r="1.5" fill="#fff" stroke="#4f6fe0" stroke-width="0.95"/><circle cx="985.3" cy="515.0" r="1.5" fill="#fff" stroke="#4f6fe0" stroke-width="0.95"/><circle cx="990.5" cy="513.9" r="1.5" fill="#fff" stroke="#4f6fe0" stroke-width="0.95"/><circle cx="993.9" cy="515.0" r="1.5" fill="#fff" stroke="#4f6fe0" stroke-width="0.95"/><circle cx="997.4" cy="514.6" r="1.5" fill="#fff" stroke="#4f6fe0" stroke-width="0.95"/><circle cx="1000.8" cy="515.3" r="1.5" fill="#fff" stroke="#4f6fe0" stroke-width="0.95"/><circle cx="1004.2" cy="515.0" r="1.5" fill="#fff" stroke="#4f6fe0" stroke-width="0.95"/><circle cx="1007.7" cy="515.3" r="1.5" fill="#fff" stroke="#4f6fe0" stroke-width="0.95"/><circle cx="1010.4" cy="518.4" r="1.5" fill="#fff" stroke="#4f6fe0" stroke-width="0.95"/><circle cx="1013.9" cy="516.0" r="1.5" fill="#fff" stroke="#4f6fe0" stroke-width="0.95"/><circle cx="1017.3" cy="515.0" r="1.5" fill="#fff" stroke="#4f6fe0" stroke-width="0.95"/><circle cx="1020.8" cy="515.3" r="1.5" fill="#fff" stroke="#4f6fe0" stroke-width="0.95"/><circle cx="1024.2" cy="515.0" r="1.5" fill="#fff" stroke="#4f6fe0" stroke-width="0.95"/><circle cx="1027.7" cy="515.3" r="1.5" fill="#fff" stroke="#4f6fe0" stroke-width="0.95"/><circle cx="1031.1" cy="515.0" r="1.5" fill="#fff" stroke="#4f6fe0" stroke-width="0.95"/><circle cx="1034.6" cy="515.7" r="1.5" fill="#fff" stroke="#4f6fe0" stroke-width="0.95"/><circle cx="1037.0" cy="514.6" r="1.5" fill="#fff" stroke="#4f6fe0" stroke-width="0.95"/><circle cx="1040.4" cy="516.0" r="1.5" fill="#fff" stroke="#4f6fe0" stroke-width="0.95"/><path d="M845.8 501.2 H859" stroke="#5470c6" stroke-width="0.9"/><circle cx="852.4" cy="501.2" r="2.5" fill="#fff" stroke="#5470c6" stroke-width="0.9"/><text x="862.20" y="504" font-size="6.6" fill="#333" text-anchor="start" font-weight="normal" >得分</text><path d="M880.2 501.2 H894" stroke="#f01818" stroke-width="0.9"/><circle cx="887.1" cy="501.2" r="2.6" fill="#f01818"/><text x="897.60" y="504" font-size="6.6" fill="#333" text-anchor="start" font-weight="normal" >历史平均得分</text></svg>
<div class="a" style="left:1078.9px;top:94.5px;width:1.1px;height:478px;background:#777"></div>
<div class="a" style="left:0px;top:585px;width:1080px;height:23px;background:#6ac5e8"></div>
<div class="a" style="left:0px;top:585px;width:1080px;height:0.7px;background:#8aa0aa"></div>
<div class="a" style="left:1079.2px;top:585.7px;width:0.8px;height:22.3px;background:#2e6b82"></div>
<svg width="1080" height="608" viewBox="0 0 1080 608"><path d="M6.5 591.3 L12.6 590.4 V596.1 H6.5 Z M13.4 590.3 L21.4 589.1 V596.1 H13.4 Z M6.5 596.9 H12.6 V602.6 L6.5 601.7 Z M13.4 596.9 H21.4 V603.9 L13.4 602.7 Z" fill="#fff"/><rect x="36.8" y="588" width="7" height="13" fill="#3f8fe0" stroke="#2a67b0" stroke-width="0.5"/><rect x="38" y="590" width="4.6" height="1" fill="#cfe6ff"/><rect x="38" y="592.4" width="4.6" height="1" fill="#cfe6ff"/><rect x="40" y="597.6" width="14.6" height="6.6" rx="0.8" fill="#8d99a6" stroke="#e4e9ee" stroke-width="0.7"/><path d="M44.5 596.6 h5.5 v1" fill="none" stroke="#e4e9ee" stroke-width="0.7"/><rect x="42" y="600.6" width="10.6" height="1.1" fill="#e4e9ee"/><path d="M74 590.5 H88.5 L86 602.5 H71.5 Z" fill="#2e6fc0" stroke="#bcd6f5" stroke-width="0.6"/><path d="M76.5 593.2 L81.3 596.4 L75.6 600" fill="none" stroke="#fff" stroke-width="1.3"/><path d="M80.8 600.2 H84.6" stroke="#fff" stroke-width="1.1"/><path d="M104.5 590 H110 L111.5 591.6 H121.5 V603.5 H104.5 Z" fill="#f2cf6a" stroke="#b99a3e" stroke-width="0.5"/><rect x="105.8" y="593.2" width="14.4" height="9.8" fill="#fbe8a3"/><rect x="108" y="599" width="10" height="4.5" fill="#9fc9ee" stroke="#6b98c0" stroke-width="0.4"/><rect x="97.5" y="586" width="0.55" height="22" fill="#3f97ba"/><rect x="98.05" y="586" width="0.5" height="22" fill="#93d8f0"/><rect x="127.3" y="586" width="0.55" height="22" fill="#3f97ba"/><rect x="127.85" y="586" width="0.5" height="22" fill="#93d8f0"/><rect x="129.9" y="586" width="0.55" height="22" fill="#3f97ba"/><rect x="130.45000000000002" y="586" width="0.5" height="22" fill="#93d8f0"/><rect x="132.5" y="586" width="0.55" height="22" fill="#3f97ba"/><rect x="133.05" y="586" width="0.5" height="22" fill="#93d8f0"/><rect x="162.5" y="586" width="0.55" height="22" fill="#3f97ba"/><rect x="163.05" y="586" width="0.5" height="22" fill="#93d8f0"/><rect x="164.9" y="586" width="0.55" height="22" fill="#3f97ba"/><rect x="165.45000000000002" y="586" width="0.5" height="22" fill="#93d8f0"/><rect x="167.1" y="586" width="0.55" height="22" fill="#3f97ba"/><rect x="167.65" y="586" width="0.5" height="22" fill="#93d8f0"/><rect x="202.0" y="586" width="0.55" height="22" fill="#3f97ba"/><rect x="202.55" y="586" width="0.5" height="22" fill="#93d8f0"/><rect x="237.0" y="586" width="0.55" height="22" fill="#3f97ba"/><rect x="237.55" y="586" width="0.5" height="22" fill="#93d8f0"/><rect x="272.0" y="586" width="0.55" height="22" fill="#3f97ba"/><rect x="272.55" y="586" width="0.5" height="22" fill="#93d8f0"/><rect x="307.0" y="586" width="0.55" height="22" fill="#3f97ba"/><rect x="307.55" y="586" width="0.5" height="22" fill="#93d8f0"/><rect x="342.0" y="586" width="0.55" height="22" fill="#3f97ba"/><rect x="342.55" y="586" width="0.5" height="22" fill="#93d8f0"/><rect x="377.0" y="586" width="0.55" height="22" fill="#3f97ba"/><rect x="377.55" y="586" width="0.5" height="22" fill="#93d8f0"/><rect x="412.0" y="586" width="0.55" height="22" fill="#3f97ba"/><rect x="412.55" y="586" width="0.5" height="22" fill="#93d8f0"/><g transform="translate(2.5 0)"><path d="M137.6 595 Q137 588.6 142.6 588.4 Q148 588.6 147.6 594 L146.8 598.4 L140 598.6 Z" fill="#1c1a19"/><path d="M142.4 591.4 Q146.6 591 146.6 594.6 L146 598 Q144 599.4 142.2 598 Z" fill="#5e5b59"/><path d="M136.6 604.4 Q137 599.6 141 599 L145.4 599.4 L146.6 604.4 Z" fill="#23a596"/><path d="M147.4 592.4 Q148.4 588.6 152.4 589 Q156.4 589.6 155.6 593.4 L155.8 596 L153.6 593 L149 592.6 Z" fill="#f2d523"/><path d="M148.8 592.8 L153.6 593.2 L155 596 L154.4 599.4 Q151.4 600.6 149.4 598.6 Z" fill="#f6ebe6"/><path d="M146.4 604.4 L147.4 600.4 L150.6 599.6 L155.4 600.6 L156 604.4 Z" fill="#b22db4"/><path d="M150.4 599.8 L152 604.4 H149.4 Z" fill="#2a4fd0"/></g><g transform="translate(185 596)" fill="none" stroke-width="2.5"><defs><linearGradient id="inf1" x1="0" y1="0" x2="0" y2="1"><stop offset="0" stop-color="#f2c12e"/><stop offset="0.5" stop-color="#5fb04a"/><stop offset="1" stop-color="#2f6fd6"/></linearGradient><linearGradient id="inf2" x1="0" y1="0" x2="0" y2="1"><stop offset="0" stop-color="#2f6fd6"/><stop offset="0.6" stop-color="#4aa3d8"/><stop offset="1" stop-color="#5fb04a"/></linearGradient></defs><ellipse cx="-4.2" cy="0" rx="3.8" ry="3.4" stroke="url(#inf1)"/><ellipse cx="4.2" cy="0" rx="3.8" ry="3.4" stroke="url(#inf2)"/><path d="M-4.6 -4.2 Q-1.5 -3.6 0 0 Q1.5 3.6 4.6 4.2" stroke="#ee7f22" stroke-width="2.7" stroke-linecap="round"/><path d="M4.4 -4 Q6.8 -3.4 7.6 -1" stroke="#ee7f22" stroke-width="2.2" stroke-linecap="round"/></g><g transform="translate(0.5 0)"><rect x="210.5" y="589.5" width="18" height="13" rx="1" fill="#5aa0e0" stroke="#2a5f9e" stroke-width="0.6"/><rect x="219" y="591.5" width="8" height="2" fill="#e8f2ff"/><rect x="219" y="595" width="8" height="2" fill="#e8f2ff"/><circle cx="214.8" cy="594" r="2.3" fill="#f7d54a"/><ellipse cx="219" cy="602.5" rx="4" ry="2.4" fill="#e4e7ea" stroke="#707880" stroke-width="0.5"/></g><g transform="translate(1 0)"><rect x="248.5" y="590" width="14" height="10.5" fill="#dde6ee" stroke="#6f7f8e" stroke-width="0.6"/><rect x="245" y="593" width="12" height="9" fill="#c8d4df" stroke="#6f7f8e" stroke-width="0.5"/><path d="M250 598 L252.5 593.5 L254.5 599 L256.5 595.5 L258.5 598.5" fill="none" stroke="#2f74c9" stroke-width="0.8"/><rect x="251" y="602" width="9" height="1.5" fill="#8b969f"/></g><g transform="translate(1 0)"><rect x="279.5" y="587.2" width="19" height="18" fill="#b5221f" stroke="#6e0f0d" stroke-width="0.6"/><rect x="282" y="588.6" width="14" height="2.6" fill="#e9d6d4"/><rect x="282.4" y="592.6" width="12.8" height="11" fill="none" stroke="#fff" stroke-width="1.2"/><circle cx="289" cy="597.5" r="3" fill="none" stroke="#fff" stroke-width="1.2"/><path d="M291 599.8 L294.5 603.3 M283 603 L286.5 599.5" stroke="#fff" stroke-width="1.2"/></g><rect x="307.8" y="585.6" width="34.4" height="22.4" fill="#a8ddf2"/><g transform="translate(325 596.6)"><circle r="7.6" fill="#dd4b3e"/><path d="M0 0 L-6.58 3.8 A7.6 7.6 0 0 0 0.4 7.59 L3.8 1.6 Z" fill="#1da362"/><path d="M0 0 L0.4 7.59 A7.6 7.6 0 0 0 6.9 -3.2 L0 -3.4 Z" fill="#fcc934"/><path d="M-6.58 3.8 L-3.0 -1.6 L0 0Z" fill="#1da362"/><circle r="3.5" fill="#fff"/><circle r="2.8" fill="#4c8bf5"/></g><g transform="translate(2 0)"><rect x="357.5" y="588" width="9" height="14" fill="#d8d2c4" stroke="#6d675c" stroke-width="0.6"/><rect x="359" y="590" width="6" height="1" fill="#777"/><rect x="359" y="592.5" width="6" height="1" fill="#777"/><rect x="350.5" y="594.5" width="10.5" height="8" fill="#2c3e8f" stroke="#d8d2c4" stroke-width="1"/><rect x="349.5" y="603.2" width="12" height="1.6" fill="#b5b0a4"/></g><path d="M388.5 591 V602 A6 2.4 0 0 0 400.5 602 V591 Z" fill="#c35a9c"/><ellipse cx="394.5" cy="591" rx="6" ry="2.4" fill="#eaa6cf"/><path d="M388.5 594.8 A6 2.4 0 0 0 400.5 594.8 M388.5 598.4 A6 2.4 0 0 0 400.5 598.4" fill="none" stroke="#f3c8e2" stroke-width="0.7"/><circle cx="389.5" cy="601.5" r="3" fill="#aab0b6" stroke="#666" stroke-width="0.5"/><circle cx="389.5" cy="601.5" r="1" fill="#eee"/><path d="M948.6 597.6 L953.4 597.6 L951 594.8 Z" fill="#222"/><path d="M961.5 593 V604" stroke="#eee" stroke-width="1.1"/><path d="M962 593.5 Q964.5 592.3 966.5 593.6 Q967.8 594.4 969.3 593.8 V598.2 Q967.6 598.9 966.3 598 Q964.4 596.8 962 598 Z" fill="#fff" stroke="#888" stroke-width="0.4"/><rect x="975.5" y="593" width="7" height="6" fill="#9ab" stroke="#556" stroke-width="0.5"/><rect x="974" y="596.5" width="7" height="5.5" fill="#bcd" stroke="#556" stroke-width="0.5"/><path d="M979.5 603.2 L982.3 598 L985.1 603.2 Z" fill="#f5c518" stroke="#a07b00" stroke-width="0.3"/><path d="M988.5 594.8 H990.2 L993 592.4 V601.4 L990.2 599 H988.5 Z" fill="#f4f4f4" stroke="#777" stroke-width="0.4"/><circle cx="994" cy="599.6" r="2.4" fill="#e02b20"/><path d="M993 598.6 L995 600.6 M995 598.6 L993 600.6" stroke="#fff" stroke-width="0.6"/><path d="M1004.2 594.3 h6.6 l-1 1.2 v3.6 l1 1.2 h-6.6 l1 -1.2 v-3.6 Z" fill="#d9dde0" stroke="#555" stroke-width="0.5"/><path d="M1003.6 593.8 l2 1.4 M1011.4 593.8 l-2 1.4 M1003.6 600.8 l2 -1.4 M1011.4 600.8 l-2 -1.4" stroke="#555" stroke-width="0.6"/><rect x="1018.8" y="593.2" width="8" height="7.6" fill="#fff" stroke="#333" stroke-width="0.6"/></svg>
<svg class="a" width="1" height="1"><text x="1022.80" y="600" font-size="6.6" fill="#111" font-weight="bold" text-anchor="middle">M</text></svg>
<svg class="a" width="1" height="1"><text x="1054.50" y="595" font-size="7" fill="#111" text-anchor="middle">10:45</text></svg>
<svg class="a" width="1" height="1"><text x="1054.50" y="605" font-size="7" fill="#111" text-anchor="middle">2023/6/29</text></svg>
</div>
</body></html>
